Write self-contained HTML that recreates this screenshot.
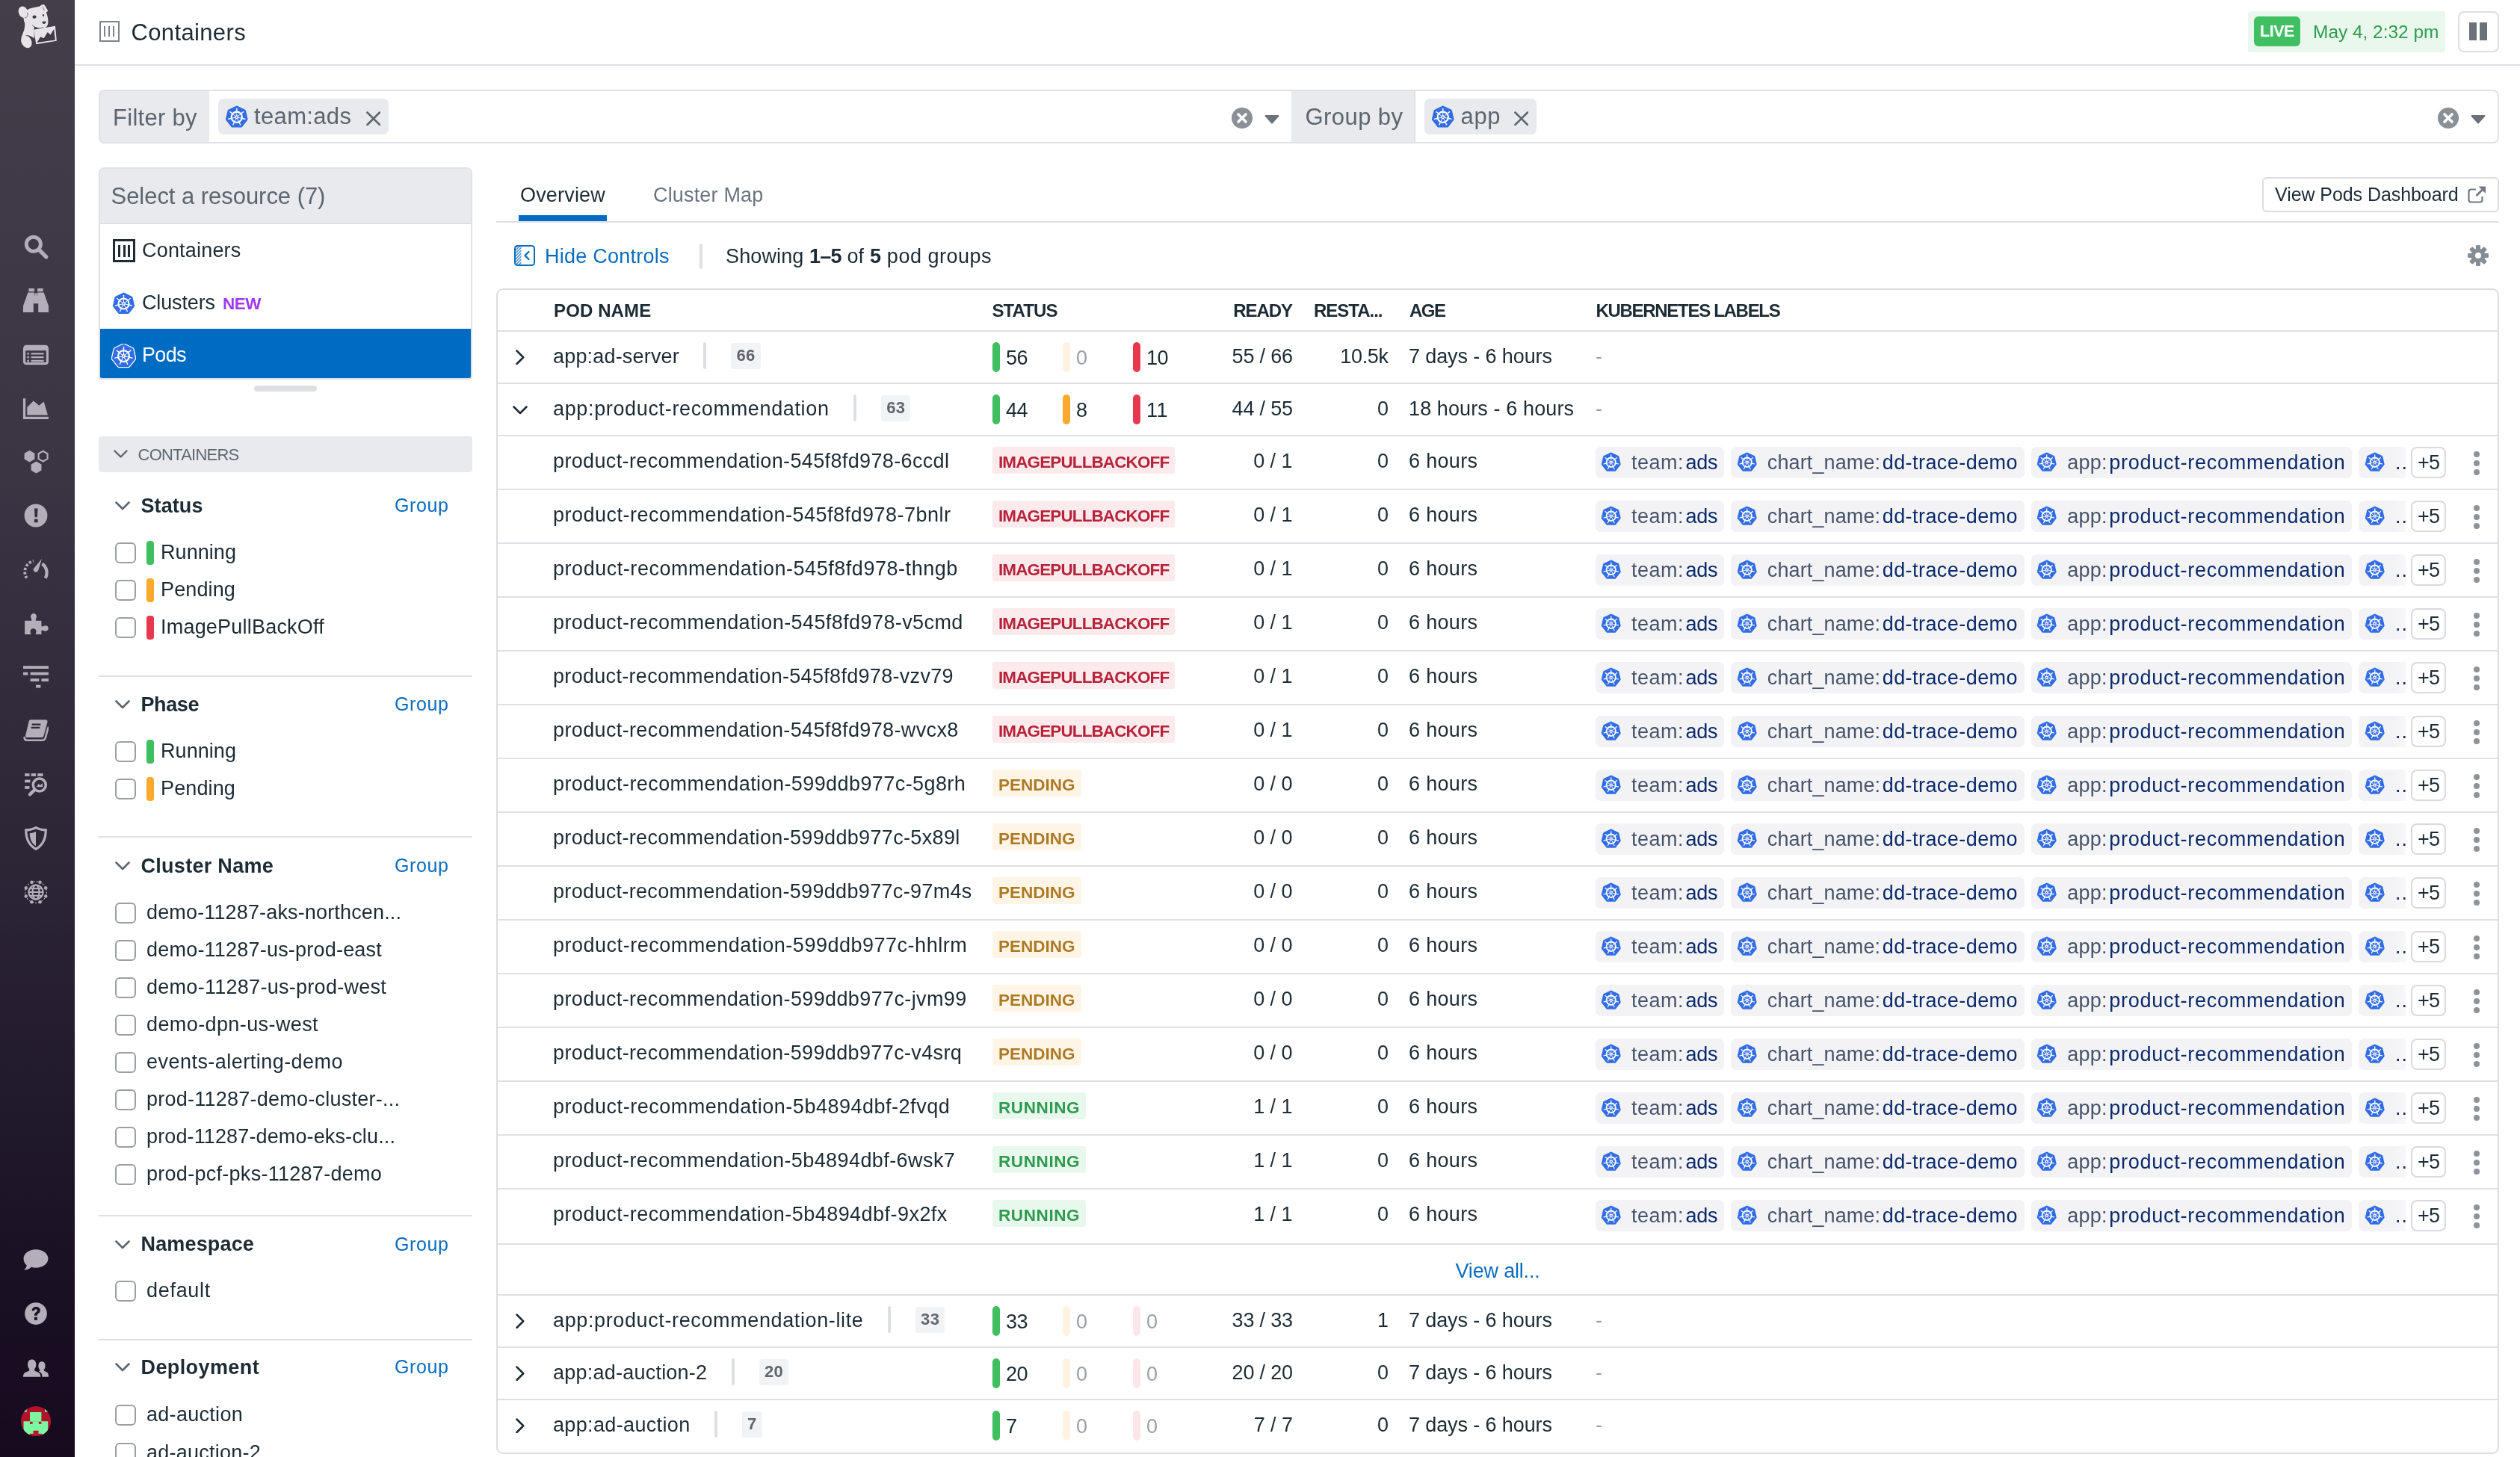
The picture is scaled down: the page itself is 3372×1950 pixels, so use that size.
<!DOCTYPE html>
<html lang="en"><head><meta charset="utf-8"><title>Containers</title><style>
html,body{margin:0;padding:0;}
html{width:3372px;height:1950px;overflow:hidden;background:#fff;}
body{width:3372px;height:1950px;overflow:hidden;background:#fff;position:relative;will-change:transform;font-family:"Liberation Sans",sans-serif;color:#1c2b34;}
div,span,svg{position:absolute;box-sizing:border-box;}
span{white-space:pre;}
b{font-weight:700;}
#root{left:0;top:0;width:3372px;height:1950px;overflow:hidden;}
</style></head><body><div id="root">
<div style="left:0px;top:0px;width:100px;height:1950px;background:linear-gradient(180deg,#433e4a 0%,#3b3544 30%,#2c2536 60%,#1b1226 85%,#160a1f 100%);"></div>
<svg style="left:0px;top:0px;" width="100" height="90" viewBox="0 0 1619 1457"><g fill="#e7e4e9">
<ellipse cx="500" cy="262" rx="98" ry="128" transform="rotate(-18 500 262)"/>
<path d="M560 235C640 165 800 160 872 135C895 95 950 85 972 118L1042 238L1002 268C1025 335 1052 420 1042 500C1036 560 1002 600 942 612C880 640 800 612 742 572L735 645L742 835C700 792 640 762 560 772L462 812C490 720 545 640 538 500C498 420 498 300 560 235Z"/>
<ellipse cx="572" cy="900" rx="108" ry="146" transform="rotate(-28 572 900)"/>
<path d="M730 643L1197 563L1228 886L782 960Z"/>
</g>
<g fill="#3f3a47">
<ellipse cx="745" cy="366" rx="42" ry="34" transform="rotate(-15 745 366)"/>
<ellipse cx="940" cy="332" rx="17" ry="27" transform="rotate(-25 940 332)"/>
<path d="M910 478C935 455 985 455 1000 470C990 505 965 525 945 518C925 510 912 495 910 478Z"/>
<path d="M800 922L878 798L950 828L1032 698L1092 752L1168 632L1196 868Z"/>
</g>
<g fill="none" stroke="#3f3a47" stroke-width="11" stroke-linecap="round">
<path d="M700 548C760 600 850 635 935 592"/>
<path d="M588 275C612 330 598 378 540 388"/>
<path d="M565 772C640 760 700 815 712 895"/>
<path d="M928 150L958 222"/>
</g></svg>
<svg style="left:31.0px;top:313.0px;" width="34" height="34" viewBox="0 0 32 32"><circle cx="13" cy="13" r="9" fill="none" stroke="#b4adba" stroke-width="4.6"/><path d="M20 20l9 9" stroke="#b4adba" stroke-width="5" stroke-linecap="round"/></svg>
<svg style="left:31.0px;top:385.0px;" width="34" height="34" viewBox="0 0 32 32"><g fill="#b4adba"><path d="M7 1h7v4H7zM18 1h7v4h-7zM6 6h8v4h4V6h8l6 17v8H19V20h-6v11H0v-8z"/><rect x="14.5" y="7" width="3" height="10" fill="#b4adba"/></g></svg>
<svg style="left:31.0px;top:458.0px;" width="34" height="34" viewBox="0 0 32 32"><g fill="none" stroke="#b4adba"><rect x="1.5" y="5" width="29" height="22" rx="2.5" stroke-width="3"/><path d="M1.5 8.5h29" stroke-width="4"/><path d="M10 14.5h16M10 19h16M10 23.5h16" stroke-width="2.2"/><path d="M5 14.5h2.5M5 19h2.5M5 23.5h2.5" stroke-width="2.2"/></g></svg>
<svg style="left:31.0px;top:529.0px;" width="34" height="34" viewBox="0 0 32 32"><g fill="#b4adba"><path d="M0 4h3v23h29v3H0z"/><path d="M5 25V15l8-8 7 6 6-5 5 17z"/></g></svg>
<svg style="left:31.0px;top:600.0px;" width="34" height="34" viewBox="0 0 32 32"><polygon points="8.00,2.50 14.50,6.25 14.50,13.75 8.00,17.50 1.50,13.75 1.50,6.25" fill="#b4adba"/><polygon points="16.50,16.50 23.00,20.25 23.00,27.75 16.50,31.50 10.00,27.75 10.00,20.25" fill="#b4adba"/><polygon points="25.00,3.50 30.63,6.75 30.63,13.25 25.00,16.50 19.37,13.25 19.37,6.75" fill="none" stroke="#b4adba" stroke-width="2"/></svg>
<svg style="left:31.0px;top:673.0px;" width="34" height="34" viewBox="0 0 32 32"><circle cx="16" cy="16" r="14.5" fill="#b4adba"/><path d="M14 7h4.5l-.8 11h-2.9z" fill="#362f40"/><rect x="14" y="20.5" width="4.5" height="4.2" fill="#362f40"/></svg>
<svg style="left:31.0px;top:745.0px;" width="34" height="34" viewBox="0 0 32 32"><g fill="none" stroke="#b4adba"><path d="M4.5 27A14 14 0 0 1 13 5.5" stroke-width="3.6" stroke-dasharray="3 2.2"/><path d="M24 9A14 14 0 0 1 28 27" stroke-width="4"/></g><path d="M23.5 2.5L19 17.5a3.2 3.2 0 0 1-6-2.2z" fill="#b4adba"/></svg>
<svg style="left:31.0px;top:817.0px;" width="34" height="34" viewBox="0 0 32 32"><path d="M2 13h7.5c1.2 0 1.5-1 1-2-.8-1.5-1-2.5-1-3.5 0-2.2 1.6-3.8 3.7-3.8s3.7 1.6 3.7 3.8c0 1-.3 2-1 3.5-.5 1 0 2 1 2H23v6c0 1.2 1 1.5 2 1 1-.6 2-.9 3-.9 2.2 0 3.8 1.5 3.8 3.5S30.2 26 28 26c-1 0-2-.3-3-.9-1-.5-2-.2-2 1V30h-7.5c.6-1.2 1-2.3 1-3.5 0-2.2-1.6-3.7-3.7-3.7S9 24.3 9 26.5c0 1.2.4 2.3 1 3.5H2z" fill="#b4adba"/></svg>
<svg style="left:31.0px;top:888.0px;" width="34" height="34" viewBox="0 0 32 32"><g fill="#b4adba"><rect x="0" y="3" width="32" height="3.6"/><rect x="0" y="11" width="6" height="3.6"/><rect x="9" y="11" width="23" height="3.6"/><rect x="9" y="19" width="11" height="3.6"/><rect x="23" y="19" width="9" height="3.6"/><rect x="16" y="27" width="6" height="3.6"/></g></svg>
<svg style="left:31.0px;top:960.0px;" width="34" height="34" viewBox="0 0 32 32"><g fill="#b4adba"><path d="M9 3h19c2 0 3 1.3 2.5 3l-4.5 17c-.4 1.5-1.5 2.5-3 2.5H5c-1.5 0-2.5-1.2-2-3L7 6c.3-1.7 .8-3 2-3z"/><path d="M1.5 25.5c0 2 1.2 3.5 3.3 3.5H24c2 0 3.3-1 4-3l3.5-13" fill="none" stroke="#b4adba" stroke-width="2.4" stroke-linecap="round"/></g><path d="M11 9h11M10 13h11" stroke="#2e2738" stroke-width="2"/></svg>
<svg style="left:31.0px;top:1033.0px;" width="34" height="34" viewBox="0 0 32 32"><g fill="#b4adba"><rect x="2" y="2" width="6" height="3.5"/><rect x="10" y="2" width="6" height="3.5"/><rect x="18" y="2" width="7" height="3.5"/><rect x="2" y="10" width="7" height="3.5"/><rect x="2" y="18" width="6" height="3.5"/></g><circle cx="20.5" cy="16.5" r="8" fill="none" stroke="#b4adba" stroke-width="3.4"/><path d="M14.5 22.5l-6 6" stroke="#b4adba" stroke-width="4.2" stroke-linecap="round"/><path d="M16.5 19l3-4 2 2 3-3v5z" fill="#b4adba"/></svg>
<svg style="left:31.0px;top:1105.0px;" width="34" height="34" viewBox="0 0 32 32"><path d="M16 2.5c4 2.2 8 3 12.5 3 0 11-3 19-12.5 24C6.5 24.5 3.5 16.5 3.5 5.5c4.5 0 8.5-.8 12.5-3z" fill="none" stroke="#b4adba" stroke-width="3"/><path d="M16 7.5c-2.5 1.3-5 2-7.8 2.2 .3 7.5 2.3 12.5 7.8 16z" fill="#b4adba"/></svg>
<svg style="left:31.0px;top:1177.0px;" width="34" height="34" viewBox="0 0 32 32"><g fill="none" stroke="#b4adba" stroke-width="2"><circle cx="16" cy="16" r="9"/><ellipse cx="16" cy="16" rx="4.2" ry="9"/><path d="M7 16h18M8.5 11.5h15M8.5 20.5h15"/><circle cx="16" cy="16" r="13.5" stroke-width="1" stroke-dasharray="2 2"/></g><g fill="#b4adba"><circle cx="28.47" cy="21.17" r="2.1"/><circle cx="21.17" cy="28.47" r="2.1"/><circle cx="10.83" cy="28.47" r="2.1"/><circle cx="3.53" cy="21.17" r="2.1"/><circle cx="3.53" cy="10.83" r="2.1"/><circle cx="10.83" cy="3.53" r="2.1"/><circle cx="21.17" cy="3.53" r="2.1"/><circle cx="28.47" cy="10.83" r="2.1"/></g></svg>
<svg style="left:31.0px;top:1669.0px;" width="34" height="34" viewBox="0 0 32 32"><path d="M16 3c8.5 0 15.5 5 15.5 11.5S24.5 26 16 26c-2 0-4-.3-5.7-.8C8 27.5 4.5 29 1 29c2-1.8 3.2-3.8 3.5-6C2 21 .5 18 .5 14.5.5 8 7.5 3 16 3z" fill="#b4adba"/></svg>
<svg style="left:31.0px;top:1741.0px;" width="34" height="34" viewBox="0 0 32 32"><circle cx="16" cy="16" r="14" fill="#b4adba"/><path d="M11 12.5c0-3 2.2-5 5.2-5s5.3 1.8 5.3 4.5c0 2.2-1.2 3.2-2.5 4-1 .7-1.3 1.2-1.3 2.5h-3.7c0-2.2.8-3.3 2.2-4.2 1-.7 1.5-1.2 1.5-2.2 0-.9-.7-1.5-1.7-1.5-1.1 0-1.8.7-1.8 1.9z" fill="#1a1224"/><rect x="14" y="20.5" width="3.8" height="3.8" fill="#1a1224"/></svg>
<svg style="left:31.0px;top:1813.0px;" width="34" height="34" viewBox="0 0 32 32"><g fill="#b4adba"><path d="M0 28c0-4 2-5.5 5-6.5 2-.7 3-1.5 3-3-1.5-1.5-2.3-3.5-2.3-6C5.7 8.5 7.7 6 11 6s5.3 2.5 5.3 6.5c0 2.5-.8 4.5-2.3 6 0 1.5 1 2.3 3 3 3 1 5 2.5 5 6.5z"/><path d="M24 28c0-3.5-1.5-5.8-4.5-7 1-.5 1.5-1 1.5-2-1.2-1.3-1.8-3-1.8-5 0-3.3 1.7-5.3 4.3-5.3s4.3 2 4.3 5.3c0 2-.6 3.7-1.8 5 0 1.2.8 1.8 2.5 2.4 2.5.9 3.5 2.6 3.5 6.6z"/></g></svg>
<svg style="left:28px;top:1882px;" width="40" height="40" viewBox="0 0 40 40"><defs><clipPath id="avc"><circle cx="20" cy="20" r="20"/></clipPath></defs><g clip-path="url(#avc)"><rect width="40" height="40" fill="#b3122b"/><g fill="#7ef7a1"><rect x="12" y="8" width="15.4" height="12.4"/><rect x="3.5" y="20.2" width="32.7" height="18.2"/><rect x="3.5" y="4" width="4.2" height="3.7"/><rect x="32" y="4" width="4.2" height="3.7"/></g><g fill="#b3122b"><rect x="12" y="20.8" width="3.6" height="3"/><rect x="23.8" y="20.8" width="3.6" height="3"/><rect x="16.5" y="32.7" width="7" height="4.2"/><rect x="12" y="36.8" width="16.2" height="3.2"/></g></g></svg>
<div style="left:100px;top:86px;width:3272px;height:2px;background:#e0e1e5;"></div>
<div style="left:133px;top:28px;width:26.5px;height:28px;border:2.5px solid #7b838b;"></div>
<div style="left:139px;top:35px;width:2px;height:14px;background:#7b838b;"></div>
<div style="left:145.2px;top:35px;width:2px;height:14px;background:#7b838b;"></div>
<div style="left:151.4px;top:35px;width:2px;height:14px;background:#7b838b;"></div>
<span style="top:24.3px;font-size:31px;line-height:40px;left:175.5px;letter-spacing:0.36px;">Containers</span>
<div style="left:3008px;top:14.8px;width:264px;height:54.8px;background:#eaf7ed;border-radius:4px;"></div>
<div style="left:3016px;top:22px;width:62px;height:40px;background:#40c063;border-radius:6px;"></div>
<span style="top:28.4px;font-size:21.5px;line-height:28px;left:3024px;letter-spacing:-0.45px;font-weight:700;color:#fff;">LIVE</span>
<span style="top:27.1px;font-size:24.5px;line-height:32px;left:3095px;letter-spacing:-0.03px;color:#2f9d4f;">May 4, 2:32 pm</span>
<div style="left:3288.5px;top:14.5px;width:55px;height:55px;border:2px solid #dcdee1;border-radius:8px;background:#fff;"></div>
<div style="left:3304px;top:30px;width:9.6px;height:24px;background:#6b717b;"></div>
<div style="left:3318.3px;top:30px;width:9.7px;height:24px;background:#6b717b;"></div>
<div style="left:132px;top:120px;width:3212px;height:72px;border:2px solid #e0e1e5;border-radius:8px;background:#fff;"></div>
<div style="left:132px;top:120px;width:148px;height:72px;background:#e9eaed;border:2px solid #e0e1e5;border-right:none;border-radius:8px 0 0 8px;"></div>
<div style="left:1728px;top:120px;width:166px;height:72px;background:#e9eaed;border:2px solid #e0e1e5;border-left:none;"></div>
<span style="top:137.8px;font-size:31px;line-height:40px;left:151px;letter-spacing:0.28px;color:#5c6570;">Filter by</span>
<div style="left:292px;top:132px;width:228px;height:48px;background:#e9eaed;border-radius:7px;"></div>
<svg style="left:300.5px;top:140.5px;" width="31.5" height="31.5" viewBox="-2 0 104 104"><polygon points="50.00,8.00 84.40,24.57 92.90,61.79 69.09,91.64 30.91,91.64 7.10,61.79 15.60,24.57" fill="#326de6" stroke="#326de6" stroke-width="12" stroke-linejoin="round"/><circle cx="50" cy="52" r="23.5" fill="none" stroke="#fff" stroke-width="7"/><line x1="50.0" y1="46.0" x2="50.0" y2="30.0" stroke="#fff" stroke-width="3.2"/><line x1="50.0" y1="26.0" x2="50.0" y2="14.5" stroke="#fff" stroke-width="4.6" stroke-linecap="round"/><line x1="54.7" y1="48.3" x2="67.2" y2="38.3" stroke="#fff" stroke-width="3.2"/><line x1="70.3" y1="35.8" x2="79.3" y2="28.6" stroke="#fff" stroke-width="4.6" stroke-linecap="round"/><line x1="55.8" y1="53.3" x2="71.4" y2="56.9" stroke="#fff" stroke-width="3.2"/><line x1="75.3" y1="57.8" x2="86.6" y2="60.3" stroke="#fff" stroke-width="4.6" stroke-linecap="round"/><line x1="52.6" y1="57.4" x2="59.5" y2="71.8" stroke="#fff" stroke-width="3.2"/><line x1="61.3" y1="75.4" x2="66.3" y2="85.8" stroke="#fff" stroke-width="4.6" stroke-linecap="round"/><line x1="47.4" y1="57.4" x2="40.5" y2="71.8" stroke="#fff" stroke-width="3.2"/><line x1="38.7" y1="75.4" x2="33.7" y2="85.8" stroke="#fff" stroke-width="4.6" stroke-linecap="round"/><line x1="44.2" y1="53.3" x2="28.6" y2="56.9" stroke="#fff" stroke-width="3.2"/><line x1="24.7" y1="57.8" x2="13.4" y2="60.3" stroke="#fff" stroke-width="4.6" stroke-linecap="round"/><line x1="45.3" y1="48.3" x2="32.8" y2="38.3" stroke="#fff" stroke-width="3.2"/><line x1="29.7" y1="35.8" x2="20.7" y2="28.6" stroke="#fff" stroke-width="4.6" stroke-linecap="round"/><circle cx="50" cy="52" r="8" fill="#fff"/><circle cx="50" cy="52" r="3.2" fill="#4a55c8"/></svg>
<span style="top:135.6px;font-size:31px;line-height:40px;left:340px;letter-spacing:0.35px;color:#5c6570;">team:ads</span>
<svg style="left:489.5px;top:148.5px;" width="19.5" height="19.5" viewBox="0 0 20 20"><path d="M1.5 1.5l17 17M18.5 1.5l-17 17" stroke="#5c6570" stroke-width="2.6666666666666665" stroke-linecap="round"/></svg>
<svg style="left:1648px;top:144px;" width="28" height="28" viewBox="0 0 28 28"><circle cx="14" cy="14" r="14" fill="#8a9096"/><path d="M9 9l10 10M19 9l-10 10" stroke="#fff" stroke-width="3.6" stroke-linecap="round"/></svg>
<svg style="left:1692px;top:153.5px;" width="20" height="12" viewBox="0 0 20 12"><path d="M1.5 0h17a1 1 0 0 1 .7 1.7l-8.5 9.5a1 1 0 0 1-1.4 0L.8 1.7A1 1 0 0 1 1.5 0z" fill="#6b727b"/></svg>
<span style="top:137.3px;font-size:31px;line-height:40px;left:1746.5px;letter-spacing:0.43px;color:#5c6570;">Group by</span>
<div style="left:1906px;top:132px;width:150px;height:48px;background:#e9eaed;border-radius:7px;"></div>
<svg style="left:1914.5px;top:140.5px;" width="31.5" height="31.5" viewBox="-2 0 104 104"><polygon points="50.00,8.00 84.40,24.57 92.90,61.79 69.09,91.64 30.91,91.64 7.10,61.79 15.60,24.57" fill="#326de6" stroke="#326de6" stroke-width="12" stroke-linejoin="round"/><circle cx="50" cy="52" r="23.5" fill="none" stroke="#fff" stroke-width="7"/><line x1="50.0" y1="46.0" x2="50.0" y2="30.0" stroke="#fff" stroke-width="3.2"/><line x1="50.0" y1="26.0" x2="50.0" y2="14.5" stroke="#fff" stroke-width="4.6" stroke-linecap="round"/><line x1="54.7" y1="48.3" x2="67.2" y2="38.3" stroke="#fff" stroke-width="3.2"/><line x1="70.3" y1="35.8" x2="79.3" y2="28.6" stroke="#fff" stroke-width="4.6" stroke-linecap="round"/><line x1="55.8" y1="53.3" x2="71.4" y2="56.9" stroke="#fff" stroke-width="3.2"/><line x1="75.3" y1="57.8" x2="86.6" y2="60.3" stroke="#fff" stroke-width="4.6" stroke-linecap="round"/><line x1="52.6" y1="57.4" x2="59.5" y2="71.8" stroke="#fff" stroke-width="3.2"/><line x1="61.3" y1="75.4" x2="66.3" y2="85.8" stroke="#fff" stroke-width="4.6" stroke-linecap="round"/><line x1="47.4" y1="57.4" x2="40.5" y2="71.8" stroke="#fff" stroke-width="3.2"/><line x1="38.7" y1="75.4" x2="33.7" y2="85.8" stroke="#fff" stroke-width="4.6" stroke-linecap="round"/><line x1="44.2" y1="53.3" x2="28.6" y2="56.9" stroke="#fff" stroke-width="3.2"/><line x1="24.7" y1="57.8" x2="13.4" y2="60.3" stroke="#fff" stroke-width="4.6" stroke-linecap="round"/><line x1="45.3" y1="48.3" x2="32.8" y2="38.3" stroke="#fff" stroke-width="3.2"/><line x1="29.7" y1="35.8" x2="20.7" y2="28.6" stroke="#fff" stroke-width="4.6" stroke-linecap="round"/><circle cx="50" cy="52" r="8" fill="#fff"/><circle cx="50" cy="52" r="3.2" fill="#4a55c8"/></svg>
<span style="top:135.6px;font-size:31px;line-height:40px;left:1954.5px;letter-spacing:0.67px;color:#5c6570;">app</span>
<svg style="left:2025.5px;top:148.5px;" width="19.5" height="19.5" viewBox="0 0 20 20"><path d="M1.5 1.5l17 17M18.5 1.5l-17 17" stroke="#5c6570" stroke-width="2.6666666666666665" stroke-linecap="round"/></svg>
<svg style="left:3262px;top:144px;" width="28" height="28" viewBox="0 0 28 28"><circle cx="14" cy="14" r="14" fill="#8a9096"/><path d="M9 9l10 10M19 9l-10 10" stroke="#fff" stroke-width="3.6" stroke-linecap="round"/></svg>
<svg style="left:3305.5px;top:153.5px;" width="20" height="12" viewBox="0 0 20 12"><path d="M1.5 0h17a1 1 0 0 1 .7 1.7l-8.5 9.5a1 1 0 0 1-1.4 0L.8 1.7A1 1 0 0 1 1.5 0z" fill="#6b727b"/></svg>
<div style="left:132px;top:224px;width:500px;height:284px;border:2px solid #e0e1e5;border-radius:8px 8px 4px 4px;background:#fff;overflow:hidden;box-shadow:0 1px 2px rgba(0,0,0,.06);"><div style="left:0;top:0;width:496px;height:72px;background:#e9eaed;"></div><div style="left:0;top:72px;width:496px;height:2px;background:#dcdfe5;"></div><div style="left:0;top:214px;width:496px;height:70px;background:#006bc2;"></div></div>
<span style="top:243.3px;font-size:31px;line-height:40px;left:148.5px;letter-spacing:-0.04px;color:#5c6570;">Select a resource (7)</span>
<div style="left:151px;top:320px;width:30px;height:31px;border:3.5px solid #1c2b34;"></div>
<div style="left:158px;top:328px;width:3px;height:16px;background:#1c2b34;"></div>
<div style="left:164.5px;top:328px;width:3px;height:16px;background:#1c2b34;"></div>
<div style="left:171px;top:328px;width:3px;height:16px;background:#1c2b34;"></div>
<span style="top:317.7px;font-size:27px;line-height:35px;left:190px;letter-spacing:0.19px;">Containers</span>
<svg style="left:150px;top:391px;" width="31" height="31" viewBox="-2 0 104 104"><polygon points="50.00,8.00 84.40,24.57 92.90,61.79 69.09,91.64 30.91,91.64 7.10,61.79 15.60,24.57" fill="#326de6" stroke="#326de6" stroke-width="12" stroke-linejoin="round"/><circle cx="50" cy="52" r="23.5" fill="none" stroke="#fff" stroke-width="7"/><line x1="50.0" y1="46.0" x2="50.0" y2="30.0" stroke="#fff" stroke-width="3.2"/><line x1="50.0" y1="26.0" x2="50.0" y2="14.5" stroke="#fff" stroke-width="4.6" stroke-linecap="round"/><line x1="54.7" y1="48.3" x2="67.2" y2="38.3" stroke="#fff" stroke-width="3.2"/><line x1="70.3" y1="35.8" x2="79.3" y2="28.6" stroke="#fff" stroke-width="4.6" stroke-linecap="round"/><line x1="55.8" y1="53.3" x2="71.4" y2="56.9" stroke="#fff" stroke-width="3.2"/><line x1="75.3" y1="57.8" x2="86.6" y2="60.3" stroke="#fff" stroke-width="4.6" stroke-linecap="round"/><line x1="52.6" y1="57.4" x2="59.5" y2="71.8" stroke="#fff" stroke-width="3.2"/><line x1="61.3" y1="75.4" x2="66.3" y2="85.8" stroke="#fff" stroke-width="4.6" stroke-linecap="round"/><line x1="47.4" y1="57.4" x2="40.5" y2="71.8" stroke="#fff" stroke-width="3.2"/><line x1="38.7" y1="75.4" x2="33.7" y2="85.8" stroke="#fff" stroke-width="4.6" stroke-linecap="round"/><line x1="44.2" y1="53.3" x2="28.6" y2="56.9" stroke="#fff" stroke-width="3.2"/><line x1="24.7" y1="57.8" x2="13.4" y2="60.3" stroke="#fff" stroke-width="4.6" stroke-linecap="round"/><line x1="45.3" y1="48.3" x2="32.8" y2="38.3" stroke="#fff" stroke-width="3.2"/><line x1="29.7" y1="35.8" x2="20.7" y2="28.6" stroke="#fff" stroke-width="4.6" stroke-linecap="round"/><circle cx="50" cy="52" r="8" fill="#fff"/><circle cx="50" cy="52" r="3.2" fill="#4a55c8"/></svg>
<span style="top:388.1px;font-size:27px;line-height:35px;left:190px;letter-spacing:-0.13px;">Clusters</span>
<span style="top:392.2px;font-size:22.5px;line-height:29px;left:298px;letter-spacing:-0.5px;font-weight:700;color:#9f3bf2;">NEW</span>
<svg style="left:149px;top:460px;" width="33" height="33" viewBox="-2 0 104 104"><polygon points="50.00,8.00 84.40,24.57 92.90,61.79 69.09,91.64 30.91,91.64 7.10,61.79 15.60,24.57" fill="#fff" stroke="#fff" stroke-width="20" stroke-linejoin="round"/><polygon points="50.00,8.00 84.40,24.57 92.90,61.79 69.09,91.64 30.91,91.64 7.10,61.79 15.60,24.57" fill="#326de6" stroke="#326de6" stroke-width="12" stroke-linejoin="round"/><circle cx="50" cy="52" r="23.5" fill="none" stroke="#fff" stroke-width="7"/><line x1="50.0" y1="46.0" x2="50.0" y2="30.0" stroke="#fff" stroke-width="3.2"/><line x1="50.0" y1="26.0" x2="50.0" y2="14.5" stroke="#fff" stroke-width="4.6" stroke-linecap="round"/><line x1="54.7" y1="48.3" x2="67.2" y2="38.3" stroke="#fff" stroke-width="3.2"/><line x1="70.3" y1="35.8" x2="79.3" y2="28.6" stroke="#fff" stroke-width="4.6" stroke-linecap="round"/><line x1="55.8" y1="53.3" x2="71.4" y2="56.9" stroke="#fff" stroke-width="3.2"/><line x1="75.3" y1="57.8" x2="86.6" y2="60.3" stroke="#fff" stroke-width="4.6" stroke-linecap="round"/><line x1="52.6" y1="57.4" x2="59.5" y2="71.8" stroke="#fff" stroke-width="3.2"/><line x1="61.3" y1="75.4" x2="66.3" y2="85.8" stroke="#fff" stroke-width="4.6" stroke-linecap="round"/><line x1="47.4" y1="57.4" x2="40.5" y2="71.8" stroke="#fff" stroke-width="3.2"/><line x1="38.7" y1="75.4" x2="33.7" y2="85.8" stroke="#fff" stroke-width="4.6" stroke-linecap="round"/><line x1="44.2" y1="53.3" x2="28.6" y2="56.9" stroke="#fff" stroke-width="3.2"/><line x1="24.7" y1="57.8" x2="13.4" y2="60.3" stroke="#fff" stroke-width="4.6" stroke-linecap="round"/><line x1="45.3" y1="48.3" x2="32.8" y2="38.3" stroke="#fff" stroke-width="3.2"/><line x1="29.7" y1="35.8" x2="20.7" y2="28.6" stroke="#fff" stroke-width="4.6" stroke-linecap="round"/><circle cx="50" cy="52" r="8" fill="#fff"/><circle cx="50" cy="52" r="3.2" fill="#4a55c8"/></svg>
<span style="top:457.9px;font-size:27px;line-height:35px;left:190px;letter-spacing:-0.64px;color:#fff;">Pods</span>
<div style="left:340px;top:516px;width:84px;height:8px;background:#dddfe2;border-radius:4px;"></div>
<div style="left:132px;top:584px;width:500px;height:48px;background:#e9eaed;border-radius:4px;"></div>
<svg style="left:152.0px;top:602.25px;" width="19" height="11.5" viewBox="0 0 19 11.5"><path d="M1.5 1.5L9.5 9.5L17.5 1.5" fill="none" stroke="#5c6570" stroke-width="2.4" stroke-linecap="round" stroke-linejoin="round"/></svg>
<span style="top:593.9px;font-size:22px;line-height:29px;left:184.5px;letter-spacing:-0.76px;color:#5e6772;">CONTAINERS</span>
<svg style="left:154.0px;top:671.0px;" width="20" height="12.0" viewBox="0 0 20 12.0"><path d="M1.5 1.5L10.0 10.0L18.5 1.5" fill="none" stroke="#5c6570" stroke-width="2.6" stroke-linecap="round" stroke-linejoin="round"/></svg>
<span style="top:659.6px;font-size:27px;line-height:35px;left:188.5px;letter-spacing:0.08px;font-weight:700;">Status</span>
<span style="top:660.1px;font-size:25px;line-height:32px;left:528px;letter-spacing:0.6px;color:#0b6cbf;">Group</span>
<div style="left:154px;top:726px;width:28px;height:28px;border:2px solid #9b9ea3;border-radius:6px;background:#fff;"></div>
<div style="left:196px;top:723.5px;width:10px;height:32px;background:#3fbf5f;border-radius:4px;"></div>
<span style="top:722.4px;font-size:27px;line-height:35px;left:215px;letter-spacing:0.06px;">Running</span>
<div style="left:154px;top:776px;width:28px;height:28px;border:2px solid #9b9ea3;border-radius:6px;background:#fff;"></div>
<div style="left:196px;top:773.5px;width:10px;height:32px;background:#fbaa2d;border-radius:4px;"></div>
<span style="top:772.4px;font-size:27px;line-height:35px;left:215px;letter-spacing:0.13px;">Pending</span>
<div style="left:154px;top:826px;width:28px;height:28px;border:2px solid #9b9ea3;border-radius:6px;background:#fff;"></div>
<div style="left:196px;top:823.5px;width:10px;height:32px;background:#e8384f;border-radius:4px;"></div>
<span style="top:822.4px;font-size:27px;line-height:35px;left:215px;letter-spacing:0.21px;">ImagePullBackOff</span>
<div style="left:132px;top:904px;width:500px;height:2px;background:#dfe0e3;"></div>
<svg style="left:154.0px;top:937.0px;" width="20" height="12.0" viewBox="0 0 20 12.0"><path d="M1.5 1.5L10.0 10.0L18.5 1.5" fill="none" stroke="#5c6570" stroke-width="2.6" stroke-linecap="round" stroke-linejoin="round"/></svg>
<span style="top:925.6px;font-size:27px;line-height:35px;left:188.5px;letter-spacing:-0.41px;font-weight:700;">Phase</span>
<span style="top:926.1px;font-size:25px;line-height:32px;left:528px;letter-spacing:0.6px;color:#0b6cbf;">Group</span>
<div style="left:154px;top:992px;width:28px;height:28px;border:2px solid #9b9ea3;border-radius:6px;background:#fff;"></div>
<div style="left:196px;top:989.5px;width:10px;height:32px;background:#3fbf5f;border-radius:4px;"></div>
<span style="top:988.4px;font-size:27px;line-height:35px;left:215px;letter-spacing:0.06px;">Running</span>
<div style="left:154px;top:1042px;width:28px;height:28px;border:2px solid #9b9ea3;border-radius:6px;background:#fff;"></div>
<div style="left:196px;top:1039.5px;width:10px;height:32px;background:#fbaa2d;border-radius:4px;"></div>
<span style="top:1038.4px;font-size:27px;line-height:35px;left:215px;letter-spacing:0.13px;">Pending</span>
<div style="left:132px;top:1119px;width:500px;height:2px;background:#dfe0e3;"></div>
<svg style="left:154.0px;top:1153.0px;" width="20" height="12.0" viewBox="0 0 20 12.0"><path d="M1.5 1.5L10.0 10.0L18.5 1.5" fill="none" stroke="#5c6570" stroke-width="2.6" stroke-linecap="round" stroke-linejoin="round"/></svg>
<span style="top:1141.6px;font-size:27px;line-height:35px;left:188.5px;letter-spacing:0.29px;font-weight:700;">Cluster Name</span>
<span style="top:1142.1px;font-size:25px;line-height:32px;left:528px;letter-spacing:0.6px;color:#0b6cbf;">Group</span>
<div style="left:154px;top:1208px;width:28px;height:28px;border:2px solid #9b9ea3;border-radius:6px;background:#fff;"></div>
<span style="top:1204.4px;font-size:27px;line-height:35px;left:196px;letter-spacing:0.15px;">demo-11287-aks-northcen...</span>
<div style="left:154px;top:1258px;width:28px;height:28px;border:2px solid #9b9ea3;border-radius:6px;background:#fff;"></div>
<span style="top:1254.4px;font-size:27px;line-height:35px;left:196px;letter-spacing:0.21px;">demo-11287-us-prod-east</span>
<div style="left:154px;top:1308px;width:28px;height:28px;border:2px solid #9b9ea3;border-radius:6px;background:#fff;"></div>
<span style="top:1304.4px;font-size:27px;line-height:35px;left:196px;letter-spacing:0.28px;">demo-11287-us-prod-west</span>
<div style="left:154px;top:1358px;width:28px;height:28px;border:2px solid #9b9ea3;border-radius:6px;background:#fff;"></div>
<span style="top:1354.4px;font-size:27px;line-height:35px;left:196px;letter-spacing:0.4px;">demo-dpn-us-west</span>
<div style="left:154px;top:1408px;width:28px;height:28px;border:2px solid #9b9ea3;border-radius:6px;background:#fff;"></div>
<span style="top:1404.4px;font-size:27px;line-height:35px;left:196px;letter-spacing:0.47px;">events-alerting-demo</span>
<div style="left:154px;top:1458px;width:28px;height:28px;border:2px solid #9b9ea3;border-radius:6px;background:#fff;"></div>
<span style="top:1454.4px;font-size:27px;line-height:35px;left:196px;letter-spacing:0.24px;">prod-11287-demo-cluster-...</span>
<div style="left:154px;top:1508px;width:28px;height:28px;border:2px solid #9b9ea3;border-radius:6px;background:#fff;"></div>
<span style="top:1504.4px;font-size:27px;line-height:35px;left:196px;letter-spacing:0.13px;">prod-11287-demo-eks-clu...</span>
<div style="left:154px;top:1558px;width:28px;height:28px;border:2px solid #9b9ea3;border-radius:6px;background:#fff;"></div>
<span style="top:1554.4px;font-size:27px;line-height:35px;left:196px;letter-spacing:0.28px;">prod-pcf-pks-11287-demo</span>
<div style="left:132px;top:1626px;width:500px;height:2px;background:#dfe0e3;"></div>
<svg style="left:154.0px;top:1659.5px;" width="20" height="12.0" viewBox="0 0 20 12.0"><path d="M1.5 1.5L10.0 10.0L18.5 1.5" fill="none" stroke="#5c6570" stroke-width="2.6" stroke-linecap="round" stroke-linejoin="round"/></svg>
<span style="top:1648.1px;font-size:27px;line-height:35px;left:188.5px;letter-spacing:0.16px;font-weight:700;">Namespace</span>
<span style="top:1648.6px;font-size:25px;line-height:32px;left:528px;letter-spacing:0.6px;color:#0b6cbf;">Group</span>
<div style="left:154px;top:1714px;width:28px;height:28px;border:2px solid #9b9ea3;border-radius:6px;background:#fff;"></div>
<span style="top:1710.4px;font-size:27px;line-height:35px;left:196px;letter-spacing:0.7px;">default</span>
<div style="left:132px;top:1792px;width:500px;height:2px;background:#dfe0e3;"></div>
<svg style="left:154.0px;top:1824.2px;" width="20" height="12.0" viewBox="0 0 20 12.0"><path d="M1.5 1.5L10.0 10.0L18.5 1.5" fill="none" stroke="#5c6570" stroke-width="2.6" stroke-linecap="round" stroke-linejoin="round"/></svg>
<span style="top:1812.8px;font-size:27px;line-height:35px;left:188.5px;letter-spacing:0.4px;font-weight:700;">Deployment</span>
<span style="top:1813.3px;font-size:25px;line-height:32px;left:528px;letter-spacing:0.6px;color:#0b6cbf;">Group</span>
<div style="left:154px;top:1880px;width:28px;height:28px;border:2px solid #9b9ea3;border-radius:6px;background:#fff;"></div>
<span style="top:1876.4px;font-size:27px;line-height:35px;left:196px;letter-spacing:0.29px;">ad-auction</span>
<div style="left:154px;top:1930.5px;width:28px;height:28px;border:2px solid #9b9ea3;border-radius:6px;background:#fff;"></div>
<span style="top:1926.9px;font-size:27px;line-height:35px;left:196px;letter-spacing:0.24px;">ad-auction-2</span>
<div style="left:664px;top:296px;width:2680px;height:2px;background:#e0e1e5;"></div>
<span style="top:244.1px;font-size:27px;line-height:35px;left:696px;letter-spacing:0.18px;">Overview</span>
<div style="left:694px;top:288px;width:118px;height:8px;background:#006bc2;"></div>
<span style="top:244.1px;font-size:27px;line-height:35px;left:874px;letter-spacing:0.17px;color:#6a7380;">Cluster Map</span>
<div style="left:3027px;top:237px;width:317px;height:46.5px;border:2px solid #dadcdf;border-radius:6px;background:#fff;"></div>
<span style="top:243.6px;font-size:25px;line-height:32px;left:3044px;letter-spacing:-0.07px;">View Pods Dashboard</span>
<svg style="left:3301px;top:248px;" width="27" height="24" viewBox="0 0 27 24"><path d="M12 5.5H5.5a3 3 0 0 0-3 3v11a3 3 0 0 0 3 3h12a3 3 0 0 0 3-3V15" fill="none" stroke="#727980" stroke-width="2.2"/><path d="M12.5 14L22.5 4" fill="none" stroke="#727980" stroke-width="2.8"/><path d="M15.5 1.5H25V11z" fill="#727980"/></svg>
<svg style="left:688px;top:328px;" width="28" height="28" viewBox="0 0 28 28"><defs><pattern id="hp" width="2.8" height="2.8" patternUnits="userSpaceOnUse" patternTransform="rotate(45)"><rect width="1.2" height="2.8" fill="#0b6cbf"/></pattern></defs><rect x="1" y="1" width="26" height="26" rx="3.5" fill="#fff" stroke="#0b6cbf" stroke-width="2"/><rect x="2" y="2" width="7.5" height="24" fill="url(#hp)"/><path d="M19.5 9l-5 5 5 5" fill="none" stroke="#0b6cbf" stroke-width="2.4" stroke-linecap="round" stroke-linejoin="round"/></svg>
<span style="top:326.1px;font-size:27px;line-height:35px;left:729px;letter-spacing:0.24px;color:#0b6cbf;">Hide Controls</span>
<div style="left:936px;top:326px;width:4px;height:34px;background:#dfe0e4;border-radius:2px;"></div>
<span style="top:326.1px;font-size:27px;line-height:35px;left:971px;letter-spacing:0.12px;">Showing </span>
<span style="top:326.1px;font-size:27px;line-height:35px;left:1083.034px;letter-spacing:-0.77px;font-weight:700;">1–5</span>
<span style="top:326.1px;font-size:27px;line-height:35px;left:1125.778px;letter-spacing:0.17px;"> of </span>
<span style="top:326.1px;font-size:27px;line-height:35px;left:1163.972px;letter-spacing:-0.14px;font-weight:700;">5</span>
<span style="top:326.1px;font-size:27px;line-height:35px;left:1178.844px;letter-spacing:0.51px;"> pod groups</span>
<svg style="left:3302px;top:328px;" width="28" height="28" viewBox="0 0 28 28"><g fill="#878e93"><circle cx="14" cy="14" r="9.5"/><rect x="11" y="0" width="6" height="7" rx="1.2" transform="rotate(0 14 14)"/><rect x="11" y="0" width="6" height="7" rx="1.2" transform="rotate(45 14 14)"/><rect x="11" y="0" width="6" height="7" rx="1.2" transform="rotate(90 14 14)"/><rect x="11" y="0" width="6" height="7" rx="1.2" transform="rotate(135 14 14)"/><rect x="11" y="0" width="6" height="7" rx="1.2" transform="rotate(180 14 14)"/><rect x="11" y="0" width="6" height="7" rx="1.2" transform="rotate(225 14 14)"/><rect x="11" y="0" width="6" height="7" rx="1.2" transform="rotate(270 14 14)"/><rect x="11" y="0" width="6" height="7" rx="1.2" transform="rotate(315 14 14)"/></g><circle cx="14" cy="14" r="4" fill="#fff"/></svg>
<div style="left:664px;top:386px;width:2680px;height:1560px;border:2px solid #dcdde0;border-radius:9px;background:#fff;"></div>
<span style="top:399.8px;font-size:24px;line-height:31px;left:741px;letter-spacing:0.12px;font-weight:700;">POD NAME</span>
<span style="top:399.8px;font-size:24px;line-height:31px;left:1327.5px;letter-spacing:-0.91px;font-weight:700;">STATUS</span>
<span style="top:399.8px;font-size:24px;line-height:31px;right:1643.1px;letter-spacing:-1.09px;font-weight:700;">READY</span>
<span style="top:399.8px;font-size:24px;line-height:31px;left:1758px;letter-spacing:-1.01px;font-weight:700;">RESTA...</span>
<span style="top:399.8px;font-size:24px;line-height:31px;left:1886px;letter-spacing:-1.54px;font-weight:700;">AGE</span>
<span style="top:399.8px;font-size:24px;line-height:31px;left:2135.5px;letter-spacing:-1.3px;font-weight:700;">KUBERNETES LABELS</span>
<div style="left:666px;top:442px;width:2676px;height:2px;background:#dfe0e3;"></div>
<svg style="left:690.375px;top:467.75px;" width="12.25" height="20.5" viewBox="0 0 12.25 20.5"><path d="M1.5 1.5L10.25 10.25L1.5 19.0" fill="none" stroke="#1c2b34" stroke-width="2.5" stroke-linecap="round" stroke-linejoin="round"/></svg>
<span style="top:460.3px;font-size:27px;line-height:35px;left:740px;letter-spacing:0.18px;">app:ad-server</span>
<div style="left:941.448px;top:458.0px;width:4px;height:36px;background:#dedfe3;border-radius:2px;"></div>
<div style="left:978.448px;top:459.0px;width:39.168px;height:34.5px;background:#f2f3f4;border-radius:4px;"></div>
<span style="top:461.2px;font-size:22px;line-height:29px;left:985.448px;letter-spacing:0.35px;font-weight:700;color:#5f666f;">66</span>
<div style="left:1328px;top:458.0px;width:10px;height:40px;background:#3fbf5f;border-radius:5px;"></div>
<span style="top:461.5px;font-size:27px;line-height:35px;left:1346px;letter-spacing:-0.51px;">56</span>
<div style="left:1422px;top:458.0px;width:10px;height:40px;background:#fef2e0;border-radius:5px;"></div>
<span style="top:461.5px;font-size:27px;line-height:35px;left:1440px;letter-spacing:-0.51px;color:#9ba0a8;">0</span>
<div style="left:1516px;top:458.0px;width:10px;height:40px;background:#e8384f;border-radius:5px;"></div>
<span style="top:461.5px;font-size:27px;line-height:35px;left:1534px;letter-spacing:-0.51px;">10</span>
<span style="top:459.8px;font-size:27px;line-height:35px;right:1642.2px;letter-spacing:-0.19px;">55 / 66</span>
<span style="top:459.8px;font-size:27px;line-height:35px;right:1514.3px;letter-spacing:-0.33px;">10.5k</span>
<span style="top:460.3px;font-size:27px;line-height:35px;left:1885px;letter-spacing:-0.11px;">7 days - 6 hours</span>
<span style="top:460.3px;font-size:27px;line-height:35px;left:2135px;letter-spacing:-0.62px;color:#9aa0a8;">-</span>
<div style="left:666px;top:512px;width:2676px;height:2px;background:#dfe0e3;"></div>
<svg style="left:686.0px;top:543.0px;" width="20" height="12.0" viewBox="0 0 20 12.0"><path d="M1.5 1.5L10.0 10.0L18.5 1.5" fill="none" stroke="#1c2b34" stroke-width="2.5" stroke-linecap="round" stroke-linejoin="round"/></svg>
<span style="top:530.3px;font-size:27px;line-height:35px;left:740px;letter-spacing:0.65px;">app:product-recommendation</span>
<div style="left:1142.22px;top:528.0px;width:4px;height:36px;background:#dedfe3;border-radius:2px;"></div>
<div style="left:1179.22px;top:529.0px;width:39.168px;height:34.5px;background:#f2f3f4;border-radius:4px;"></div>
<span style="top:531.2px;font-size:22px;line-height:29px;left:1186.22px;letter-spacing:0.35px;font-weight:700;color:#5f666f;">63</span>
<div style="left:1328px;top:528.0px;width:10px;height:40px;background:#3fbf5f;border-radius:5px;"></div>
<span style="top:531.5px;font-size:27px;line-height:35px;left:1346px;letter-spacing:-0.51px;">44</span>
<div style="left:1422px;top:528.0px;width:10px;height:40px;background:#fbaa2d;border-radius:5px;"></div>
<span style="top:531.5px;font-size:27px;line-height:35px;left:1440px;letter-spacing:-0.51px;">8</span>
<div style="left:1516px;top:528.0px;width:10px;height:40px;background:#e8384f;border-radius:5px;"></div>
<span style="top:531.5px;font-size:27px;line-height:35px;left:1534px;letter-spacing:0.49px;">11</span>
<span style="top:529.8px;font-size:27px;line-height:35px;right:1642.2px;letter-spacing:-0.19px;">44 / 55</span>
<span style="top:529.8px;font-size:27px;line-height:35px;right:1514.5px;letter-spacing:-0.51px;">0</span>
<span style="top:530.3px;font-size:27px;line-height:35px;left:1885px;letter-spacing:0.11px;">18 hours - 6 hours</span>
<span style="top:530.3px;font-size:27px;line-height:35px;left:2135px;letter-spacing:-0.62px;color:#9aa0a8;">-</span>
<div style="left:666px;top:582px;width:2676px;height:2px;background:#dfe0e3;"></div>
<span style="top:600.3px;font-size:27px;line-height:35px;left:740px;letter-spacing:0.36px;">product-recommendation-545f8fd978-6ccdl</span>
<div style="left:1328px;top:598px;width:244.316px;height:36px;background:#fdeaec;border-radius:3px;"></div>
<span style="top:604.0px;font-size:22.5px;line-height:29px;left:1336px;letter-spacing:-0.89px;font-weight:700;color:#b6233a;">IMAGEPULLBACKOFF</span>
<span style="top:600.3px;font-size:27px;line-height:35px;right:1642.6px;letter-spacing:-0.07px;">0 / 1</span>
<span style="top:600.3px;font-size:27px;line-height:35px;right:1514.5px;letter-spacing:-0.51px;">0</span>
<span style="top:600.3px;font-size:27px;line-height:35px;left:1885px;letter-spacing:0.32px;">6 hours</span>
<div style="left:2134.5px;top:598px;width:172.544px;height:42px;background:#f3f3f5;border-radius:7px;"></div>
<svg style="left:2142.0px;top:605px;" width="27.5" height="27.5" viewBox="-2 0 104 104"><polygon points="50.00,8.00 84.40,24.57 92.90,61.79 69.09,91.64 30.91,91.64 7.10,61.79 15.60,24.57" fill="#326de6" stroke="#326de6" stroke-width="12" stroke-linejoin="round"/><circle cx="50" cy="52" r="23.5" fill="none" stroke="#fff" stroke-width="7"/><line x1="50.0" y1="46.0" x2="50.0" y2="30.0" stroke="#fff" stroke-width="3.2"/><line x1="50.0" y1="26.0" x2="50.0" y2="14.5" stroke="#fff" stroke-width="4.6" stroke-linecap="round"/><line x1="54.7" y1="48.3" x2="67.2" y2="38.3" stroke="#fff" stroke-width="3.2"/><line x1="70.3" y1="35.8" x2="79.3" y2="28.6" stroke="#fff" stroke-width="4.6" stroke-linecap="round"/><line x1="55.8" y1="53.3" x2="71.4" y2="56.9" stroke="#fff" stroke-width="3.2"/><line x1="75.3" y1="57.8" x2="86.6" y2="60.3" stroke="#fff" stroke-width="4.6" stroke-linecap="round"/><line x1="52.6" y1="57.4" x2="59.5" y2="71.8" stroke="#fff" stroke-width="3.2"/><line x1="61.3" y1="75.4" x2="66.3" y2="85.8" stroke="#fff" stroke-width="4.6" stroke-linecap="round"/><line x1="47.4" y1="57.4" x2="40.5" y2="71.8" stroke="#fff" stroke-width="3.2"/><line x1="38.7" y1="75.4" x2="33.7" y2="85.8" stroke="#fff" stroke-width="4.6" stroke-linecap="round"/><line x1="44.2" y1="53.3" x2="28.6" y2="56.9" stroke="#fff" stroke-width="3.2"/><line x1="24.7" y1="57.8" x2="13.4" y2="60.3" stroke="#fff" stroke-width="4.6" stroke-linecap="round"/><line x1="45.3" y1="48.3" x2="32.8" y2="38.3" stroke="#fff" stroke-width="3.2"/><line x1="29.7" y1="35.8" x2="20.7" y2="28.6" stroke="#fff" stroke-width="4.6" stroke-linecap="round"/><circle cx="50" cy="52" r="8" fill="#fff"/><circle cx="50" cy="52" r="3.2" fill="#4a55c8"/></svg>
<span style="top:601.5px;font-size:27px;line-height:35px;left:2183.0px;letter-spacing:0.48px;color:#46536a;">team:</span>
<span style="top:601.5px;font-size:27px;line-height:35px;left:2255.414px;letter-spacing:-0.17px;color:#0a2a6b;">ads</span>
<div style="left:2316.294px;top:598px;width:392.27px;height:42px;background:#f3f3f5;border-radius:7px;"></div>
<svg style="left:2323.794px;top:605px;" width="27.5" height="27.5" viewBox="-2 0 104 104"><polygon points="50.00,8.00 84.40,24.57 92.90,61.79 69.09,91.64 30.91,91.64 7.10,61.79 15.60,24.57" fill="#326de6" stroke="#326de6" stroke-width="12" stroke-linejoin="round"/><circle cx="50" cy="52" r="23.5" fill="none" stroke="#fff" stroke-width="7"/><line x1="50.0" y1="46.0" x2="50.0" y2="30.0" stroke="#fff" stroke-width="3.2"/><line x1="50.0" y1="26.0" x2="50.0" y2="14.5" stroke="#fff" stroke-width="4.6" stroke-linecap="round"/><line x1="54.7" y1="48.3" x2="67.2" y2="38.3" stroke="#fff" stroke-width="3.2"/><line x1="70.3" y1="35.8" x2="79.3" y2="28.6" stroke="#fff" stroke-width="4.6" stroke-linecap="round"/><line x1="55.8" y1="53.3" x2="71.4" y2="56.9" stroke="#fff" stroke-width="3.2"/><line x1="75.3" y1="57.8" x2="86.6" y2="60.3" stroke="#fff" stroke-width="4.6" stroke-linecap="round"/><line x1="52.6" y1="57.4" x2="59.5" y2="71.8" stroke="#fff" stroke-width="3.2"/><line x1="61.3" y1="75.4" x2="66.3" y2="85.8" stroke="#fff" stroke-width="4.6" stroke-linecap="round"/><line x1="47.4" y1="57.4" x2="40.5" y2="71.8" stroke="#fff" stroke-width="3.2"/><line x1="38.7" y1="75.4" x2="33.7" y2="85.8" stroke="#fff" stroke-width="4.6" stroke-linecap="round"/><line x1="44.2" y1="53.3" x2="28.6" y2="56.9" stroke="#fff" stroke-width="3.2"/><line x1="24.7" y1="57.8" x2="13.4" y2="60.3" stroke="#fff" stroke-width="4.6" stroke-linecap="round"/><line x1="45.3" y1="48.3" x2="32.8" y2="38.3" stroke="#fff" stroke-width="3.2"/><line x1="29.7" y1="35.8" x2="20.7" y2="28.6" stroke="#fff" stroke-width="4.6" stroke-linecap="round"/><circle cx="50" cy="52" r="8" fill="#fff"/><circle cx="50" cy="52" r="3.2" fill="#4a55c8"/></svg>
<span style="top:601.5px;font-size:27px;line-height:35px;left:2364.794px;letter-spacing:0.12px;color:#46536a;">chart_name:</span>
<span style="top:601.5px;font-size:27px;line-height:35px;left:2518.692px;letter-spacing:0.44px;color:#0a2a6b;">dd-trace-demo</span>
<div style="left:2717.814px;top:598px;width:429.32px;height:42px;background:#f3f3f5;border-radius:7px;"></div>
<svg style="left:2725.314px;top:605px;" width="27.5" height="27.5" viewBox="-2 0 104 104"><polygon points="50.00,8.00 84.40,24.57 92.90,61.79 69.09,91.64 30.91,91.64 7.10,61.79 15.60,24.57" fill="#326de6" stroke="#326de6" stroke-width="12" stroke-linejoin="round"/><circle cx="50" cy="52" r="23.5" fill="none" stroke="#fff" stroke-width="7"/><line x1="50.0" y1="46.0" x2="50.0" y2="30.0" stroke="#fff" stroke-width="3.2"/><line x1="50.0" y1="26.0" x2="50.0" y2="14.5" stroke="#fff" stroke-width="4.6" stroke-linecap="round"/><line x1="54.7" y1="48.3" x2="67.2" y2="38.3" stroke="#fff" stroke-width="3.2"/><line x1="70.3" y1="35.8" x2="79.3" y2="28.6" stroke="#fff" stroke-width="4.6" stroke-linecap="round"/><line x1="55.8" y1="53.3" x2="71.4" y2="56.9" stroke="#fff" stroke-width="3.2"/><line x1="75.3" y1="57.8" x2="86.6" y2="60.3" stroke="#fff" stroke-width="4.6" stroke-linecap="round"/><line x1="52.6" y1="57.4" x2="59.5" y2="71.8" stroke="#fff" stroke-width="3.2"/><line x1="61.3" y1="75.4" x2="66.3" y2="85.8" stroke="#fff" stroke-width="4.6" stroke-linecap="round"/><line x1="47.4" y1="57.4" x2="40.5" y2="71.8" stroke="#fff" stroke-width="3.2"/><line x1="38.7" y1="75.4" x2="33.7" y2="85.8" stroke="#fff" stroke-width="4.6" stroke-linecap="round"/><line x1="44.2" y1="53.3" x2="28.6" y2="56.9" stroke="#fff" stroke-width="3.2"/><line x1="24.7" y1="57.8" x2="13.4" y2="60.3" stroke="#fff" stroke-width="4.6" stroke-linecap="round"/><line x1="45.3" y1="48.3" x2="32.8" y2="38.3" stroke="#fff" stroke-width="3.2"/><line x1="29.7" y1="35.8" x2="20.7" y2="28.6" stroke="#fff" stroke-width="4.6" stroke-linecap="round"/><circle cx="50" cy="52" r="8" fill="#fff"/><circle cx="50" cy="52" r="3.2" fill="#4a55c8"/></svg>
<span style="top:601.5px;font-size:27px;line-height:35px;left:2766.314px;letter-spacing:0.25px;color:#46536a;">app:</span>
<span style="top:601.5px;font-size:27px;line-height:35px;left:2822.348px;letter-spacing:0.73px;color:#0a2a6b;">product-recommendation</span>
<div style="left:3156.384px;top:598px;width:63px;height:42px;background:linear-gradient(90deg,#f3f3f5 75%,#f8f8fa 100%);border-radius:7px 0 0 7px;overflow:hidden;"><span style="left:48.5px;top:3.5px;font-size:27px;line-height:35px;color:#0a2a6b;letter-spacing:1px;">...</span></div>
<svg style="left:3164.384px;top:605px;" width="27.5" height="27.5" viewBox="-2 0 104 104"><polygon points="50.00,8.00 84.40,24.57 92.90,61.79 69.09,91.64 30.91,91.64 7.10,61.79 15.60,24.57" fill="#326de6" stroke="#326de6" stroke-width="12" stroke-linejoin="round"/><circle cx="50" cy="52" r="23.5" fill="none" stroke="#fff" stroke-width="7"/><line x1="50.0" y1="46.0" x2="50.0" y2="30.0" stroke="#fff" stroke-width="3.2"/><line x1="50.0" y1="26.0" x2="50.0" y2="14.5" stroke="#fff" stroke-width="4.6" stroke-linecap="round"/><line x1="54.7" y1="48.3" x2="67.2" y2="38.3" stroke="#fff" stroke-width="3.2"/><line x1="70.3" y1="35.8" x2="79.3" y2="28.6" stroke="#fff" stroke-width="4.6" stroke-linecap="round"/><line x1="55.8" y1="53.3" x2="71.4" y2="56.9" stroke="#fff" stroke-width="3.2"/><line x1="75.3" y1="57.8" x2="86.6" y2="60.3" stroke="#fff" stroke-width="4.6" stroke-linecap="round"/><line x1="52.6" y1="57.4" x2="59.5" y2="71.8" stroke="#fff" stroke-width="3.2"/><line x1="61.3" y1="75.4" x2="66.3" y2="85.8" stroke="#fff" stroke-width="4.6" stroke-linecap="round"/><line x1="47.4" y1="57.4" x2="40.5" y2="71.8" stroke="#fff" stroke-width="3.2"/><line x1="38.7" y1="75.4" x2="33.7" y2="85.8" stroke="#fff" stroke-width="4.6" stroke-linecap="round"/><line x1="44.2" y1="53.3" x2="28.6" y2="56.9" stroke="#fff" stroke-width="3.2"/><line x1="24.7" y1="57.8" x2="13.4" y2="60.3" stroke="#fff" stroke-width="4.6" stroke-linecap="round"/><line x1="45.3" y1="48.3" x2="32.8" y2="38.3" stroke="#fff" stroke-width="3.2"/><line x1="29.7" y1="35.8" x2="20.7" y2="28.6" stroke="#fff" stroke-width="4.6" stroke-linecap="round"/><circle cx="50" cy="52" r="8" fill="#fff"/><circle cx="50" cy="52" r="3.2" fill="#4a55c8"/></svg>
<div style="left:3226px;top:598px;width:47px;height:42px;border:2px solid #d8dade;border-radius:8px;background:#fff;"></div>
<span style="top:601.5px;font-size:27px;line-height:35px;left:3235px;letter-spacing:-0.7px;">+5</span>
<div style="left:3310px;top:604px;width:8px;height:8px;background:#8d9399;border-radius:4px;"></div>
<div style="left:3310px;top:616px;width:8px;height:8px;background:#8d9399;border-radius:4px;"></div>
<div style="left:3310px;top:628px;width:8px;height:8px;background:#8d9399;border-radius:4px;"></div>
<div style="left:666px;top:654px;width:2676px;height:2px;background:#dfe0e3;"></div>
<span style="top:672.3px;font-size:27px;line-height:35px;left:740px;letter-spacing:0.49px;">product-recommendation-545f8fd978-7bnlr</span>
<div style="left:1328px;top:670px;width:244.316px;height:36px;background:#fdeaec;border-radius:3px;"></div>
<span style="top:676.0px;font-size:22.5px;line-height:29px;left:1336px;letter-spacing:-0.89px;font-weight:700;color:#b6233a;">IMAGEPULLBACKOFF</span>
<span style="top:672.3px;font-size:27px;line-height:35px;right:1642.6px;letter-spacing:-0.07px;">0 / 1</span>
<span style="top:672.3px;font-size:27px;line-height:35px;right:1514.5px;letter-spacing:-0.51px;">0</span>
<span style="top:672.3px;font-size:27px;line-height:35px;left:1885px;letter-spacing:0.32px;">6 hours</span>
<div style="left:2134.5px;top:670px;width:172.544px;height:42px;background:#f3f3f5;border-radius:7px;"></div>
<svg style="left:2142.0px;top:677px;" width="27.5" height="27.5" viewBox="-2 0 104 104"><polygon points="50.00,8.00 84.40,24.57 92.90,61.79 69.09,91.64 30.91,91.64 7.10,61.79 15.60,24.57" fill="#326de6" stroke="#326de6" stroke-width="12" stroke-linejoin="round"/><circle cx="50" cy="52" r="23.5" fill="none" stroke="#fff" stroke-width="7"/><line x1="50.0" y1="46.0" x2="50.0" y2="30.0" stroke="#fff" stroke-width="3.2"/><line x1="50.0" y1="26.0" x2="50.0" y2="14.5" stroke="#fff" stroke-width="4.6" stroke-linecap="round"/><line x1="54.7" y1="48.3" x2="67.2" y2="38.3" stroke="#fff" stroke-width="3.2"/><line x1="70.3" y1="35.8" x2="79.3" y2="28.6" stroke="#fff" stroke-width="4.6" stroke-linecap="round"/><line x1="55.8" y1="53.3" x2="71.4" y2="56.9" stroke="#fff" stroke-width="3.2"/><line x1="75.3" y1="57.8" x2="86.6" y2="60.3" stroke="#fff" stroke-width="4.6" stroke-linecap="round"/><line x1="52.6" y1="57.4" x2="59.5" y2="71.8" stroke="#fff" stroke-width="3.2"/><line x1="61.3" y1="75.4" x2="66.3" y2="85.8" stroke="#fff" stroke-width="4.6" stroke-linecap="round"/><line x1="47.4" y1="57.4" x2="40.5" y2="71.8" stroke="#fff" stroke-width="3.2"/><line x1="38.7" y1="75.4" x2="33.7" y2="85.8" stroke="#fff" stroke-width="4.6" stroke-linecap="round"/><line x1="44.2" y1="53.3" x2="28.6" y2="56.9" stroke="#fff" stroke-width="3.2"/><line x1="24.7" y1="57.8" x2="13.4" y2="60.3" stroke="#fff" stroke-width="4.6" stroke-linecap="round"/><line x1="45.3" y1="48.3" x2="32.8" y2="38.3" stroke="#fff" stroke-width="3.2"/><line x1="29.7" y1="35.8" x2="20.7" y2="28.6" stroke="#fff" stroke-width="4.6" stroke-linecap="round"/><circle cx="50" cy="52" r="8" fill="#fff"/><circle cx="50" cy="52" r="3.2" fill="#4a55c8"/></svg>
<span style="top:673.5px;font-size:27px;line-height:35px;left:2183.0px;letter-spacing:0.48px;color:#46536a;">team:</span>
<span style="top:673.5px;font-size:27px;line-height:35px;left:2255.414px;letter-spacing:-0.17px;color:#0a2a6b;">ads</span>
<div style="left:2316.294px;top:670px;width:392.27px;height:42px;background:#f3f3f5;border-radius:7px;"></div>
<svg style="left:2323.794px;top:677px;" width="27.5" height="27.5" viewBox="-2 0 104 104"><polygon points="50.00,8.00 84.40,24.57 92.90,61.79 69.09,91.64 30.91,91.64 7.10,61.79 15.60,24.57" fill="#326de6" stroke="#326de6" stroke-width="12" stroke-linejoin="round"/><circle cx="50" cy="52" r="23.5" fill="none" stroke="#fff" stroke-width="7"/><line x1="50.0" y1="46.0" x2="50.0" y2="30.0" stroke="#fff" stroke-width="3.2"/><line x1="50.0" y1="26.0" x2="50.0" y2="14.5" stroke="#fff" stroke-width="4.6" stroke-linecap="round"/><line x1="54.7" y1="48.3" x2="67.2" y2="38.3" stroke="#fff" stroke-width="3.2"/><line x1="70.3" y1="35.8" x2="79.3" y2="28.6" stroke="#fff" stroke-width="4.6" stroke-linecap="round"/><line x1="55.8" y1="53.3" x2="71.4" y2="56.9" stroke="#fff" stroke-width="3.2"/><line x1="75.3" y1="57.8" x2="86.6" y2="60.3" stroke="#fff" stroke-width="4.6" stroke-linecap="round"/><line x1="52.6" y1="57.4" x2="59.5" y2="71.8" stroke="#fff" stroke-width="3.2"/><line x1="61.3" y1="75.4" x2="66.3" y2="85.8" stroke="#fff" stroke-width="4.6" stroke-linecap="round"/><line x1="47.4" y1="57.4" x2="40.5" y2="71.8" stroke="#fff" stroke-width="3.2"/><line x1="38.7" y1="75.4" x2="33.7" y2="85.8" stroke="#fff" stroke-width="4.6" stroke-linecap="round"/><line x1="44.2" y1="53.3" x2="28.6" y2="56.9" stroke="#fff" stroke-width="3.2"/><line x1="24.7" y1="57.8" x2="13.4" y2="60.3" stroke="#fff" stroke-width="4.6" stroke-linecap="round"/><line x1="45.3" y1="48.3" x2="32.8" y2="38.3" stroke="#fff" stroke-width="3.2"/><line x1="29.7" y1="35.8" x2="20.7" y2="28.6" stroke="#fff" stroke-width="4.6" stroke-linecap="round"/><circle cx="50" cy="52" r="8" fill="#fff"/><circle cx="50" cy="52" r="3.2" fill="#4a55c8"/></svg>
<span style="top:673.5px;font-size:27px;line-height:35px;left:2364.794px;letter-spacing:0.12px;color:#46536a;">chart_name:</span>
<span style="top:673.5px;font-size:27px;line-height:35px;left:2518.692px;letter-spacing:0.44px;color:#0a2a6b;">dd-trace-demo</span>
<div style="left:2717.814px;top:670px;width:429.32px;height:42px;background:#f3f3f5;border-radius:7px;"></div>
<svg style="left:2725.314px;top:677px;" width="27.5" height="27.5" viewBox="-2 0 104 104"><polygon points="50.00,8.00 84.40,24.57 92.90,61.79 69.09,91.64 30.91,91.64 7.10,61.79 15.60,24.57" fill="#326de6" stroke="#326de6" stroke-width="12" stroke-linejoin="round"/><circle cx="50" cy="52" r="23.5" fill="none" stroke="#fff" stroke-width="7"/><line x1="50.0" y1="46.0" x2="50.0" y2="30.0" stroke="#fff" stroke-width="3.2"/><line x1="50.0" y1="26.0" x2="50.0" y2="14.5" stroke="#fff" stroke-width="4.6" stroke-linecap="round"/><line x1="54.7" y1="48.3" x2="67.2" y2="38.3" stroke="#fff" stroke-width="3.2"/><line x1="70.3" y1="35.8" x2="79.3" y2="28.6" stroke="#fff" stroke-width="4.6" stroke-linecap="round"/><line x1="55.8" y1="53.3" x2="71.4" y2="56.9" stroke="#fff" stroke-width="3.2"/><line x1="75.3" y1="57.8" x2="86.6" y2="60.3" stroke="#fff" stroke-width="4.6" stroke-linecap="round"/><line x1="52.6" y1="57.4" x2="59.5" y2="71.8" stroke="#fff" stroke-width="3.2"/><line x1="61.3" y1="75.4" x2="66.3" y2="85.8" stroke="#fff" stroke-width="4.6" stroke-linecap="round"/><line x1="47.4" y1="57.4" x2="40.5" y2="71.8" stroke="#fff" stroke-width="3.2"/><line x1="38.7" y1="75.4" x2="33.7" y2="85.8" stroke="#fff" stroke-width="4.6" stroke-linecap="round"/><line x1="44.2" y1="53.3" x2="28.6" y2="56.9" stroke="#fff" stroke-width="3.2"/><line x1="24.7" y1="57.8" x2="13.4" y2="60.3" stroke="#fff" stroke-width="4.6" stroke-linecap="round"/><line x1="45.3" y1="48.3" x2="32.8" y2="38.3" stroke="#fff" stroke-width="3.2"/><line x1="29.7" y1="35.8" x2="20.7" y2="28.6" stroke="#fff" stroke-width="4.6" stroke-linecap="round"/><circle cx="50" cy="52" r="8" fill="#fff"/><circle cx="50" cy="52" r="3.2" fill="#4a55c8"/></svg>
<span style="top:673.5px;font-size:27px;line-height:35px;left:2766.314px;letter-spacing:0.25px;color:#46536a;">app:</span>
<span style="top:673.5px;font-size:27px;line-height:35px;left:2822.348px;letter-spacing:0.73px;color:#0a2a6b;">product-recommendation</span>
<div style="left:3156.384px;top:670px;width:63px;height:42px;background:linear-gradient(90deg,#f3f3f5 75%,#f8f8fa 100%);border-radius:7px 0 0 7px;overflow:hidden;"><span style="left:48.5px;top:3.5px;font-size:27px;line-height:35px;color:#0a2a6b;letter-spacing:1px;">...</span></div>
<svg style="left:3164.384px;top:677px;" width="27.5" height="27.5" viewBox="-2 0 104 104"><polygon points="50.00,8.00 84.40,24.57 92.90,61.79 69.09,91.64 30.91,91.64 7.10,61.79 15.60,24.57" fill="#326de6" stroke="#326de6" stroke-width="12" stroke-linejoin="round"/><circle cx="50" cy="52" r="23.5" fill="none" stroke="#fff" stroke-width="7"/><line x1="50.0" y1="46.0" x2="50.0" y2="30.0" stroke="#fff" stroke-width="3.2"/><line x1="50.0" y1="26.0" x2="50.0" y2="14.5" stroke="#fff" stroke-width="4.6" stroke-linecap="round"/><line x1="54.7" y1="48.3" x2="67.2" y2="38.3" stroke="#fff" stroke-width="3.2"/><line x1="70.3" y1="35.8" x2="79.3" y2="28.6" stroke="#fff" stroke-width="4.6" stroke-linecap="round"/><line x1="55.8" y1="53.3" x2="71.4" y2="56.9" stroke="#fff" stroke-width="3.2"/><line x1="75.3" y1="57.8" x2="86.6" y2="60.3" stroke="#fff" stroke-width="4.6" stroke-linecap="round"/><line x1="52.6" y1="57.4" x2="59.5" y2="71.8" stroke="#fff" stroke-width="3.2"/><line x1="61.3" y1="75.4" x2="66.3" y2="85.8" stroke="#fff" stroke-width="4.6" stroke-linecap="round"/><line x1="47.4" y1="57.4" x2="40.5" y2="71.8" stroke="#fff" stroke-width="3.2"/><line x1="38.7" y1="75.4" x2="33.7" y2="85.8" stroke="#fff" stroke-width="4.6" stroke-linecap="round"/><line x1="44.2" y1="53.3" x2="28.6" y2="56.9" stroke="#fff" stroke-width="3.2"/><line x1="24.7" y1="57.8" x2="13.4" y2="60.3" stroke="#fff" stroke-width="4.6" stroke-linecap="round"/><line x1="45.3" y1="48.3" x2="32.8" y2="38.3" stroke="#fff" stroke-width="3.2"/><line x1="29.7" y1="35.8" x2="20.7" y2="28.6" stroke="#fff" stroke-width="4.6" stroke-linecap="round"/><circle cx="50" cy="52" r="8" fill="#fff"/><circle cx="50" cy="52" r="3.2" fill="#4a55c8"/></svg>
<div style="left:3226px;top:670px;width:47px;height:42px;border:2px solid #d8dade;border-radius:8px;background:#fff;"></div>
<span style="top:673.5px;font-size:27px;line-height:35px;left:3235px;letter-spacing:-0.7px;">+5</span>
<div style="left:3310px;top:676px;width:8px;height:8px;background:#8d9399;border-radius:4px;"></div>
<div style="left:3310px;top:688px;width:8px;height:8px;background:#8d9399;border-radius:4px;"></div>
<div style="left:3310px;top:700px;width:8px;height:8px;background:#8d9399;border-radius:4px;"></div>
<div style="left:666px;top:726px;width:2676px;height:2px;background:#dfe0e3;"></div>
<span style="top:744.3px;font-size:27px;line-height:35px;left:740px;letter-spacing:0.54px;">product-recommendation-545f8fd978-thngb</span>
<div style="left:1328px;top:742px;width:244.316px;height:36px;background:#fdeaec;border-radius:3px;"></div>
<span style="top:748.0px;font-size:22.5px;line-height:29px;left:1336px;letter-spacing:-0.89px;font-weight:700;color:#b6233a;">IMAGEPULLBACKOFF</span>
<span style="top:744.3px;font-size:27px;line-height:35px;right:1642.6px;letter-spacing:-0.07px;">0 / 1</span>
<span style="top:744.3px;font-size:27px;line-height:35px;right:1514.5px;letter-spacing:-0.51px;">0</span>
<span style="top:744.3px;font-size:27px;line-height:35px;left:1885px;letter-spacing:0.32px;">6 hours</span>
<div style="left:2134.5px;top:742px;width:172.544px;height:42px;background:#f3f3f5;border-radius:7px;"></div>
<svg style="left:2142.0px;top:749px;" width="27.5" height="27.5" viewBox="-2 0 104 104"><polygon points="50.00,8.00 84.40,24.57 92.90,61.79 69.09,91.64 30.91,91.64 7.10,61.79 15.60,24.57" fill="#326de6" stroke="#326de6" stroke-width="12" stroke-linejoin="round"/><circle cx="50" cy="52" r="23.5" fill="none" stroke="#fff" stroke-width="7"/><line x1="50.0" y1="46.0" x2="50.0" y2="30.0" stroke="#fff" stroke-width="3.2"/><line x1="50.0" y1="26.0" x2="50.0" y2="14.5" stroke="#fff" stroke-width="4.6" stroke-linecap="round"/><line x1="54.7" y1="48.3" x2="67.2" y2="38.3" stroke="#fff" stroke-width="3.2"/><line x1="70.3" y1="35.8" x2="79.3" y2="28.6" stroke="#fff" stroke-width="4.6" stroke-linecap="round"/><line x1="55.8" y1="53.3" x2="71.4" y2="56.9" stroke="#fff" stroke-width="3.2"/><line x1="75.3" y1="57.8" x2="86.6" y2="60.3" stroke="#fff" stroke-width="4.6" stroke-linecap="round"/><line x1="52.6" y1="57.4" x2="59.5" y2="71.8" stroke="#fff" stroke-width="3.2"/><line x1="61.3" y1="75.4" x2="66.3" y2="85.8" stroke="#fff" stroke-width="4.6" stroke-linecap="round"/><line x1="47.4" y1="57.4" x2="40.5" y2="71.8" stroke="#fff" stroke-width="3.2"/><line x1="38.7" y1="75.4" x2="33.7" y2="85.8" stroke="#fff" stroke-width="4.6" stroke-linecap="round"/><line x1="44.2" y1="53.3" x2="28.6" y2="56.9" stroke="#fff" stroke-width="3.2"/><line x1="24.7" y1="57.8" x2="13.4" y2="60.3" stroke="#fff" stroke-width="4.6" stroke-linecap="round"/><line x1="45.3" y1="48.3" x2="32.8" y2="38.3" stroke="#fff" stroke-width="3.2"/><line x1="29.7" y1="35.8" x2="20.7" y2="28.6" stroke="#fff" stroke-width="4.6" stroke-linecap="round"/><circle cx="50" cy="52" r="8" fill="#fff"/><circle cx="50" cy="52" r="3.2" fill="#4a55c8"/></svg>
<span style="top:745.5px;font-size:27px;line-height:35px;left:2183.0px;letter-spacing:0.48px;color:#46536a;">team:</span>
<span style="top:745.5px;font-size:27px;line-height:35px;left:2255.414px;letter-spacing:-0.17px;color:#0a2a6b;">ads</span>
<div style="left:2316.294px;top:742px;width:392.27px;height:42px;background:#f3f3f5;border-radius:7px;"></div>
<svg style="left:2323.794px;top:749px;" width="27.5" height="27.5" viewBox="-2 0 104 104"><polygon points="50.00,8.00 84.40,24.57 92.90,61.79 69.09,91.64 30.91,91.64 7.10,61.79 15.60,24.57" fill="#326de6" stroke="#326de6" stroke-width="12" stroke-linejoin="round"/><circle cx="50" cy="52" r="23.5" fill="none" stroke="#fff" stroke-width="7"/><line x1="50.0" y1="46.0" x2="50.0" y2="30.0" stroke="#fff" stroke-width="3.2"/><line x1="50.0" y1="26.0" x2="50.0" y2="14.5" stroke="#fff" stroke-width="4.6" stroke-linecap="round"/><line x1="54.7" y1="48.3" x2="67.2" y2="38.3" stroke="#fff" stroke-width="3.2"/><line x1="70.3" y1="35.8" x2="79.3" y2="28.6" stroke="#fff" stroke-width="4.6" stroke-linecap="round"/><line x1="55.8" y1="53.3" x2="71.4" y2="56.9" stroke="#fff" stroke-width="3.2"/><line x1="75.3" y1="57.8" x2="86.6" y2="60.3" stroke="#fff" stroke-width="4.6" stroke-linecap="round"/><line x1="52.6" y1="57.4" x2="59.5" y2="71.8" stroke="#fff" stroke-width="3.2"/><line x1="61.3" y1="75.4" x2="66.3" y2="85.8" stroke="#fff" stroke-width="4.6" stroke-linecap="round"/><line x1="47.4" y1="57.4" x2="40.5" y2="71.8" stroke="#fff" stroke-width="3.2"/><line x1="38.7" y1="75.4" x2="33.7" y2="85.8" stroke="#fff" stroke-width="4.6" stroke-linecap="round"/><line x1="44.2" y1="53.3" x2="28.6" y2="56.9" stroke="#fff" stroke-width="3.2"/><line x1="24.7" y1="57.8" x2="13.4" y2="60.3" stroke="#fff" stroke-width="4.6" stroke-linecap="round"/><line x1="45.3" y1="48.3" x2="32.8" y2="38.3" stroke="#fff" stroke-width="3.2"/><line x1="29.7" y1="35.8" x2="20.7" y2="28.6" stroke="#fff" stroke-width="4.6" stroke-linecap="round"/><circle cx="50" cy="52" r="8" fill="#fff"/><circle cx="50" cy="52" r="3.2" fill="#4a55c8"/></svg>
<span style="top:745.5px;font-size:27px;line-height:35px;left:2364.794px;letter-spacing:0.12px;color:#46536a;">chart_name:</span>
<span style="top:745.5px;font-size:27px;line-height:35px;left:2518.692px;letter-spacing:0.44px;color:#0a2a6b;">dd-trace-demo</span>
<div style="left:2717.814px;top:742px;width:429.32px;height:42px;background:#f3f3f5;border-radius:7px;"></div>
<svg style="left:2725.314px;top:749px;" width="27.5" height="27.5" viewBox="-2 0 104 104"><polygon points="50.00,8.00 84.40,24.57 92.90,61.79 69.09,91.64 30.91,91.64 7.10,61.79 15.60,24.57" fill="#326de6" stroke="#326de6" stroke-width="12" stroke-linejoin="round"/><circle cx="50" cy="52" r="23.5" fill="none" stroke="#fff" stroke-width="7"/><line x1="50.0" y1="46.0" x2="50.0" y2="30.0" stroke="#fff" stroke-width="3.2"/><line x1="50.0" y1="26.0" x2="50.0" y2="14.5" stroke="#fff" stroke-width="4.6" stroke-linecap="round"/><line x1="54.7" y1="48.3" x2="67.2" y2="38.3" stroke="#fff" stroke-width="3.2"/><line x1="70.3" y1="35.8" x2="79.3" y2="28.6" stroke="#fff" stroke-width="4.6" stroke-linecap="round"/><line x1="55.8" y1="53.3" x2="71.4" y2="56.9" stroke="#fff" stroke-width="3.2"/><line x1="75.3" y1="57.8" x2="86.6" y2="60.3" stroke="#fff" stroke-width="4.6" stroke-linecap="round"/><line x1="52.6" y1="57.4" x2="59.5" y2="71.8" stroke="#fff" stroke-width="3.2"/><line x1="61.3" y1="75.4" x2="66.3" y2="85.8" stroke="#fff" stroke-width="4.6" stroke-linecap="round"/><line x1="47.4" y1="57.4" x2="40.5" y2="71.8" stroke="#fff" stroke-width="3.2"/><line x1="38.7" y1="75.4" x2="33.7" y2="85.8" stroke="#fff" stroke-width="4.6" stroke-linecap="round"/><line x1="44.2" y1="53.3" x2="28.6" y2="56.9" stroke="#fff" stroke-width="3.2"/><line x1="24.7" y1="57.8" x2="13.4" y2="60.3" stroke="#fff" stroke-width="4.6" stroke-linecap="round"/><line x1="45.3" y1="48.3" x2="32.8" y2="38.3" stroke="#fff" stroke-width="3.2"/><line x1="29.7" y1="35.8" x2="20.7" y2="28.6" stroke="#fff" stroke-width="4.6" stroke-linecap="round"/><circle cx="50" cy="52" r="8" fill="#fff"/><circle cx="50" cy="52" r="3.2" fill="#4a55c8"/></svg>
<span style="top:745.5px;font-size:27px;line-height:35px;left:2766.314px;letter-spacing:0.25px;color:#46536a;">app:</span>
<span style="top:745.5px;font-size:27px;line-height:35px;left:2822.348px;letter-spacing:0.73px;color:#0a2a6b;">product-recommendation</span>
<div style="left:3156.384px;top:742px;width:63px;height:42px;background:linear-gradient(90deg,#f3f3f5 75%,#f8f8fa 100%);border-radius:7px 0 0 7px;overflow:hidden;"><span style="left:48.5px;top:3.5px;font-size:27px;line-height:35px;color:#0a2a6b;letter-spacing:1px;">...</span></div>
<svg style="left:3164.384px;top:749px;" width="27.5" height="27.5" viewBox="-2 0 104 104"><polygon points="50.00,8.00 84.40,24.57 92.90,61.79 69.09,91.64 30.91,91.64 7.10,61.79 15.60,24.57" fill="#326de6" stroke="#326de6" stroke-width="12" stroke-linejoin="round"/><circle cx="50" cy="52" r="23.5" fill="none" stroke="#fff" stroke-width="7"/><line x1="50.0" y1="46.0" x2="50.0" y2="30.0" stroke="#fff" stroke-width="3.2"/><line x1="50.0" y1="26.0" x2="50.0" y2="14.5" stroke="#fff" stroke-width="4.6" stroke-linecap="round"/><line x1="54.7" y1="48.3" x2="67.2" y2="38.3" stroke="#fff" stroke-width="3.2"/><line x1="70.3" y1="35.8" x2="79.3" y2="28.6" stroke="#fff" stroke-width="4.6" stroke-linecap="round"/><line x1="55.8" y1="53.3" x2="71.4" y2="56.9" stroke="#fff" stroke-width="3.2"/><line x1="75.3" y1="57.8" x2="86.6" y2="60.3" stroke="#fff" stroke-width="4.6" stroke-linecap="round"/><line x1="52.6" y1="57.4" x2="59.5" y2="71.8" stroke="#fff" stroke-width="3.2"/><line x1="61.3" y1="75.4" x2="66.3" y2="85.8" stroke="#fff" stroke-width="4.6" stroke-linecap="round"/><line x1="47.4" y1="57.4" x2="40.5" y2="71.8" stroke="#fff" stroke-width="3.2"/><line x1="38.7" y1="75.4" x2="33.7" y2="85.8" stroke="#fff" stroke-width="4.6" stroke-linecap="round"/><line x1="44.2" y1="53.3" x2="28.6" y2="56.9" stroke="#fff" stroke-width="3.2"/><line x1="24.7" y1="57.8" x2="13.4" y2="60.3" stroke="#fff" stroke-width="4.6" stroke-linecap="round"/><line x1="45.3" y1="48.3" x2="32.8" y2="38.3" stroke="#fff" stroke-width="3.2"/><line x1="29.7" y1="35.8" x2="20.7" y2="28.6" stroke="#fff" stroke-width="4.6" stroke-linecap="round"/><circle cx="50" cy="52" r="8" fill="#fff"/><circle cx="50" cy="52" r="3.2" fill="#4a55c8"/></svg>
<div style="left:3226px;top:742px;width:47px;height:42px;border:2px solid #d8dade;border-radius:8px;background:#fff;"></div>
<span style="top:745.5px;font-size:27px;line-height:35px;left:3235px;letter-spacing:-0.7px;">+5</span>
<div style="left:3310px;top:748px;width:8px;height:8px;background:#8d9399;border-radius:4px;"></div>
<div style="left:3310px;top:760px;width:8px;height:8px;background:#8d9399;border-radius:4px;"></div>
<div style="left:3310px;top:772px;width:8px;height:8px;background:#8d9399;border-radius:4px;"></div>
<div style="left:666px;top:798px;width:2676px;height:2px;background:#dfe0e3;"></div>
<span style="top:816.3px;font-size:27px;line-height:35px;left:740px;letter-spacing:0.41px;">product-recommendation-545f8fd978-v5cmd</span>
<div style="left:1328px;top:814px;width:244.316px;height:36px;background:#fdeaec;border-radius:3px;"></div>
<span style="top:820.0px;font-size:22.5px;line-height:29px;left:1336px;letter-spacing:-0.89px;font-weight:700;color:#b6233a;">IMAGEPULLBACKOFF</span>
<span style="top:816.3px;font-size:27px;line-height:35px;right:1642.6px;letter-spacing:-0.07px;">0 / 1</span>
<span style="top:816.3px;font-size:27px;line-height:35px;right:1514.5px;letter-spacing:-0.51px;">0</span>
<span style="top:816.3px;font-size:27px;line-height:35px;left:1885px;letter-spacing:0.32px;">6 hours</span>
<div style="left:2134.5px;top:814px;width:172.544px;height:42px;background:#f3f3f5;border-radius:7px;"></div>
<svg style="left:2142.0px;top:821px;" width="27.5" height="27.5" viewBox="-2 0 104 104"><polygon points="50.00,8.00 84.40,24.57 92.90,61.79 69.09,91.64 30.91,91.64 7.10,61.79 15.60,24.57" fill="#326de6" stroke="#326de6" stroke-width="12" stroke-linejoin="round"/><circle cx="50" cy="52" r="23.5" fill="none" stroke="#fff" stroke-width="7"/><line x1="50.0" y1="46.0" x2="50.0" y2="30.0" stroke="#fff" stroke-width="3.2"/><line x1="50.0" y1="26.0" x2="50.0" y2="14.5" stroke="#fff" stroke-width="4.6" stroke-linecap="round"/><line x1="54.7" y1="48.3" x2="67.2" y2="38.3" stroke="#fff" stroke-width="3.2"/><line x1="70.3" y1="35.8" x2="79.3" y2="28.6" stroke="#fff" stroke-width="4.6" stroke-linecap="round"/><line x1="55.8" y1="53.3" x2="71.4" y2="56.9" stroke="#fff" stroke-width="3.2"/><line x1="75.3" y1="57.8" x2="86.6" y2="60.3" stroke="#fff" stroke-width="4.6" stroke-linecap="round"/><line x1="52.6" y1="57.4" x2="59.5" y2="71.8" stroke="#fff" stroke-width="3.2"/><line x1="61.3" y1="75.4" x2="66.3" y2="85.8" stroke="#fff" stroke-width="4.6" stroke-linecap="round"/><line x1="47.4" y1="57.4" x2="40.5" y2="71.8" stroke="#fff" stroke-width="3.2"/><line x1="38.7" y1="75.4" x2="33.7" y2="85.8" stroke="#fff" stroke-width="4.6" stroke-linecap="round"/><line x1="44.2" y1="53.3" x2="28.6" y2="56.9" stroke="#fff" stroke-width="3.2"/><line x1="24.7" y1="57.8" x2="13.4" y2="60.3" stroke="#fff" stroke-width="4.6" stroke-linecap="round"/><line x1="45.3" y1="48.3" x2="32.8" y2="38.3" stroke="#fff" stroke-width="3.2"/><line x1="29.7" y1="35.8" x2="20.7" y2="28.6" stroke="#fff" stroke-width="4.6" stroke-linecap="round"/><circle cx="50" cy="52" r="8" fill="#fff"/><circle cx="50" cy="52" r="3.2" fill="#4a55c8"/></svg>
<span style="top:817.5px;font-size:27px;line-height:35px;left:2183.0px;letter-spacing:0.48px;color:#46536a;">team:</span>
<span style="top:817.5px;font-size:27px;line-height:35px;left:2255.414px;letter-spacing:-0.17px;color:#0a2a6b;">ads</span>
<div style="left:2316.294px;top:814px;width:392.27px;height:42px;background:#f3f3f5;border-radius:7px;"></div>
<svg style="left:2323.794px;top:821px;" width="27.5" height="27.5" viewBox="-2 0 104 104"><polygon points="50.00,8.00 84.40,24.57 92.90,61.79 69.09,91.64 30.91,91.64 7.10,61.79 15.60,24.57" fill="#326de6" stroke="#326de6" stroke-width="12" stroke-linejoin="round"/><circle cx="50" cy="52" r="23.5" fill="none" stroke="#fff" stroke-width="7"/><line x1="50.0" y1="46.0" x2="50.0" y2="30.0" stroke="#fff" stroke-width="3.2"/><line x1="50.0" y1="26.0" x2="50.0" y2="14.5" stroke="#fff" stroke-width="4.6" stroke-linecap="round"/><line x1="54.7" y1="48.3" x2="67.2" y2="38.3" stroke="#fff" stroke-width="3.2"/><line x1="70.3" y1="35.8" x2="79.3" y2="28.6" stroke="#fff" stroke-width="4.6" stroke-linecap="round"/><line x1="55.8" y1="53.3" x2="71.4" y2="56.9" stroke="#fff" stroke-width="3.2"/><line x1="75.3" y1="57.8" x2="86.6" y2="60.3" stroke="#fff" stroke-width="4.6" stroke-linecap="round"/><line x1="52.6" y1="57.4" x2="59.5" y2="71.8" stroke="#fff" stroke-width="3.2"/><line x1="61.3" y1="75.4" x2="66.3" y2="85.8" stroke="#fff" stroke-width="4.6" stroke-linecap="round"/><line x1="47.4" y1="57.4" x2="40.5" y2="71.8" stroke="#fff" stroke-width="3.2"/><line x1="38.7" y1="75.4" x2="33.7" y2="85.8" stroke="#fff" stroke-width="4.6" stroke-linecap="round"/><line x1="44.2" y1="53.3" x2="28.6" y2="56.9" stroke="#fff" stroke-width="3.2"/><line x1="24.7" y1="57.8" x2="13.4" y2="60.3" stroke="#fff" stroke-width="4.6" stroke-linecap="round"/><line x1="45.3" y1="48.3" x2="32.8" y2="38.3" stroke="#fff" stroke-width="3.2"/><line x1="29.7" y1="35.8" x2="20.7" y2="28.6" stroke="#fff" stroke-width="4.6" stroke-linecap="round"/><circle cx="50" cy="52" r="8" fill="#fff"/><circle cx="50" cy="52" r="3.2" fill="#4a55c8"/></svg>
<span style="top:817.5px;font-size:27px;line-height:35px;left:2364.794px;letter-spacing:0.12px;color:#46536a;">chart_name:</span>
<span style="top:817.5px;font-size:27px;line-height:35px;left:2518.692px;letter-spacing:0.44px;color:#0a2a6b;">dd-trace-demo</span>
<div style="left:2717.814px;top:814px;width:429.32px;height:42px;background:#f3f3f5;border-radius:7px;"></div>
<svg style="left:2725.314px;top:821px;" width="27.5" height="27.5" viewBox="-2 0 104 104"><polygon points="50.00,8.00 84.40,24.57 92.90,61.79 69.09,91.64 30.91,91.64 7.10,61.79 15.60,24.57" fill="#326de6" stroke="#326de6" stroke-width="12" stroke-linejoin="round"/><circle cx="50" cy="52" r="23.5" fill="none" stroke="#fff" stroke-width="7"/><line x1="50.0" y1="46.0" x2="50.0" y2="30.0" stroke="#fff" stroke-width="3.2"/><line x1="50.0" y1="26.0" x2="50.0" y2="14.5" stroke="#fff" stroke-width="4.6" stroke-linecap="round"/><line x1="54.7" y1="48.3" x2="67.2" y2="38.3" stroke="#fff" stroke-width="3.2"/><line x1="70.3" y1="35.8" x2="79.3" y2="28.6" stroke="#fff" stroke-width="4.6" stroke-linecap="round"/><line x1="55.8" y1="53.3" x2="71.4" y2="56.9" stroke="#fff" stroke-width="3.2"/><line x1="75.3" y1="57.8" x2="86.6" y2="60.3" stroke="#fff" stroke-width="4.6" stroke-linecap="round"/><line x1="52.6" y1="57.4" x2="59.5" y2="71.8" stroke="#fff" stroke-width="3.2"/><line x1="61.3" y1="75.4" x2="66.3" y2="85.8" stroke="#fff" stroke-width="4.6" stroke-linecap="round"/><line x1="47.4" y1="57.4" x2="40.5" y2="71.8" stroke="#fff" stroke-width="3.2"/><line x1="38.7" y1="75.4" x2="33.7" y2="85.8" stroke="#fff" stroke-width="4.6" stroke-linecap="round"/><line x1="44.2" y1="53.3" x2="28.6" y2="56.9" stroke="#fff" stroke-width="3.2"/><line x1="24.7" y1="57.8" x2="13.4" y2="60.3" stroke="#fff" stroke-width="4.6" stroke-linecap="round"/><line x1="45.3" y1="48.3" x2="32.8" y2="38.3" stroke="#fff" stroke-width="3.2"/><line x1="29.7" y1="35.8" x2="20.7" y2="28.6" stroke="#fff" stroke-width="4.6" stroke-linecap="round"/><circle cx="50" cy="52" r="8" fill="#fff"/><circle cx="50" cy="52" r="3.2" fill="#4a55c8"/></svg>
<span style="top:817.5px;font-size:27px;line-height:35px;left:2766.314px;letter-spacing:0.25px;color:#46536a;">app:</span>
<span style="top:817.5px;font-size:27px;line-height:35px;left:2822.348px;letter-spacing:0.73px;color:#0a2a6b;">product-recommendation</span>
<div style="left:3156.384px;top:814px;width:63px;height:42px;background:linear-gradient(90deg,#f3f3f5 75%,#f8f8fa 100%);border-radius:7px 0 0 7px;overflow:hidden;"><span style="left:48.5px;top:3.5px;font-size:27px;line-height:35px;color:#0a2a6b;letter-spacing:1px;">...</span></div>
<svg style="left:3164.384px;top:821px;" width="27.5" height="27.5" viewBox="-2 0 104 104"><polygon points="50.00,8.00 84.40,24.57 92.90,61.79 69.09,91.64 30.91,91.64 7.10,61.79 15.60,24.57" fill="#326de6" stroke="#326de6" stroke-width="12" stroke-linejoin="round"/><circle cx="50" cy="52" r="23.5" fill="none" stroke="#fff" stroke-width="7"/><line x1="50.0" y1="46.0" x2="50.0" y2="30.0" stroke="#fff" stroke-width="3.2"/><line x1="50.0" y1="26.0" x2="50.0" y2="14.5" stroke="#fff" stroke-width="4.6" stroke-linecap="round"/><line x1="54.7" y1="48.3" x2="67.2" y2="38.3" stroke="#fff" stroke-width="3.2"/><line x1="70.3" y1="35.8" x2="79.3" y2="28.6" stroke="#fff" stroke-width="4.6" stroke-linecap="round"/><line x1="55.8" y1="53.3" x2="71.4" y2="56.9" stroke="#fff" stroke-width="3.2"/><line x1="75.3" y1="57.8" x2="86.6" y2="60.3" stroke="#fff" stroke-width="4.6" stroke-linecap="round"/><line x1="52.6" y1="57.4" x2="59.5" y2="71.8" stroke="#fff" stroke-width="3.2"/><line x1="61.3" y1="75.4" x2="66.3" y2="85.8" stroke="#fff" stroke-width="4.6" stroke-linecap="round"/><line x1="47.4" y1="57.4" x2="40.5" y2="71.8" stroke="#fff" stroke-width="3.2"/><line x1="38.7" y1="75.4" x2="33.7" y2="85.8" stroke="#fff" stroke-width="4.6" stroke-linecap="round"/><line x1="44.2" y1="53.3" x2="28.6" y2="56.9" stroke="#fff" stroke-width="3.2"/><line x1="24.7" y1="57.8" x2="13.4" y2="60.3" stroke="#fff" stroke-width="4.6" stroke-linecap="round"/><line x1="45.3" y1="48.3" x2="32.8" y2="38.3" stroke="#fff" stroke-width="3.2"/><line x1="29.7" y1="35.8" x2="20.7" y2="28.6" stroke="#fff" stroke-width="4.6" stroke-linecap="round"/><circle cx="50" cy="52" r="8" fill="#fff"/><circle cx="50" cy="52" r="3.2" fill="#4a55c8"/></svg>
<div style="left:3226px;top:814px;width:47px;height:42px;border:2px solid #d8dade;border-radius:8px;background:#fff;"></div>
<span style="top:817.5px;font-size:27px;line-height:35px;left:3235px;letter-spacing:-0.7px;">+5</span>
<div style="left:3310px;top:820px;width:8px;height:8px;background:#8d9399;border-radius:4px;"></div>
<div style="left:3310px;top:832px;width:8px;height:8px;background:#8d9399;border-radius:4px;"></div>
<div style="left:3310px;top:844px;width:8px;height:8px;background:#8d9399;border-radius:4px;"></div>
<div style="left:666px;top:870px;width:2676px;height:2px;background:#dfe0e3;"></div>
<span style="top:888.3px;font-size:27px;line-height:35px;left:740px;letter-spacing:0.31px;">product-recommendation-545f8fd978-vzv79</span>
<div style="left:1328px;top:886px;width:244.316px;height:36px;background:#fdeaec;border-radius:3px;"></div>
<span style="top:892.0px;font-size:22.5px;line-height:29px;left:1336px;letter-spacing:-0.89px;font-weight:700;color:#b6233a;">IMAGEPULLBACKOFF</span>
<span style="top:888.3px;font-size:27px;line-height:35px;right:1642.6px;letter-spacing:-0.07px;">0 / 1</span>
<span style="top:888.3px;font-size:27px;line-height:35px;right:1514.5px;letter-spacing:-0.51px;">0</span>
<span style="top:888.3px;font-size:27px;line-height:35px;left:1885px;letter-spacing:0.32px;">6 hours</span>
<div style="left:2134.5px;top:886px;width:172.544px;height:42px;background:#f3f3f5;border-radius:7px;"></div>
<svg style="left:2142.0px;top:893px;" width="27.5" height="27.5" viewBox="-2 0 104 104"><polygon points="50.00,8.00 84.40,24.57 92.90,61.79 69.09,91.64 30.91,91.64 7.10,61.79 15.60,24.57" fill="#326de6" stroke="#326de6" stroke-width="12" stroke-linejoin="round"/><circle cx="50" cy="52" r="23.5" fill="none" stroke="#fff" stroke-width="7"/><line x1="50.0" y1="46.0" x2="50.0" y2="30.0" stroke="#fff" stroke-width="3.2"/><line x1="50.0" y1="26.0" x2="50.0" y2="14.5" stroke="#fff" stroke-width="4.6" stroke-linecap="round"/><line x1="54.7" y1="48.3" x2="67.2" y2="38.3" stroke="#fff" stroke-width="3.2"/><line x1="70.3" y1="35.8" x2="79.3" y2="28.6" stroke="#fff" stroke-width="4.6" stroke-linecap="round"/><line x1="55.8" y1="53.3" x2="71.4" y2="56.9" stroke="#fff" stroke-width="3.2"/><line x1="75.3" y1="57.8" x2="86.6" y2="60.3" stroke="#fff" stroke-width="4.6" stroke-linecap="round"/><line x1="52.6" y1="57.4" x2="59.5" y2="71.8" stroke="#fff" stroke-width="3.2"/><line x1="61.3" y1="75.4" x2="66.3" y2="85.8" stroke="#fff" stroke-width="4.6" stroke-linecap="round"/><line x1="47.4" y1="57.4" x2="40.5" y2="71.8" stroke="#fff" stroke-width="3.2"/><line x1="38.7" y1="75.4" x2="33.7" y2="85.8" stroke="#fff" stroke-width="4.6" stroke-linecap="round"/><line x1="44.2" y1="53.3" x2="28.6" y2="56.9" stroke="#fff" stroke-width="3.2"/><line x1="24.7" y1="57.8" x2="13.4" y2="60.3" stroke="#fff" stroke-width="4.6" stroke-linecap="round"/><line x1="45.3" y1="48.3" x2="32.8" y2="38.3" stroke="#fff" stroke-width="3.2"/><line x1="29.7" y1="35.8" x2="20.7" y2="28.6" stroke="#fff" stroke-width="4.6" stroke-linecap="round"/><circle cx="50" cy="52" r="8" fill="#fff"/><circle cx="50" cy="52" r="3.2" fill="#4a55c8"/></svg>
<span style="top:889.5px;font-size:27px;line-height:35px;left:2183.0px;letter-spacing:0.48px;color:#46536a;">team:</span>
<span style="top:889.5px;font-size:27px;line-height:35px;left:2255.414px;letter-spacing:-0.17px;color:#0a2a6b;">ads</span>
<div style="left:2316.294px;top:886px;width:392.27px;height:42px;background:#f3f3f5;border-radius:7px;"></div>
<svg style="left:2323.794px;top:893px;" width="27.5" height="27.5" viewBox="-2 0 104 104"><polygon points="50.00,8.00 84.40,24.57 92.90,61.79 69.09,91.64 30.91,91.64 7.10,61.79 15.60,24.57" fill="#326de6" stroke="#326de6" stroke-width="12" stroke-linejoin="round"/><circle cx="50" cy="52" r="23.5" fill="none" stroke="#fff" stroke-width="7"/><line x1="50.0" y1="46.0" x2="50.0" y2="30.0" stroke="#fff" stroke-width="3.2"/><line x1="50.0" y1="26.0" x2="50.0" y2="14.5" stroke="#fff" stroke-width="4.6" stroke-linecap="round"/><line x1="54.7" y1="48.3" x2="67.2" y2="38.3" stroke="#fff" stroke-width="3.2"/><line x1="70.3" y1="35.8" x2="79.3" y2="28.6" stroke="#fff" stroke-width="4.6" stroke-linecap="round"/><line x1="55.8" y1="53.3" x2="71.4" y2="56.9" stroke="#fff" stroke-width="3.2"/><line x1="75.3" y1="57.8" x2="86.6" y2="60.3" stroke="#fff" stroke-width="4.6" stroke-linecap="round"/><line x1="52.6" y1="57.4" x2="59.5" y2="71.8" stroke="#fff" stroke-width="3.2"/><line x1="61.3" y1="75.4" x2="66.3" y2="85.8" stroke="#fff" stroke-width="4.6" stroke-linecap="round"/><line x1="47.4" y1="57.4" x2="40.5" y2="71.8" stroke="#fff" stroke-width="3.2"/><line x1="38.7" y1="75.4" x2="33.7" y2="85.8" stroke="#fff" stroke-width="4.6" stroke-linecap="round"/><line x1="44.2" y1="53.3" x2="28.6" y2="56.9" stroke="#fff" stroke-width="3.2"/><line x1="24.7" y1="57.8" x2="13.4" y2="60.3" stroke="#fff" stroke-width="4.6" stroke-linecap="round"/><line x1="45.3" y1="48.3" x2="32.8" y2="38.3" stroke="#fff" stroke-width="3.2"/><line x1="29.7" y1="35.8" x2="20.7" y2="28.6" stroke="#fff" stroke-width="4.6" stroke-linecap="round"/><circle cx="50" cy="52" r="8" fill="#fff"/><circle cx="50" cy="52" r="3.2" fill="#4a55c8"/></svg>
<span style="top:889.5px;font-size:27px;line-height:35px;left:2364.794px;letter-spacing:0.12px;color:#46536a;">chart_name:</span>
<span style="top:889.5px;font-size:27px;line-height:35px;left:2518.692px;letter-spacing:0.44px;color:#0a2a6b;">dd-trace-demo</span>
<div style="left:2717.814px;top:886px;width:429.32px;height:42px;background:#f3f3f5;border-radius:7px;"></div>
<svg style="left:2725.314px;top:893px;" width="27.5" height="27.5" viewBox="-2 0 104 104"><polygon points="50.00,8.00 84.40,24.57 92.90,61.79 69.09,91.64 30.91,91.64 7.10,61.79 15.60,24.57" fill="#326de6" stroke="#326de6" stroke-width="12" stroke-linejoin="round"/><circle cx="50" cy="52" r="23.5" fill="none" stroke="#fff" stroke-width="7"/><line x1="50.0" y1="46.0" x2="50.0" y2="30.0" stroke="#fff" stroke-width="3.2"/><line x1="50.0" y1="26.0" x2="50.0" y2="14.5" stroke="#fff" stroke-width="4.6" stroke-linecap="round"/><line x1="54.7" y1="48.3" x2="67.2" y2="38.3" stroke="#fff" stroke-width="3.2"/><line x1="70.3" y1="35.8" x2="79.3" y2="28.6" stroke="#fff" stroke-width="4.6" stroke-linecap="round"/><line x1="55.8" y1="53.3" x2="71.4" y2="56.9" stroke="#fff" stroke-width="3.2"/><line x1="75.3" y1="57.8" x2="86.6" y2="60.3" stroke="#fff" stroke-width="4.6" stroke-linecap="round"/><line x1="52.6" y1="57.4" x2="59.5" y2="71.8" stroke="#fff" stroke-width="3.2"/><line x1="61.3" y1="75.4" x2="66.3" y2="85.8" stroke="#fff" stroke-width="4.6" stroke-linecap="round"/><line x1="47.4" y1="57.4" x2="40.5" y2="71.8" stroke="#fff" stroke-width="3.2"/><line x1="38.7" y1="75.4" x2="33.7" y2="85.8" stroke="#fff" stroke-width="4.6" stroke-linecap="round"/><line x1="44.2" y1="53.3" x2="28.6" y2="56.9" stroke="#fff" stroke-width="3.2"/><line x1="24.7" y1="57.8" x2="13.4" y2="60.3" stroke="#fff" stroke-width="4.6" stroke-linecap="round"/><line x1="45.3" y1="48.3" x2="32.8" y2="38.3" stroke="#fff" stroke-width="3.2"/><line x1="29.7" y1="35.8" x2="20.7" y2="28.6" stroke="#fff" stroke-width="4.6" stroke-linecap="round"/><circle cx="50" cy="52" r="8" fill="#fff"/><circle cx="50" cy="52" r="3.2" fill="#4a55c8"/></svg>
<span style="top:889.5px;font-size:27px;line-height:35px;left:2766.314px;letter-spacing:0.25px;color:#46536a;">app:</span>
<span style="top:889.5px;font-size:27px;line-height:35px;left:2822.348px;letter-spacing:0.73px;color:#0a2a6b;">product-recommendation</span>
<div style="left:3156.384px;top:886px;width:63px;height:42px;background:linear-gradient(90deg,#f3f3f5 75%,#f8f8fa 100%);border-radius:7px 0 0 7px;overflow:hidden;"><span style="left:48.5px;top:3.5px;font-size:27px;line-height:35px;color:#0a2a6b;letter-spacing:1px;">...</span></div>
<svg style="left:3164.384px;top:893px;" width="27.5" height="27.5" viewBox="-2 0 104 104"><polygon points="50.00,8.00 84.40,24.57 92.90,61.79 69.09,91.64 30.91,91.64 7.10,61.79 15.60,24.57" fill="#326de6" stroke="#326de6" stroke-width="12" stroke-linejoin="round"/><circle cx="50" cy="52" r="23.5" fill="none" stroke="#fff" stroke-width="7"/><line x1="50.0" y1="46.0" x2="50.0" y2="30.0" stroke="#fff" stroke-width="3.2"/><line x1="50.0" y1="26.0" x2="50.0" y2="14.5" stroke="#fff" stroke-width="4.6" stroke-linecap="round"/><line x1="54.7" y1="48.3" x2="67.2" y2="38.3" stroke="#fff" stroke-width="3.2"/><line x1="70.3" y1="35.8" x2="79.3" y2="28.6" stroke="#fff" stroke-width="4.6" stroke-linecap="round"/><line x1="55.8" y1="53.3" x2="71.4" y2="56.9" stroke="#fff" stroke-width="3.2"/><line x1="75.3" y1="57.8" x2="86.6" y2="60.3" stroke="#fff" stroke-width="4.6" stroke-linecap="round"/><line x1="52.6" y1="57.4" x2="59.5" y2="71.8" stroke="#fff" stroke-width="3.2"/><line x1="61.3" y1="75.4" x2="66.3" y2="85.8" stroke="#fff" stroke-width="4.6" stroke-linecap="round"/><line x1="47.4" y1="57.4" x2="40.5" y2="71.8" stroke="#fff" stroke-width="3.2"/><line x1="38.7" y1="75.4" x2="33.7" y2="85.8" stroke="#fff" stroke-width="4.6" stroke-linecap="round"/><line x1="44.2" y1="53.3" x2="28.6" y2="56.9" stroke="#fff" stroke-width="3.2"/><line x1="24.7" y1="57.8" x2="13.4" y2="60.3" stroke="#fff" stroke-width="4.6" stroke-linecap="round"/><line x1="45.3" y1="48.3" x2="32.8" y2="38.3" stroke="#fff" stroke-width="3.2"/><line x1="29.7" y1="35.8" x2="20.7" y2="28.6" stroke="#fff" stroke-width="4.6" stroke-linecap="round"/><circle cx="50" cy="52" r="8" fill="#fff"/><circle cx="50" cy="52" r="3.2" fill="#4a55c8"/></svg>
<div style="left:3226px;top:886px;width:47px;height:42px;border:2px solid #d8dade;border-radius:8px;background:#fff;"></div>
<span style="top:889.5px;font-size:27px;line-height:35px;left:3235px;letter-spacing:-0.7px;">+5</span>
<div style="left:3310px;top:892px;width:8px;height:8px;background:#8d9399;border-radius:4px;"></div>
<div style="left:3310px;top:904px;width:8px;height:8px;background:#8d9399;border-radius:4px;"></div>
<div style="left:3310px;top:916px;width:8px;height:8px;background:#8d9399;border-radius:4px;"></div>
<div style="left:666px;top:942px;width:2676px;height:2px;background:#dfe0e3;"></div>
<span style="top:960.3px;font-size:27px;line-height:35px;left:740px;letter-spacing:0.37px;">product-recommendation-545f8fd978-wvcx8</span>
<div style="left:1328px;top:958px;width:244.316px;height:36px;background:#fdeaec;border-radius:3px;"></div>
<span style="top:964.0px;font-size:22.5px;line-height:29px;left:1336px;letter-spacing:-0.89px;font-weight:700;color:#b6233a;">IMAGEPULLBACKOFF</span>
<span style="top:960.3px;font-size:27px;line-height:35px;right:1642.6px;letter-spacing:-0.07px;">0 / 1</span>
<span style="top:960.3px;font-size:27px;line-height:35px;right:1514.5px;letter-spacing:-0.51px;">0</span>
<span style="top:960.3px;font-size:27px;line-height:35px;left:1885px;letter-spacing:0.32px;">6 hours</span>
<div style="left:2134.5px;top:958px;width:172.544px;height:42px;background:#f3f3f5;border-radius:7px;"></div>
<svg style="left:2142.0px;top:965px;" width="27.5" height="27.5" viewBox="-2 0 104 104"><polygon points="50.00,8.00 84.40,24.57 92.90,61.79 69.09,91.64 30.91,91.64 7.10,61.79 15.60,24.57" fill="#326de6" stroke="#326de6" stroke-width="12" stroke-linejoin="round"/><circle cx="50" cy="52" r="23.5" fill="none" stroke="#fff" stroke-width="7"/><line x1="50.0" y1="46.0" x2="50.0" y2="30.0" stroke="#fff" stroke-width="3.2"/><line x1="50.0" y1="26.0" x2="50.0" y2="14.5" stroke="#fff" stroke-width="4.6" stroke-linecap="round"/><line x1="54.7" y1="48.3" x2="67.2" y2="38.3" stroke="#fff" stroke-width="3.2"/><line x1="70.3" y1="35.8" x2="79.3" y2="28.6" stroke="#fff" stroke-width="4.6" stroke-linecap="round"/><line x1="55.8" y1="53.3" x2="71.4" y2="56.9" stroke="#fff" stroke-width="3.2"/><line x1="75.3" y1="57.8" x2="86.6" y2="60.3" stroke="#fff" stroke-width="4.6" stroke-linecap="round"/><line x1="52.6" y1="57.4" x2="59.5" y2="71.8" stroke="#fff" stroke-width="3.2"/><line x1="61.3" y1="75.4" x2="66.3" y2="85.8" stroke="#fff" stroke-width="4.6" stroke-linecap="round"/><line x1="47.4" y1="57.4" x2="40.5" y2="71.8" stroke="#fff" stroke-width="3.2"/><line x1="38.7" y1="75.4" x2="33.7" y2="85.8" stroke="#fff" stroke-width="4.6" stroke-linecap="round"/><line x1="44.2" y1="53.3" x2="28.6" y2="56.9" stroke="#fff" stroke-width="3.2"/><line x1="24.7" y1="57.8" x2="13.4" y2="60.3" stroke="#fff" stroke-width="4.6" stroke-linecap="round"/><line x1="45.3" y1="48.3" x2="32.8" y2="38.3" stroke="#fff" stroke-width="3.2"/><line x1="29.7" y1="35.8" x2="20.7" y2="28.6" stroke="#fff" stroke-width="4.6" stroke-linecap="round"/><circle cx="50" cy="52" r="8" fill="#fff"/><circle cx="50" cy="52" r="3.2" fill="#4a55c8"/></svg>
<span style="top:961.5px;font-size:27px;line-height:35px;left:2183.0px;letter-spacing:0.48px;color:#46536a;">team:</span>
<span style="top:961.5px;font-size:27px;line-height:35px;left:2255.414px;letter-spacing:-0.17px;color:#0a2a6b;">ads</span>
<div style="left:2316.294px;top:958px;width:392.27px;height:42px;background:#f3f3f5;border-radius:7px;"></div>
<svg style="left:2323.794px;top:965px;" width="27.5" height="27.5" viewBox="-2 0 104 104"><polygon points="50.00,8.00 84.40,24.57 92.90,61.79 69.09,91.64 30.91,91.64 7.10,61.79 15.60,24.57" fill="#326de6" stroke="#326de6" stroke-width="12" stroke-linejoin="round"/><circle cx="50" cy="52" r="23.5" fill="none" stroke="#fff" stroke-width="7"/><line x1="50.0" y1="46.0" x2="50.0" y2="30.0" stroke="#fff" stroke-width="3.2"/><line x1="50.0" y1="26.0" x2="50.0" y2="14.5" stroke="#fff" stroke-width="4.6" stroke-linecap="round"/><line x1="54.7" y1="48.3" x2="67.2" y2="38.3" stroke="#fff" stroke-width="3.2"/><line x1="70.3" y1="35.8" x2="79.3" y2="28.6" stroke="#fff" stroke-width="4.6" stroke-linecap="round"/><line x1="55.8" y1="53.3" x2="71.4" y2="56.9" stroke="#fff" stroke-width="3.2"/><line x1="75.3" y1="57.8" x2="86.6" y2="60.3" stroke="#fff" stroke-width="4.6" stroke-linecap="round"/><line x1="52.6" y1="57.4" x2="59.5" y2="71.8" stroke="#fff" stroke-width="3.2"/><line x1="61.3" y1="75.4" x2="66.3" y2="85.8" stroke="#fff" stroke-width="4.6" stroke-linecap="round"/><line x1="47.4" y1="57.4" x2="40.5" y2="71.8" stroke="#fff" stroke-width="3.2"/><line x1="38.7" y1="75.4" x2="33.7" y2="85.8" stroke="#fff" stroke-width="4.6" stroke-linecap="round"/><line x1="44.2" y1="53.3" x2="28.6" y2="56.9" stroke="#fff" stroke-width="3.2"/><line x1="24.7" y1="57.8" x2="13.4" y2="60.3" stroke="#fff" stroke-width="4.6" stroke-linecap="round"/><line x1="45.3" y1="48.3" x2="32.8" y2="38.3" stroke="#fff" stroke-width="3.2"/><line x1="29.7" y1="35.8" x2="20.7" y2="28.6" stroke="#fff" stroke-width="4.6" stroke-linecap="round"/><circle cx="50" cy="52" r="8" fill="#fff"/><circle cx="50" cy="52" r="3.2" fill="#4a55c8"/></svg>
<span style="top:961.5px;font-size:27px;line-height:35px;left:2364.794px;letter-spacing:0.12px;color:#46536a;">chart_name:</span>
<span style="top:961.5px;font-size:27px;line-height:35px;left:2518.692px;letter-spacing:0.44px;color:#0a2a6b;">dd-trace-demo</span>
<div style="left:2717.814px;top:958px;width:429.32px;height:42px;background:#f3f3f5;border-radius:7px;"></div>
<svg style="left:2725.314px;top:965px;" width="27.5" height="27.5" viewBox="-2 0 104 104"><polygon points="50.00,8.00 84.40,24.57 92.90,61.79 69.09,91.64 30.91,91.64 7.10,61.79 15.60,24.57" fill="#326de6" stroke="#326de6" stroke-width="12" stroke-linejoin="round"/><circle cx="50" cy="52" r="23.5" fill="none" stroke="#fff" stroke-width="7"/><line x1="50.0" y1="46.0" x2="50.0" y2="30.0" stroke="#fff" stroke-width="3.2"/><line x1="50.0" y1="26.0" x2="50.0" y2="14.5" stroke="#fff" stroke-width="4.6" stroke-linecap="round"/><line x1="54.7" y1="48.3" x2="67.2" y2="38.3" stroke="#fff" stroke-width="3.2"/><line x1="70.3" y1="35.8" x2="79.3" y2="28.6" stroke="#fff" stroke-width="4.6" stroke-linecap="round"/><line x1="55.8" y1="53.3" x2="71.4" y2="56.9" stroke="#fff" stroke-width="3.2"/><line x1="75.3" y1="57.8" x2="86.6" y2="60.3" stroke="#fff" stroke-width="4.6" stroke-linecap="round"/><line x1="52.6" y1="57.4" x2="59.5" y2="71.8" stroke="#fff" stroke-width="3.2"/><line x1="61.3" y1="75.4" x2="66.3" y2="85.8" stroke="#fff" stroke-width="4.6" stroke-linecap="round"/><line x1="47.4" y1="57.4" x2="40.5" y2="71.8" stroke="#fff" stroke-width="3.2"/><line x1="38.7" y1="75.4" x2="33.7" y2="85.8" stroke="#fff" stroke-width="4.6" stroke-linecap="round"/><line x1="44.2" y1="53.3" x2="28.6" y2="56.9" stroke="#fff" stroke-width="3.2"/><line x1="24.7" y1="57.8" x2="13.4" y2="60.3" stroke="#fff" stroke-width="4.6" stroke-linecap="round"/><line x1="45.3" y1="48.3" x2="32.8" y2="38.3" stroke="#fff" stroke-width="3.2"/><line x1="29.7" y1="35.8" x2="20.7" y2="28.6" stroke="#fff" stroke-width="4.6" stroke-linecap="round"/><circle cx="50" cy="52" r="8" fill="#fff"/><circle cx="50" cy="52" r="3.2" fill="#4a55c8"/></svg>
<span style="top:961.5px;font-size:27px;line-height:35px;left:2766.314px;letter-spacing:0.25px;color:#46536a;">app:</span>
<span style="top:961.5px;font-size:27px;line-height:35px;left:2822.348px;letter-spacing:0.73px;color:#0a2a6b;">product-recommendation</span>
<div style="left:3156.384px;top:958px;width:63px;height:42px;background:linear-gradient(90deg,#f3f3f5 75%,#f8f8fa 100%);border-radius:7px 0 0 7px;overflow:hidden;"><span style="left:48.5px;top:3.5px;font-size:27px;line-height:35px;color:#0a2a6b;letter-spacing:1px;">...</span></div>
<svg style="left:3164.384px;top:965px;" width="27.5" height="27.5" viewBox="-2 0 104 104"><polygon points="50.00,8.00 84.40,24.57 92.90,61.79 69.09,91.64 30.91,91.64 7.10,61.79 15.60,24.57" fill="#326de6" stroke="#326de6" stroke-width="12" stroke-linejoin="round"/><circle cx="50" cy="52" r="23.5" fill="none" stroke="#fff" stroke-width="7"/><line x1="50.0" y1="46.0" x2="50.0" y2="30.0" stroke="#fff" stroke-width="3.2"/><line x1="50.0" y1="26.0" x2="50.0" y2="14.5" stroke="#fff" stroke-width="4.6" stroke-linecap="round"/><line x1="54.7" y1="48.3" x2="67.2" y2="38.3" stroke="#fff" stroke-width="3.2"/><line x1="70.3" y1="35.8" x2="79.3" y2="28.6" stroke="#fff" stroke-width="4.6" stroke-linecap="round"/><line x1="55.8" y1="53.3" x2="71.4" y2="56.9" stroke="#fff" stroke-width="3.2"/><line x1="75.3" y1="57.8" x2="86.6" y2="60.3" stroke="#fff" stroke-width="4.6" stroke-linecap="round"/><line x1="52.6" y1="57.4" x2="59.5" y2="71.8" stroke="#fff" stroke-width="3.2"/><line x1="61.3" y1="75.4" x2="66.3" y2="85.8" stroke="#fff" stroke-width="4.6" stroke-linecap="round"/><line x1="47.4" y1="57.4" x2="40.5" y2="71.8" stroke="#fff" stroke-width="3.2"/><line x1="38.7" y1="75.4" x2="33.7" y2="85.8" stroke="#fff" stroke-width="4.6" stroke-linecap="round"/><line x1="44.2" y1="53.3" x2="28.6" y2="56.9" stroke="#fff" stroke-width="3.2"/><line x1="24.7" y1="57.8" x2="13.4" y2="60.3" stroke="#fff" stroke-width="4.6" stroke-linecap="round"/><line x1="45.3" y1="48.3" x2="32.8" y2="38.3" stroke="#fff" stroke-width="3.2"/><line x1="29.7" y1="35.8" x2="20.7" y2="28.6" stroke="#fff" stroke-width="4.6" stroke-linecap="round"/><circle cx="50" cy="52" r="8" fill="#fff"/><circle cx="50" cy="52" r="3.2" fill="#4a55c8"/></svg>
<div style="left:3226px;top:958px;width:47px;height:42px;border:2px solid #d8dade;border-radius:8px;background:#fff;"></div>
<span style="top:961.5px;font-size:27px;line-height:35px;left:3235px;letter-spacing:-0.7px;">+5</span>
<div style="left:3310px;top:964px;width:8px;height:8px;background:#8d9399;border-radius:4px;"></div>
<div style="left:3310px;top:976px;width:8px;height:8px;background:#8d9399;border-radius:4px;"></div>
<div style="left:3310px;top:988px;width:8px;height:8px;background:#8d9399;border-radius:4px;"></div>
<div style="left:666px;top:1014px;width:2676px;height:2px;background:#dfe0e3;"></div>
<span style="top:1032.3px;font-size:27px;line-height:35px;left:740px;letter-spacing:0.42px;">product-recommendation-599ddb977c-5g8rh</span>
<div style="left:1328px;top:1030px;width:118.586px;height:36px;background:#fef5e7;border-radius:3px;"></div>
<span style="top:1036.0px;font-size:22.5px;line-height:29px;left:1336px;letter-spacing:0.01px;font-weight:700;color:#ad7a24;">PENDING</span>
<span style="top:1032.3px;font-size:27px;line-height:35px;right:1642.6px;letter-spacing:-0.07px;">0 / 0</span>
<span style="top:1032.3px;font-size:27px;line-height:35px;right:1514.5px;letter-spacing:-0.51px;">0</span>
<span style="top:1032.3px;font-size:27px;line-height:35px;left:1885px;letter-spacing:0.32px;">6 hours</span>
<div style="left:2134.5px;top:1030px;width:172.544px;height:42px;background:#f3f3f5;border-radius:7px;"></div>
<svg style="left:2142.0px;top:1037px;" width="27.5" height="27.5" viewBox="-2 0 104 104"><polygon points="50.00,8.00 84.40,24.57 92.90,61.79 69.09,91.64 30.91,91.64 7.10,61.79 15.60,24.57" fill="#326de6" stroke="#326de6" stroke-width="12" stroke-linejoin="round"/><circle cx="50" cy="52" r="23.5" fill="none" stroke="#fff" stroke-width="7"/><line x1="50.0" y1="46.0" x2="50.0" y2="30.0" stroke="#fff" stroke-width="3.2"/><line x1="50.0" y1="26.0" x2="50.0" y2="14.5" stroke="#fff" stroke-width="4.6" stroke-linecap="round"/><line x1="54.7" y1="48.3" x2="67.2" y2="38.3" stroke="#fff" stroke-width="3.2"/><line x1="70.3" y1="35.8" x2="79.3" y2="28.6" stroke="#fff" stroke-width="4.6" stroke-linecap="round"/><line x1="55.8" y1="53.3" x2="71.4" y2="56.9" stroke="#fff" stroke-width="3.2"/><line x1="75.3" y1="57.8" x2="86.6" y2="60.3" stroke="#fff" stroke-width="4.6" stroke-linecap="round"/><line x1="52.6" y1="57.4" x2="59.5" y2="71.8" stroke="#fff" stroke-width="3.2"/><line x1="61.3" y1="75.4" x2="66.3" y2="85.8" stroke="#fff" stroke-width="4.6" stroke-linecap="round"/><line x1="47.4" y1="57.4" x2="40.5" y2="71.8" stroke="#fff" stroke-width="3.2"/><line x1="38.7" y1="75.4" x2="33.7" y2="85.8" stroke="#fff" stroke-width="4.6" stroke-linecap="round"/><line x1="44.2" y1="53.3" x2="28.6" y2="56.9" stroke="#fff" stroke-width="3.2"/><line x1="24.7" y1="57.8" x2="13.4" y2="60.3" stroke="#fff" stroke-width="4.6" stroke-linecap="round"/><line x1="45.3" y1="48.3" x2="32.8" y2="38.3" stroke="#fff" stroke-width="3.2"/><line x1="29.7" y1="35.8" x2="20.7" y2="28.6" stroke="#fff" stroke-width="4.6" stroke-linecap="round"/><circle cx="50" cy="52" r="8" fill="#fff"/><circle cx="50" cy="52" r="3.2" fill="#4a55c8"/></svg>
<span style="top:1033.5px;font-size:27px;line-height:35px;left:2183.0px;letter-spacing:0.48px;color:#46536a;">team:</span>
<span style="top:1033.5px;font-size:27px;line-height:35px;left:2255.414px;letter-spacing:-0.17px;color:#0a2a6b;">ads</span>
<div style="left:2316.294px;top:1030px;width:392.27px;height:42px;background:#f3f3f5;border-radius:7px;"></div>
<svg style="left:2323.794px;top:1037px;" width="27.5" height="27.5" viewBox="-2 0 104 104"><polygon points="50.00,8.00 84.40,24.57 92.90,61.79 69.09,91.64 30.91,91.64 7.10,61.79 15.60,24.57" fill="#326de6" stroke="#326de6" stroke-width="12" stroke-linejoin="round"/><circle cx="50" cy="52" r="23.5" fill="none" stroke="#fff" stroke-width="7"/><line x1="50.0" y1="46.0" x2="50.0" y2="30.0" stroke="#fff" stroke-width="3.2"/><line x1="50.0" y1="26.0" x2="50.0" y2="14.5" stroke="#fff" stroke-width="4.6" stroke-linecap="round"/><line x1="54.7" y1="48.3" x2="67.2" y2="38.3" stroke="#fff" stroke-width="3.2"/><line x1="70.3" y1="35.8" x2="79.3" y2="28.6" stroke="#fff" stroke-width="4.6" stroke-linecap="round"/><line x1="55.8" y1="53.3" x2="71.4" y2="56.9" stroke="#fff" stroke-width="3.2"/><line x1="75.3" y1="57.8" x2="86.6" y2="60.3" stroke="#fff" stroke-width="4.6" stroke-linecap="round"/><line x1="52.6" y1="57.4" x2="59.5" y2="71.8" stroke="#fff" stroke-width="3.2"/><line x1="61.3" y1="75.4" x2="66.3" y2="85.8" stroke="#fff" stroke-width="4.6" stroke-linecap="round"/><line x1="47.4" y1="57.4" x2="40.5" y2="71.8" stroke="#fff" stroke-width="3.2"/><line x1="38.7" y1="75.4" x2="33.7" y2="85.8" stroke="#fff" stroke-width="4.6" stroke-linecap="round"/><line x1="44.2" y1="53.3" x2="28.6" y2="56.9" stroke="#fff" stroke-width="3.2"/><line x1="24.7" y1="57.8" x2="13.4" y2="60.3" stroke="#fff" stroke-width="4.6" stroke-linecap="round"/><line x1="45.3" y1="48.3" x2="32.8" y2="38.3" stroke="#fff" stroke-width="3.2"/><line x1="29.7" y1="35.8" x2="20.7" y2="28.6" stroke="#fff" stroke-width="4.6" stroke-linecap="round"/><circle cx="50" cy="52" r="8" fill="#fff"/><circle cx="50" cy="52" r="3.2" fill="#4a55c8"/></svg>
<span style="top:1033.5px;font-size:27px;line-height:35px;left:2364.794px;letter-spacing:0.12px;color:#46536a;">chart_name:</span>
<span style="top:1033.5px;font-size:27px;line-height:35px;left:2518.692px;letter-spacing:0.44px;color:#0a2a6b;">dd-trace-demo</span>
<div style="left:2717.814px;top:1030px;width:429.32px;height:42px;background:#f3f3f5;border-radius:7px;"></div>
<svg style="left:2725.314px;top:1037px;" width="27.5" height="27.5" viewBox="-2 0 104 104"><polygon points="50.00,8.00 84.40,24.57 92.90,61.79 69.09,91.64 30.91,91.64 7.10,61.79 15.60,24.57" fill="#326de6" stroke="#326de6" stroke-width="12" stroke-linejoin="round"/><circle cx="50" cy="52" r="23.5" fill="none" stroke="#fff" stroke-width="7"/><line x1="50.0" y1="46.0" x2="50.0" y2="30.0" stroke="#fff" stroke-width="3.2"/><line x1="50.0" y1="26.0" x2="50.0" y2="14.5" stroke="#fff" stroke-width="4.6" stroke-linecap="round"/><line x1="54.7" y1="48.3" x2="67.2" y2="38.3" stroke="#fff" stroke-width="3.2"/><line x1="70.3" y1="35.8" x2="79.3" y2="28.6" stroke="#fff" stroke-width="4.6" stroke-linecap="round"/><line x1="55.8" y1="53.3" x2="71.4" y2="56.9" stroke="#fff" stroke-width="3.2"/><line x1="75.3" y1="57.8" x2="86.6" y2="60.3" stroke="#fff" stroke-width="4.6" stroke-linecap="round"/><line x1="52.6" y1="57.4" x2="59.5" y2="71.8" stroke="#fff" stroke-width="3.2"/><line x1="61.3" y1="75.4" x2="66.3" y2="85.8" stroke="#fff" stroke-width="4.6" stroke-linecap="round"/><line x1="47.4" y1="57.4" x2="40.5" y2="71.8" stroke="#fff" stroke-width="3.2"/><line x1="38.7" y1="75.4" x2="33.7" y2="85.8" stroke="#fff" stroke-width="4.6" stroke-linecap="round"/><line x1="44.2" y1="53.3" x2="28.6" y2="56.9" stroke="#fff" stroke-width="3.2"/><line x1="24.7" y1="57.8" x2="13.4" y2="60.3" stroke="#fff" stroke-width="4.6" stroke-linecap="round"/><line x1="45.3" y1="48.3" x2="32.8" y2="38.3" stroke="#fff" stroke-width="3.2"/><line x1="29.7" y1="35.8" x2="20.7" y2="28.6" stroke="#fff" stroke-width="4.6" stroke-linecap="round"/><circle cx="50" cy="52" r="8" fill="#fff"/><circle cx="50" cy="52" r="3.2" fill="#4a55c8"/></svg>
<span style="top:1033.5px;font-size:27px;line-height:35px;left:2766.314px;letter-spacing:0.25px;color:#46536a;">app:</span>
<span style="top:1033.5px;font-size:27px;line-height:35px;left:2822.348px;letter-spacing:0.73px;color:#0a2a6b;">product-recommendation</span>
<div style="left:3156.384px;top:1030px;width:63px;height:42px;background:linear-gradient(90deg,#f3f3f5 75%,#f8f8fa 100%);border-radius:7px 0 0 7px;overflow:hidden;"><span style="left:48.5px;top:3.5px;font-size:27px;line-height:35px;color:#0a2a6b;letter-spacing:1px;">...</span></div>
<svg style="left:3164.384px;top:1037px;" width="27.5" height="27.5" viewBox="-2 0 104 104"><polygon points="50.00,8.00 84.40,24.57 92.90,61.79 69.09,91.64 30.91,91.64 7.10,61.79 15.60,24.57" fill="#326de6" stroke="#326de6" stroke-width="12" stroke-linejoin="round"/><circle cx="50" cy="52" r="23.5" fill="none" stroke="#fff" stroke-width="7"/><line x1="50.0" y1="46.0" x2="50.0" y2="30.0" stroke="#fff" stroke-width="3.2"/><line x1="50.0" y1="26.0" x2="50.0" y2="14.5" stroke="#fff" stroke-width="4.6" stroke-linecap="round"/><line x1="54.7" y1="48.3" x2="67.2" y2="38.3" stroke="#fff" stroke-width="3.2"/><line x1="70.3" y1="35.8" x2="79.3" y2="28.6" stroke="#fff" stroke-width="4.6" stroke-linecap="round"/><line x1="55.8" y1="53.3" x2="71.4" y2="56.9" stroke="#fff" stroke-width="3.2"/><line x1="75.3" y1="57.8" x2="86.6" y2="60.3" stroke="#fff" stroke-width="4.6" stroke-linecap="round"/><line x1="52.6" y1="57.4" x2="59.5" y2="71.8" stroke="#fff" stroke-width="3.2"/><line x1="61.3" y1="75.4" x2="66.3" y2="85.8" stroke="#fff" stroke-width="4.6" stroke-linecap="round"/><line x1="47.4" y1="57.4" x2="40.5" y2="71.8" stroke="#fff" stroke-width="3.2"/><line x1="38.7" y1="75.4" x2="33.7" y2="85.8" stroke="#fff" stroke-width="4.6" stroke-linecap="round"/><line x1="44.2" y1="53.3" x2="28.6" y2="56.9" stroke="#fff" stroke-width="3.2"/><line x1="24.7" y1="57.8" x2="13.4" y2="60.3" stroke="#fff" stroke-width="4.6" stroke-linecap="round"/><line x1="45.3" y1="48.3" x2="32.8" y2="38.3" stroke="#fff" stroke-width="3.2"/><line x1="29.7" y1="35.8" x2="20.7" y2="28.6" stroke="#fff" stroke-width="4.6" stroke-linecap="round"/><circle cx="50" cy="52" r="8" fill="#fff"/><circle cx="50" cy="52" r="3.2" fill="#4a55c8"/></svg>
<div style="left:3226px;top:1030px;width:47px;height:42px;border:2px solid #d8dade;border-radius:8px;background:#fff;"></div>
<span style="top:1033.5px;font-size:27px;line-height:35px;left:3235px;letter-spacing:-0.7px;">+5</span>
<div style="left:3310px;top:1036px;width:8px;height:8px;background:#8d9399;border-radius:4px;"></div>
<div style="left:3310px;top:1048px;width:8px;height:8px;background:#8d9399;border-radius:4px;"></div>
<div style="left:3310px;top:1060px;width:8px;height:8px;background:#8d9399;border-radius:4px;"></div>
<div style="left:666px;top:1086px;width:2676px;height:2px;background:#dfe0e3;"></div>
<span style="top:1104.3px;font-size:27px;line-height:35px;left:740px;letter-spacing:0.34px;">product-recommendation-599ddb977c-5x89l</span>
<div style="left:1328px;top:1102px;width:118.586px;height:36px;background:#fef5e7;border-radius:3px;"></div>
<span style="top:1108.0px;font-size:22.5px;line-height:29px;left:1336px;letter-spacing:0.01px;font-weight:700;color:#ad7a24;">PENDING</span>
<span style="top:1104.3px;font-size:27px;line-height:35px;right:1642.6px;letter-spacing:-0.07px;">0 / 0</span>
<span style="top:1104.3px;font-size:27px;line-height:35px;right:1514.5px;letter-spacing:-0.51px;">0</span>
<span style="top:1104.3px;font-size:27px;line-height:35px;left:1885px;letter-spacing:0.32px;">6 hours</span>
<div style="left:2134.5px;top:1102px;width:172.544px;height:42px;background:#f3f3f5;border-radius:7px;"></div>
<svg style="left:2142.0px;top:1109px;" width="27.5" height="27.5" viewBox="-2 0 104 104"><polygon points="50.00,8.00 84.40,24.57 92.90,61.79 69.09,91.64 30.91,91.64 7.10,61.79 15.60,24.57" fill="#326de6" stroke="#326de6" stroke-width="12" stroke-linejoin="round"/><circle cx="50" cy="52" r="23.5" fill="none" stroke="#fff" stroke-width="7"/><line x1="50.0" y1="46.0" x2="50.0" y2="30.0" stroke="#fff" stroke-width="3.2"/><line x1="50.0" y1="26.0" x2="50.0" y2="14.5" stroke="#fff" stroke-width="4.6" stroke-linecap="round"/><line x1="54.7" y1="48.3" x2="67.2" y2="38.3" stroke="#fff" stroke-width="3.2"/><line x1="70.3" y1="35.8" x2="79.3" y2="28.6" stroke="#fff" stroke-width="4.6" stroke-linecap="round"/><line x1="55.8" y1="53.3" x2="71.4" y2="56.9" stroke="#fff" stroke-width="3.2"/><line x1="75.3" y1="57.8" x2="86.6" y2="60.3" stroke="#fff" stroke-width="4.6" stroke-linecap="round"/><line x1="52.6" y1="57.4" x2="59.5" y2="71.8" stroke="#fff" stroke-width="3.2"/><line x1="61.3" y1="75.4" x2="66.3" y2="85.8" stroke="#fff" stroke-width="4.6" stroke-linecap="round"/><line x1="47.4" y1="57.4" x2="40.5" y2="71.8" stroke="#fff" stroke-width="3.2"/><line x1="38.7" y1="75.4" x2="33.7" y2="85.8" stroke="#fff" stroke-width="4.6" stroke-linecap="round"/><line x1="44.2" y1="53.3" x2="28.6" y2="56.9" stroke="#fff" stroke-width="3.2"/><line x1="24.7" y1="57.8" x2="13.4" y2="60.3" stroke="#fff" stroke-width="4.6" stroke-linecap="round"/><line x1="45.3" y1="48.3" x2="32.8" y2="38.3" stroke="#fff" stroke-width="3.2"/><line x1="29.7" y1="35.8" x2="20.7" y2="28.6" stroke="#fff" stroke-width="4.6" stroke-linecap="round"/><circle cx="50" cy="52" r="8" fill="#fff"/><circle cx="50" cy="52" r="3.2" fill="#4a55c8"/></svg>
<span style="top:1105.5px;font-size:27px;line-height:35px;left:2183.0px;letter-spacing:0.48px;color:#46536a;">team:</span>
<span style="top:1105.5px;font-size:27px;line-height:35px;left:2255.414px;letter-spacing:-0.17px;color:#0a2a6b;">ads</span>
<div style="left:2316.294px;top:1102px;width:392.27px;height:42px;background:#f3f3f5;border-radius:7px;"></div>
<svg style="left:2323.794px;top:1109px;" width="27.5" height="27.5" viewBox="-2 0 104 104"><polygon points="50.00,8.00 84.40,24.57 92.90,61.79 69.09,91.64 30.91,91.64 7.10,61.79 15.60,24.57" fill="#326de6" stroke="#326de6" stroke-width="12" stroke-linejoin="round"/><circle cx="50" cy="52" r="23.5" fill="none" stroke="#fff" stroke-width="7"/><line x1="50.0" y1="46.0" x2="50.0" y2="30.0" stroke="#fff" stroke-width="3.2"/><line x1="50.0" y1="26.0" x2="50.0" y2="14.5" stroke="#fff" stroke-width="4.6" stroke-linecap="round"/><line x1="54.7" y1="48.3" x2="67.2" y2="38.3" stroke="#fff" stroke-width="3.2"/><line x1="70.3" y1="35.8" x2="79.3" y2="28.6" stroke="#fff" stroke-width="4.6" stroke-linecap="round"/><line x1="55.8" y1="53.3" x2="71.4" y2="56.9" stroke="#fff" stroke-width="3.2"/><line x1="75.3" y1="57.8" x2="86.6" y2="60.3" stroke="#fff" stroke-width="4.6" stroke-linecap="round"/><line x1="52.6" y1="57.4" x2="59.5" y2="71.8" stroke="#fff" stroke-width="3.2"/><line x1="61.3" y1="75.4" x2="66.3" y2="85.8" stroke="#fff" stroke-width="4.6" stroke-linecap="round"/><line x1="47.4" y1="57.4" x2="40.5" y2="71.8" stroke="#fff" stroke-width="3.2"/><line x1="38.7" y1="75.4" x2="33.7" y2="85.8" stroke="#fff" stroke-width="4.6" stroke-linecap="round"/><line x1="44.2" y1="53.3" x2="28.6" y2="56.9" stroke="#fff" stroke-width="3.2"/><line x1="24.7" y1="57.8" x2="13.4" y2="60.3" stroke="#fff" stroke-width="4.6" stroke-linecap="round"/><line x1="45.3" y1="48.3" x2="32.8" y2="38.3" stroke="#fff" stroke-width="3.2"/><line x1="29.7" y1="35.8" x2="20.7" y2="28.6" stroke="#fff" stroke-width="4.6" stroke-linecap="round"/><circle cx="50" cy="52" r="8" fill="#fff"/><circle cx="50" cy="52" r="3.2" fill="#4a55c8"/></svg>
<span style="top:1105.5px;font-size:27px;line-height:35px;left:2364.794px;letter-spacing:0.12px;color:#46536a;">chart_name:</span>
<span style="top:1105.5px;font-size:27px;line-height:35px;left:2518.692px;letter-spacing:0.44px;color:#0a2a6b;">dd-trace-demo</span>
<div style="left:2717.814px;top:1102px;width:429.32px;height:42px;background:#f3f3f5;border-radius:7px;"></div>
<svg style="left:2725.314px;top:1109px;" width="27.5" height="27.5" viewBox="-2 0 104 104"><polygon points="50.00,8.00 84.40,24.57 92.90,61.79 69.09,91.64 30.91,91.64 7.10,61.79 15.60,24.57" fill="#326de6" stroke="#326de6" stroke-width="12" stroke-linejoin="round"/><circle cx="50" cy="52" r="23.5" fill="none" stroke="#fff" stroke-width="7"/><line x1="50.0" y1="46.0" x2="50.0" y2="30.0" stroke="#fff" stroke-width="3.2"/><line x1="50.0" y1="26.0" x2="50.0" y2="14.5" stroke="#fff" stroke-width="4.6" stroke-linecap="round"/><line x1="54.7" y1="48.3" x2="67.2" y2="38.3" stroke="#fff" stroke-width="3.2"/><line x1="70.3" y1="35.8" x2="79.3" y2="28.6" stroke="#fff" stroke-width="4.6" stroke-linecap="round"/><line x1="55.8" y1="53.3" x2="71.4" y2="56.9" stroke="#fff" stroke-width="3.2"/><line x1="75.3" y1="57.8" x2="86.6" y2="60.3" stroke="#fff" stroke-width="4.6" stroke-linecap="round"/><line x1="52.6" y1="57.4" x2="59.5" y2="71.8" stroke="#fff" stroke-width="3.2"/><line x1="61.3" y1="75.4" x2="66.3" y2="85.8" stroke="#fff" stroke-width="4.6" stroke-linecap="round"/><line x1="47.4" y1="57.4" x2="40.5" y2="71.8" stroke="#fff" stroke-width="3.2"/><line x1="38.7" y1="75.4" x2="33.7" y2="85.8" stroke="#fff" stroke-width="4.6" stroke-linecap="round"/><line x1="44.2" y1="53.3" x2="28.6" y2="56.9" stroke="#fff" stroke-width="3.2"/><line x1="24.7" y1="57.8" x2="13.4" y2="60.3" stroke="#fff" stroke-width="4.6" stroke-linecap="round"/><line x1="45.3" y1="48.3" x2="32.8" y2="38.3" stroke="#fff" stroke-width="3.2"/><line x1="29.7" y1="35.8" x2="20.7" y2="28.6" stroke="#fff" stroke-width="4.6" stroke-linecap="round"/><circle cx="50" cy="52" r="8" fill="#fff"/><circle cx="50" cy="52" r="3.2" fill="#4a55c8"/></svg>
<span style="top:1105.5px;font-size:27px;line-height:35px;left:2766.314px;letter-spacing:0.25px;color:#46536a;">app:</span>
<span style="top:1105.5px;font-size:27px;line-height:35px;left:2822.348px;letter-spacing:0.73px;color:#0a2a6b;">product-recommendation</span>
<div style="left:3156.384px;top:1102px;width:63px;height:42px;background:linear-gradient(90deg,#f3f3f5 75%,#f8f8fa 100%);border-radius:7px 0 0 7px;overflow:hidden;"><span style="left:48.5px;top:3.5px;font-size:27px;line-height:35px;color:#0a2a6b;letter-spacing:1px;">...</span></div>
<svg style="left:3164.384px;top:1109px;" width="27.5" height="27.5" viewBox="-2 0 104 104"><polygon points="50.00,8.00 84.40,24.57 92.90,61.79 69.09,91.64 30.91,91.64 7.10,61.79 15.60,24.57" fill="#326de6" stroke="#326de6" stroke-width="12" stroke-linejoin="round"/><circle cx="50" cy="52" r="23.5" fill="none" stroke="#fff" stroke-width="7"/><line x1="50.0" y1="46.0" x2="50.0" y2="30.0" stroke="#fff" stroke-width="3.2"/><line x1="50.0" y1="26.0" x2="50.0" y2="14.5" stroke="#fff" stroke-width="4.6" stroke-linecap="round"/><line x1="54.7" y1="48.3" x2="67.2" y2="38.3" stroke="#fff" stroke-width="3.2"/><line x1="70.3" y1="35.8" x2="79.3" y2="28.6" stroke="#fff" stroke-width="4.6" stroke-linecap="round"/><line x1="55.8" y1="53.3" x2="71.4" y2="56.9" stroke="#fff" stroke-width="3.2"/><line x1="75.3" y1="57.8" x2="86.6" y2="60.3" stroke="#fff" stroke-width="4.6" stroke-linecap="round"/><line x1="52.6" y1="57.4" x2="59.5" y2="71.8" stroke="#fff" stroke-width="3.2"/><line x1="61.3" y1="75.4" x2="66.3" y2="85.8" stroke="#fff" stroke-width="4.6" stroke-linecap="round"/><line x1="47.4" y1="57.4" x2="40.5" y2="71.8" stroke="#fff" stroke-width="3.2"/><line x1="38.7" y1="75.4" x2="33.7" y2="85.8" stroke="#fff" stroke-width="4.6" stroke-linecap="round"/><line x1="44.2" y1="53.3" x2="28.6" y2="56.9" stroke="#fff" stroke-width="3.2"/><line x1="24.7" y1="57.8" x2="13.4" y2="60.3" stroke="#fff" stroke-width="4.6" stroke-linecap="round"/><line x1="45.3" y1="48.3" x2="32.8" y2="38.3" stroke="#fff" stroke-width="3.2"/><line x1="29.7" y1="35.8" x2="20.7" y2="28.6" stroke="#fff" stroke-width="4.6" stroke-linecap="round"/><circle cx="50" cy="52" r="8" fill="#fff"/><circle cx="50" cy="52" r="3.2" fill="#4a55c8"/></svg>
<div style="left:3226px;top:1102px;width:47px;height:42px;border:2px solid #d8dade;border-radius:8px;background:#fff;"></div>
<span style="top:1105.5px;font-size:27px;line-height:35px;left:3235px;letter-spacing:-0.7px;">+5</span>
<div style="left:3310px;top:1108px;width:8px;height:8px;background:#8d9399;border-radius:4px;"></div>
<div style="left:3310px;top:1120px;width:8px;height:8px;background:#8d9399;border-radius:4px;"></div>
<div style="left:3310px;top:1132px;width:8px;height:8px;background:#8d9399;border-radius:4px;"></div>
<div style="left:666px;top:1158px;width:2676px;height:2px;background:#dfe0e3;"></div>
<span style="top:1176.3px;font-size:27px;line-height:35px;left:740px;letter-spacing:0.33px;">product-recommendation-599ddb977c-97m4s</span>
<div style="left:1328px;top:1174px;width:118.586px;height:36px;background:#fef5e7;border-radius:3px;"></div>
<span style="top:1180.0px;font-size:22.5px;line-height:29px;left:1336px;letter-spacing:0.01px;font-weight:700;color:#ad7a24;">PENDING</span>
<span style="top:1176.3px;font-size:27px;line-height:35px;right:1642.6px;letter-spacing:-0.07px;">0 / 0</span>
<span style="top:1176.3px;font-size:27px;line-height:35px;right:1514.5px;letter-spacing:-0.51px;">0</span>
<span style="top:1176.3px;font-size:27px;line-height:35px;left:1885px;letter-spacing:0.32px;">6 hours</span>
<div style="left:2134.5px;top:1174px;width:172.544px;height:42px;background:#f3f3f5;border-radius:7px;"></div>
<svg style="left:2142.0px;top:1181px;" width="27.5" height="27.5" viewBox="-2 0 104 104"><polygon points="50.00,8.00 84.40,24.57 92.90,61.79 69.09,91.64 30.91,91.64 7.10,61.79 15.60,24.57" fill="#326de6" stroke="#326de6" stroke-width="12" stroke-linejoin="round"/><circle cx="50" cy="52" r="23.5" fill="none" stroke="#fff" stroke-width="7"/><line x1="50.0" y1="46.0" x2="50.0" y2="30.0" stroke="#fff" stroke-width="3.2"/><line x1="50.0" y1="26.0" x2="50.0" y2="14.5" stroke="#fff" stroke-width="4.6" stroke-linecap="round"/><line x1="54.7" y1="48.3" x2="67.2" y2="38.3" stroke="#fff" stroke-width="3.2"/><line x1="70.3" y1="35.8" x2="79.3" y2="28.6" stroke="#fff" stroke-width="4.6" stroke-linecap="round"/><line x1="55.8" y1="53.3" x2="71.4" y2="56.9" stroke="#fff" stroke-width="3.2"/><line x1="75.3" y1="57.8" x2="86.6" y2="60.3" stroke="#fff" stroke-width="4.6" stroke-linecap="round"/><line x1="52.6" y1="57.4" x2="59.5" y2="71.8" stroke="#fff" stroke-width="3.2"/><line x1="61.3" y1="75.4" x2="66.3" y2="85.8" stroke="#fff" stroke-width="4.6" stroke-linecap="round"/><line x1="47.4" y1="57.4" x2="40.5" y2="71.8" stroke="#fff" stroke-width="3.2"/><line x1="38.7" y1="75.4" x2="33.7" y2="85.8" stroke="#fff" stroke-width="4.6" stroke-linecap="round"/><line x1="44.2" y1="53.3" x2="28.6" y2="56.9" stroke="#fff" stroke-width="3.2"/><line x1="24.7" y1="57.8" x2="13.4" y2="60.3" stroke="#fff" stroke-width="4.6" stroke-linecap="round"/><line x1="45.3" y1="48.3" x2="32.8" y2="38.3" stroke="#fff" stroke-width="3.2"/><line x1="29.7" y1="35.8" x2="20.7" y2="28.6" stroke="#fff" stroke-width="4.6" stroke-linecap="round"/><circle cx="50" cy="52" r="8" fill="#fff"/><circle cx="50" cy="52" r="3.2" fill="#4a55c8"/></svg>
<span style="top:1177.5px;font-size:27px;line-height:35px;left:2183.0px;letter-spacing:0.48px;color:#46536a;">team:</span>
<span style="top:1177.5px;font-size:27px;line-height:35px;left:2255.414px;letter-spacing:-0.17px;color:#0a2a6b;">ads</span>
<div style="left:2316.294px;top:1174px;width:392.27px;height:42px;background:#f3f3f5;border-radius:7px;"></div>
<svg style="left:2323.794px;top:1181px;" width="27.5" height="27.5" viewBox="-2 0 104 104"><polygon points="50.00,8.00 84.40,24.57 92.90,61.79 69.09,91.64 30.91,91.64 7.10,61.79 15.60,24.57" fill="#326de6" stroke="#326de6" stroke-width="12" stroke-linejoin="round"/><circle cx="50" cy="52" r="23.5" fill="none" stroke="#fff" stroke-width="7"/><line x1="50.0" y1="46.0" x2="50.0" y2="30.0" stroke="#fff" stroke-width="3.2"/><line x1="50.0" y1="26.0" x2="50.0" y2="14.5" stroke="#fff" stroke-width="4.6" stroke-linecap="round"/><line x1="54.7" y1="48.3" x2="67.2" y2="38.3" stroke="#fff" stroke-width="3.2"/><line x1="70.3" y1="35.8" x2="79.3" y2="28.6" stroke="#fff" stroke-width="4.6" stroke-linecap="round"/><line x1="55.8" y1="53.3" x2="71.4" y2="56.9" stroke="#fff" stroke-width="3.2"/><line x1="75.3" y1="57.8" x2="86.6" y2="60.3" stroke="#fff" stroke-width="4.6" stroke-linecap="round"/><line x1="52.6" y1="57.4" x2="59.5" y2="71.8" stroke="#fff" stroke-width="3.2"/><line x1="61.3" y1="75.4" x2="66.3" y2="85.8" stroke="#fff" stroke-width="4.6" stroke-linecap="round"/><line x1="47.4" y1="57.4" x2="40.5" y2="71.8" stroke="#fff" stroke-width="3.2"/><line x1="38.7" y1="75.4" x2="33.7" y2="85.8" stroke="#fff" stroke-width="4.6" stroke-linecap="round"/><line x1="44.2" y1="53.3" x2="28.6" y2="56.9" stroke="#fff" stroke-width="3.2"/><line x1="24.7" y1="57.8" x2="13.4" y2="60.3" stroke="#fff" stroke-width="4.6" stroke-linecap="round"/><line x1="45.3" y1="48.3" x2="32.8" y2="38.3" stroke="#fff" stroke-width="3.2"/><line x1="29.7" y1="35.8" x2="20.7" y2="28.6" stroke="#fff" stroke-width="4.6" stroke-linecap="round"/><circle cx="50" cy="52" r="8" fill="#fff"/><circle cx="50" cy="52" r="3.2" fill="#4a55c8"/></svg>
<span style="top:1177.5px;font-size:27px;line-height:35px;left:2364.794px;letter-spacing:0.12px;color:#46536a;">chart_name:</span>
<span style="top:1177.5px;font-size:27px;line-height:35px;left:2518.692px;letter-spacing:0.44px;color:#0a2a6b;">dd-trace-demo</span>
<div style="left:2717.814px;top:1174px;width:429.32px;height:42px;background:#f3f3f5;border-radius:7px;"></div>
<svg style="left:2725.314px;top:1181px;" width="27.5" height="27.5" viewBox="-2 0 104 104"><polygon points="50.00,8.00 84.40,24.57 92.90,61.79 69.09,91.64 30.91,91.64 7.10,61.79 15.60,24.57" fill="#326de6" stroke="#326de6" stroke-width="12" stroke-linejoin="round"/><circle cx="50" cy="52" r="23.5" fill="none" stroke="#fff" stroke-width="7"/><line x1="50.0" y1="46.0" x2="50.0" y2="30.0" stroke="#fff" stroke-width="3.2"/><line x1="50.0" y1="26.0" x2="50.0" y2="14.5" stroke="#fff" stroke-width="4.6" stroke-linecap="round"/><line x1="54.7" y1="48.3" x2="67.2" y2="38.3" stroke="#fff" stroke-width="3.2"/><line x1="70.3" y1="35.8" x2="79.3" y2="28.6" stroke="#fff" stroke-width="4.6" stroke-linecap="round"/><line x1="55.8" y1="53.3" x2="71.4" y2="56.9" stroke="#fff" stroke-width="3.2"/><line x1="75.3" y1="57.8" x2="86.6" y2="60.3" stroke="#fff" stroke-width="4.6" stroke-linecap="round"/><line x1="52.6" y1="57.4" x2="59.5" y2="71.8" stroke="#fff" stroke-width="3.2"/><line x1="61.3" y1="75.4" x2="66.3" y2="85.8" stroke="#fff" stroke-width="4.6" stroke-linecap="round"/><line x1="47.4" y1="57.4" x2="40.5" y2="71.8" stroke="#fff" stroke-width="3.2"/><line x1="38.7" y1="75.4" x2="33.7" y2="85.8" stroke="#fff" stroke-width="4.6" stroke-linecap="round"/><line x1="44.2" y1="53.3" x2="28.6" y2="56.9" stroke="#fff" stroke-width="3.2"/><line x1="24.7" y1="57.8" x2="13.4" y2="60.3" stroke="#fff" stroke-width="4.6" stroke-linecap="round"/><line x1="45.3" y1="48.3" x2="32.8" y2="38.3" stroke="#fff" stroke-width="3.2"/><line x1="29.7" y1="35.8" x2="20.7" y2="28.6" stroke="#fff" stroke-width="4.6" stroke-linecap="round"/><circle cx="50" cy="52" r="8" fill="#fff"/><circle cx="50" cy="52" r="3.2" fill="#4a55c8"/></svg>
<span style="top:1177.5px;font-size:27px;line-height:35px;left:2766.314px;letter-spacing:0.25px;color:#46536a;">app:</span>
<span style="top:1177.5px;font-size:27px;line-height:35px;left:2822.348px;letter-spacing:0.73px;color:#0a2a6b;">product-recommendation</span>
<div style="left:3156.384px;top:1174px;width:63px;height:42px;background:linear-gradient(90deg,#f3f3f5 75%,#f8f8fa 100%);border-radius:7px 0 0 7px;overflow:hidden;"><span style="left:48.5px;top:3.5px;font-size:27px;line-height:35px;color:#0a2a6b;letter-spacing:1px;">...</span></div>
<svg style="left:3164.384px;top:1181px;" width="27.5" height="27.5" viewBox="-2 0 104 104"><polygon points="50.00,8.00 84.40,24.57 92.90,61.79 69.09,91.64 30.91,91.64 7.10,61.79 15.60,24.57" fill="#326de6" stroke="#326de6" stroke-width="12" stroke-linejoin="round"/><circle cx="50" cy="52" r="23.5" fill="none" stroke="#fff" stroke-width="7"/><line x1="50.0" y1="46.0" x2="50.0" y2="30.0" stroke="#fff" stroke-width="3.2"/><line x1="50.0" y1="26.0" x2="50.0" y2="14.5" stroke="#fff" stroke-width="4.6" stroke-linecap="round"/><line x1="54.7" y1="48.3" x2="67.2" y2="38.3" stroke="#fff" stroke-width="3.2"/><line x1="70.3" y1="35.8" x2="79.3" y2="28.6" stroke="#fff" stroke-width="4.6" stroke-linecap="round"/><line x1="55.8" y1="53.3" x2="71.4" y2="56.9" stroke="#fff" stroke-width="3.2"/><line x1="75.3" y1="57.8" x2="86.6" y2="60.3" stroke="#fff" stroke-width="4.6" stroke-linecap="round"/><line x1="52.6" y1="57.4" x2="59.5" y2="71.8" stroke="#fff" stroke-width="3.2"/><line x1="61.3" y1="75.4" x2="66.3" y2="85.8" stroke="#fff" stroke-width="4.6" stroke-linecap="round"/><line x1="47.4" y1="57.4" x2="40.5" y2="71.8" stroke="#fff" stroke-width="3.2"/><line x1="38.7" y1="75.4" x2="33.7" y2="85.8" stroke="#fff" stroke-width="4.6" stroke-linecap="round"/><line x1="44.2" y1="53.3" x2="28.6" y2="56.9" stroke="#fff" stroke-width="3.2"/><line x1="24.7" y1="57.8" x2="13.4" y2="60.3" stroke="#fff" stroke-width="4.6" stroke-linecap="round"/><line x1="45.3" y1="48.3" x2="32.8" y2="38.3" stroke="#fff" stroke-width="3.2"/><line x1="29.7" y1="35.8" x2="20.7" y2="28.6" stroke="#fff" stroke-width="4.6" stroke-linecap="round"/><circle cx="50" cy="52" r="8" fill="#fff"/><circle cx="50" cy="52" r="3.2" fill="#4a55c8"/></svg>
<div style="left:3226px;top:1174px;width:47px;height:42px;border:2px solid #d8dade;border-radius:8px;background:#fff;"></div>
<span style="top:1177.5px;font-size:27px;line-height:35px;left:3235px;letter-spacing:-0.7px;">+5</span>
<div style="left:3310px;top:1180px;width:8px;height:8px;background:#8d9399;border-radius:4px;"></div>
<div style="left:3310px;top:1192px;width:8px;height:8px;background:#8d9399;border-radius:4px;"></div>
<div style="left:3310px;top:1204px;width:8px;height:8px;background:#8d9399;border-radius:4px;"></div>
<div style="left:666px;top:1230px;width:2676px;height:2px;background:#dfe0e3;"></div>
<span style="top:1248.3px;font-size:27px;line-height:35px;left:740px;letter-spacing:0.51px;">product-recommendation-599ddb977c-hhlrm</span>
<div style="left:1328px;top:1246px;width:118.586px;height:36px;background:#fef5e7;border-radius:3px;"></div>
<span style="top:1252.0px;font-size:22.5px;line-height:29px;left:1336px;letter-spacing:0.01px;font-weight:700;color:#ad7a24;">PENDING</span>
<span style="top:1248.3px;font-size:27px;line-height:35px;right:1642.6px;letter-spacing:-0.07px;">0 / 0</span>
<span style="top:1248.3px;font-size:27px;line-height:35px;right:1514.5px;letter-spacing:-0.51px;">0</span>
<span style="top:1248.3px;font-size:27px;line-height:35px;left:1885px;letter-spacing:0.32px;">6 hours</span>
<div style="left:2134.5px;top:1246px;width:172.544px;height:42px;background:#f3f3f5;border-radius:7px;"></div>
<svg style="left:2142.0px;top:1253px;" width="27.5" height="27.5" viewBox="-2 0 104 104"><polygon points="50.00,8.00 84.40,24.57 92.90,61.79 69.09,91.64 30.91,91.64 7.10,61.79 15.60,24.57" fill="#326de6" stroke="#326de6" stroke-width="12" stroke-linejoin="round"/><circle cx="50" cy="52" r="23.5" fill="none" stroke="#fff" stroke-width="7"/><line x1="50.0" y1="46.0" x2="50.0" y2="30.0" stroke="#fff" stroke-width="3.2"/><line x1="50.0" y1="26.0" x2="50.0" y2="14.5" stroke="#fff" stroke-width="4.6" stroke-linecap="round"/><line x1="54.7" y1="48.3" x2="67.2" y2="38.3" stroke="#fff" stroke-width="3.2"/><line x1="70.3" y1="35.8" x2="79.3" y2="28.6" stroke="#fff" stroke-width="4.6" stroke-linecap="round"/><line x1="55.8" y1="53.3" x2="71.4" y2="56.9" stroke="#fff" stroke-width="3.2"/><line x1="75.3" y1="57.8" x2="86.6" y2="60.3" stroke="#fff" stroke-width="4.6" stroke-linecap="round"/><line x1="52.6" y1="57.4" x2="59.5" y2="71.8" stroke="#fff" stroke-width="3.2"/><line x1="61.3" y1="75.4" x2="66.3" y2="85.8" stroke="#fff" stroke-width="4.6" stroke-linecap="round"/><line x1="47.4" y1="57.4" x2="40.5" y2="71.8" stroke="#fff" stroke-width="3.2"/><line x1="38.7" y1="75.4" x2="33.7" y2="85.8" stroke="#fff" stroke-width="4.6" stroke-linecap="round"/><line x1="44.2" y1="53.3" x2="28.6" y2="56.9" stroke="#fff" stroke-width="3.2"/><line x1="24.7" y1="57.8" x2="13.4" y2="60.3" stroke="#fff" stroke-width="4.6" stroke-linecap="round"/><line x1="45.3" y1="48.3" x2="32.8" y2="38.3" stroke="#fff" stroke-width="3.2"/><line x1="29.7" y1="35.8" x2="20.7" y2="28.6" stroke="#fff" stroke-width="4.6" stroke-linecap="round"/><circle cx="50" cy="52" r="8" fill="#fff"/><circle cx="50" cy="52" r="3.2" fill="#4a55c8"/></svg>
<span style="top:1249.5px;font-size:27px;line-height:35px;left:2183.0px;letter-spacing:0.48px;color:#46536a;">team:</span>
<span style="top:1249.5px;font-size:27px;line-height:35px;left:2255.414px;letter-spacing:-0.17px;color:#0a2a6b;">ads</span>
<div style="left:2316.294px;top:1246px;width:392.27px;height:42px;background:#f3f3f5;border-radius:7px;"></div>
<svg style="left:2323.794px;top:1253px;" width="27.5" height="27.5" viewBox="-2 0 104 104"><polygon points="50.00,8.00 84.40,24.57 92.90,61.79 69.09,91.64 30.91,91.64 7.10,61.79 15.60,24.57" fill="#326de6" stroke="#326de6" stroke-width="12" stroke-linejoin="round"/><circle cx="50" cy="52" r="23.5" fill="none" stroke="#fff" stroke-width="7"/><line x1="50.0" y1="46.0" x2="50.0" y2="30.0" stroke="#fff" stroke-width="3.2"/><line x1="50.0" y1="26.0" x2="50.0" y2="14.5" stroke="#fff" stroke-width="4.6" stroke-linecap="round"/><line x1="54.7" y1="48.3" x2="67.2" y2="38.3" stroke="#fff" stroke-width="3.2"/><line x1="70.3" y1="35.8" x2="79.3" y2="28.6" stroke="#fff" stroke-width="4.6" stroke-linecap="round"/><line x1="55.8" y1="53.3" x2="71.4" y2="56.9" stroke="#fff" stroke-width="3.2"/><line x1="75.3" y1="57.8" x2="86.6" y2="60.3" stroke="#fff" stroke-width="4.6" stroke-linecap="round"/><line x1="52.6" y1="57.4" x2="59.5" y2="71.8" stroke="#fff" stroke-width="3.2"/><line x1="61.3" y1="75.4" x2="66.3" y2="85.8" stroke="#fff" stroke-width="4.6" stroke-linecap="round"/><line x1="47.4" y1="57.4" x2="40.5" y2="71.8" stroke="#fff" stroke-width="3.2"/><line x1="38.7" y1="75.4" x2="33.7" y2="85.8" stroke="#fff" stroke-width="4.6" stroke-linecap="round"/><line x1="44.2" y1="53.3" x2="28.6" y2="56.9" stroke="#fff" stroke-width="3.2"/><line x1="24.7" y1="57.8" x2="13.4" y2="60.3" stroke="#fff" stroke-width="4.6" stroke-linecap="round"/><line x1="45.3" y1="48.3" x2="32.8" y2="38.3" stroke="#fff" stroke-width="3.2"/><line x1="29.7" y1="35.8" x2="20.7" y2="28.6" stroke="#fff" stroke-width="4.6" stroke-linecap="round"/><circle cx="50" cy="52" r="8" fill="#fff"/><circle cx="50" cy="52" r="3.2" fill="#4a55c8"/></svg>
<span style="top:1249.5px;font-size:27px;line-height:35px;left:2364.794px;letter-spacing:0.12px;color:#46536a;">chart_name:</span>
<span style="top:1249.5px;font-size:27px;line-height:35px;left:2518.692px;letter-spacing:0.44px;color:#0a2a6b;">dd-trace-demo</span>
<div style="left:2717.814px;top:1246px;width:429.32px;height:42px;background:#f3f3f5;border-radius:7px;"></div>
<svg style="left:2725.314px;top:1253px;" width="27.5" height="27.5" viewBox="-2 0 104 104"><polygon points="50.00,8.00 84.40,24.57 92.90,61.79 69.09,91.64 30.91,91.64 7.10,61.79 15.60,24.57" fill="#326de6" stroke="#326de6" stroke-width="12" stroke-linejoin="round"/><circle cx="50" cy="52" r="23.5" fill="none" stroke="#fff" stroke-width="7"/><line x1="50.0" y1="46.0" x2="50.0" y2="30.0" stroke="#fff" stroke-width="3.2"/><line x1="50.0" y1="26.0" x2="50.0" y2="14.5" stroke="#fff" stroke-width="4.6" stroke-linecap="round"/><line x1="54.7" y1="48.3" x2="67.2" y2="38.3" stroke="#fff" stroke-width="3.2"/><line x1="70.3" y1="35.8" x2="79.3" y2="28.6" stroke="#fff" stroke-width="4.6" stroke-linecap="round"/><line x1="55.8" y1="53.3" x2="71.4" y2="56.9" stroke="#fff" stroke-width="3.2"/><line x1="75.3" y1="57.8" x2="86.6" y2="60.3" stroke="#fff" stroke-width="4.6" stroke-linecap="round"/><line x1="52.6" y1="57.4" x2="59.5" y2="71.8" stroke="#fff" stroke-width="3.2"/><line x1="61.3" y1="75.4" x2="66.3" y2="85.8" stroke="#fff" stroke-width="4.6" stroke-linecap="round"/><line x1="47.4" y1="57.4" x2="40.5" y2="71.8" stroke="#fff" stroke-width="3.2"/><line x1="38.7" y1="75.4" x2="33.7" y2="85.8" stroke="#fff" stroke-width="4.6" stroke-linecap="round"/><line x1="44.2" y1="53.3" x2="28.6" y2="56.9" stroke="#fff" stroke-width="3.2"/><line x1="24.7" y1="57.8" x2="13.4" y2="60.3" stroke="#fff" stroke-width="4.6" stroke-linecap="round"/><line x1="45.3" y1="48.3" x2="32.8" y2="38.3" stroke="#fff" stroke-width="3.2"/><line x1="29.7" y1="35.8" x2="20.7" y2="28.6" stroke="#fff" stroke-width="4.6" stroke-linecap="round"/><circle cx="50" cy="52" r="8" fill="#fff"/><circle cx="50" cy="52" r="3.2" fill="#4a55c8"/></svg>
<span style="top:1249.5px;font-size:27px;line-height:35px;left:2766.314px;letter-spacing:0.25px;color:#46536a;">app:</span>
<span style="top:1249.5px;font-size:27px;line-height:35px;left:2822.348px;letter-spacing:0.73px;color:#0a2a6b;">product-recommendation</span>
<div style="left:3156.384px;top:1246px;width:63px;height:42px;background:linear-gradient(90deg,#f3f3f5 75%,#f8f8fa 100%);border-radius:7px 0 0 7px;overflow:hidden;"><span style="left:48.5px;top:3.5px;font-size:27px;line-height:35px;color:#0a2a6b;letter-spacing:1px;">...</span></div>
<svg style="left:3164.384px;top:1253px;" width="27.5" height="27.5" viewBox="-2 0 104 104"><polygon points="50.00,8.00 84.40,24.57 92.90,61.79 69.09,91.64 30.91,91.64 7.10,61.79 15.60,24.57" fill="#326de6" stroke="#326de6" stroke-width="12" stroke-linejoin="round"/><circle cx="50" cy="52" r="23.5" fill="none" stroke="#fff" stroke-width="7"/><line x1="50.0" y1="46.0" x2="50.0" y2="30.0" stroke="#fff" stroke-width="3.2"/><line x1="50.0" y1="26.0" x2="50.0" y2="14.5" stroke="#fff" stroke-width="4.6" stroke-linecap="round"/><line x1="54.7" y1="48.3" x2="67.2" y2="38.3" stroke="#fff" stroke-width="3.2"/><line x1="70.3" y1="35.8" x2="79.3" y2="28.6" stroke="#fff" stroke-width="4.6" stroke-linecap="round"/><line x1="55.8" y1="53.3" x2="71.4" y2="56.9" stroke="#fff" stroke-width="3.2"/><line x1="75.3" y1="57.8" x2="86.6" y2="60.3" stroke="#fff" stroke-width="4.6" stroke-linecap="round"/><line x1="52.6" y1="57.4" x2="59.5" y2="71.8" stroke="#fff" stroke-width="3.2"/><line x1="61.3" y1="75.4" x2="66.3" y2="85.8" stroke="#fff" stroke-width="4.6" stroke-linecap="round"/><line x1="47.4" y1="57.4" x2="40.5" y2="71.8" stroke="#fff" stroke-width="3.2"/><line x1="38.7" y1="75.4" x2="33.7" y2="85.8" stroke="#fff" stroke-width="4.6" stroke-linecap="round"/><line x1="44.2" y1="53.3" x2="28.6" y2="56.9" stroke="#fff" stroke-width="3.2"/><line x1="24.7" y1="57.8" x2="13.4" y2="60.3" stroke="#fff" stroke-width="4.6" stroke-linecap="round"/><line x1="45.3" y1="48.3" x2="32.8" y2="38.3" stroke="#fff" stroke-width="3.2"/><line x1="29.7" y1="35.8" x2="20.7" y2="28.6" stroke="#fff" stroke-width="4.6" stroke-linecap="round"/><circle cx="50" cy="52" r="8" fill="#fff"/><circle cx="50" cy="52" r="3.2" fill="#4a55c8"/></svg>
<div style="left:3226px;top:1246px;width:47px;height:42px;border:2px solid #d8dade;border-radius:8px;background:#fff;"></div>
<span style="top:1249.5px;font-size:27px;line-height:35px;left:3235px;letter-spacing:-0.7px;">+5</span>
<div style="left:3310px;top:1252px;width:8px;height:8px;background:#8d9399;border-radius:4px;"></div>
<div style="left:3310px;top:1264px;width:8px;height:8px;background:#8d9399;border-radius:4px;"></div>
<div style="left:3310px;top:1276px;width:8px;height:8px;background:#8d9399;border-radius:4px;"></div>
<div style="left:666px;top:1302px;width:2676px;height:2px;background:#dfe0e3;"></div>
<span style="top:1320.3px;font-size:27px;line-height:35px;left:740px;letter-spacing:0.38px;">product-recommendation-599ddb977c-jvm99</span>
<div style="left:1328px;top:1318px;width:118.586px;height:36px;background:#fef5e7;border-radius:3px;"></div>
<span style="top:1324.0px;font-size:22.5px;line-height:29px;left:1336px;letter-spacing:0.01px;font-weight:700;color:#ad7a24;">PENDING</span>
<span style="top:1320.3px;font-size:27px;line-height:35px;right:1642.6px;letter-spacing:-0.07px;">0 / 0</span>
<span style="top:1320.3px;font-size:27px;line-height:35px;right:1514.5px;letter-spacing:-0.51px;">0</span>
<span style="top:1320.3px;font-size:27px;line-height:35px;left:1885px;letter-spacing:0.32px;">6 hours</span>
<div style="left:2134.5px;top:1318px;width:172.544px;height:42px;background:#f3f3f5;border-radius:7px;"></div>
<svg style="left:2142.0px;top:1325px;" width="27.5" height="27.5" viewBox="-2 0 104 104"><polygon points="50.00,8.00 84.40,24.57 92.90,61.79 69.09,91.64 30.91,91.64 7.10,61.79 15.60,24.57" fill="#326de6" stroke="#326de6" stroke-width="12" stroke-linejoin="round"/><circle cx="50" cy="52" r="23.5" fill="none" stroke="#fff" stroke-width="7"/><line x1="50.0" y1="46.0" x2="50.0" y2="30.0" stroke="#fff" stroke-width="3.2"/><line x1="50.0" y1="26.0" x2="50.0" y2="14.5" stroke="#fff" stroke-width="4.6" stroke-linecap="round"/><line x1="54.7" y1="48.3" x2="67.2" y2="38.3" stroke="#fff" stroke-width="3.2"/><line x1="70.3" y1="35.8" x2="79.3" y2="28.6" stroke="#fff" stroke-width="4.6" stroke-linecap="round"/><line x1="55.8" y1="53.3" x2="71.4" y2="56.9" stroke="#fff" stroke-width="3.2"/><line x1="75.3" y1="57.8" x2="86.6" y2="60.3" stroke="#fff" stroke-width="4.6" stroke-linecap="round"/><line x1="52.6" y1="57.4" x2="59.5" y2="71.8" stroke="#fff" stroke-width="3.2"/><line x1="61.3" y1="75.4" x2="66.3" y2="85.8" stroke="#fff" stroke-width="4.6" stroke-linecap="round"/><line x1="47.4" y1="57.4" x2="40.5" y2="71.8" stroke="#fff" stroke-width="3.2"/><line x1="38.7" y1="75.4" x2="33.7" y2="85.8" stroke="#fff" stroke-width="4.6" stroke-linecap="round"/><line x1="44.2" y1="53.3" x2="28.6" y2="56.9" stroke="#fff" stroke-width="3.2"/><line x1="24.7" y1="57.8" x2="13.4" y2="60.3" stroke="#fff" stroke-width="4.6" stroke-linecap="round"/><line x1="45.3" y1="48.3" x2="32.8" y2="38.3" stroke="#fff" stroke-width="3.2"/><line x1="29.7" y1="35.8" x2="20.7" y2="28.6" stroke="#fff" stroke-width="4.6" stroke-linecap="round"/><circle cx="50" cy="52" r="8" fill="#fff"/><circle cx="50" cy="52" r="3.2" fill="#4a55c8"/></svg>
<span style="top:1321.5px;font-size:27px;line-height:35px;left:2183.0px;letter-spacing:0.48px;color:#46536a;">team:</span>
<span style="top:1321.5px;font-size:27px;line-height:35px;left:2255.414px;letter-spacing:-0.17px;color:#0a2a6b;">ads</span>
<div style="left:2316.294px;top:1318px;width:392.27px;height:42px;background:#f3f3f5;border-radius:7px;"></div>
<svg style="left:2323.794px;top:1325px;" width="27.5" height="27.5" viewBox="-2 0 104 104"><polygon points="50.00,8.00 84.40,24.57 92.90,61.79 69.09,91.64 30.91,91.64 7.10,61.79 15.60,24.57" fill="#326de6" stroke="#326de6" stroke-width="12" stroke-linejoin="round"/><circle cx="50" cy="52" r="23.5" fill="none" stroke="#fff" stroke-width="7"/><line x1="50.0" y1="46.0" x2="50.0" y2="30.0" stroke="#fff" stroke-width="3.2"/><line x1="50.0" y1="26.0" x2="50.0" y2="14.5" stroke="#fff" stroke-width="4.6" stroke-linecap="round"/><line x1="54.7" y1="48.3" x2="67.2" y2="38.3" stroke="#fff" stroke-width="3.2"/><line x1="70.3" y1="35.8" x2="79.3" y2="28.6" stroke="#fff" stroke-width="4.6" stroke-linecap="round"/><line x1="55.8" y1="53.3" x2="71.4" y2="56.9" stroke="#fff" stroke-width="3.2"/><line x1="75.3" y1="57.8" x2="86.6" y2="60.3" stroke="#fff" stroke-width="4.6" stroke-linecap="round"/><line x1="52.6" y1="57.4" x2="59.5" y2="71.8" stroke="#fff" stroke-width="3.2"/><line x1="61.3" y1="75.4" x2="66.3" y2="85.8" stroke="#fff" stroke-width="4.6" stroke-linecap="round"/><line x1="47.4" y1="57.4" x2="40.5" y2="71.8" stroke="#fff" stroke-width="3.2"/><line x1="38.7" y1="75.4" x2="33.7" y2="85.8" stroke="#fff" stroke-width="4.6" stroke-linecap="round"/><line x1="44.2" y1="53.3" x2="28.6" y2="56.9" stroke="#fff" stroke-width="3.2"/><line x1="24.7" y1="57.8" x2="13.4" y2="60.3" stroke="#fff" stroke-width="4.6" stroke-linecap="round"/><line x1="45.3" y1="48.3" x2="32.8" y2="38.3" stroke="#fff" stroke-width="3.2"/><line x1="29.7" y1="35.8" x2="20.7" y2="28.6" stroke="#fff" stroke-width="4.6" stroke-linecap="round"/><circle cx="50" cy="52" r="8" fill="#fff"/><circle cx="50" cy="52" r="3.2" fill="#4a55c8"/></svg>
<span style="top:1321.5px;font-size:27px;line-height:35px;left:2364.794px;letter-spacing:0.12px;color:#46536a;">chart_name:</span>
<span style="top:1321.5px;font-size:27px;line-height:35px;left:2518.692px;letter-spacing:0.44px;color:#0a2a6b;">dd-trace-demo</span>
<div style="left:2717.814px;top:1318px;width:429.32px;height:42px;background:#f3f3f5;border-radius:7px;"></div>
<svg style="left:2725.314px;top:1325px;" width="27.5" height="27.5" viewBox="-2 0 104 104"><polygon points="50.00,8.00 84.40,24.57 92.90,61.79 69.09,91.64 30.91,91.64 7.10,61.79 15.60,24.57" fill="#326de6" stroke="#326de6" stroke-width="12" stroke-linejoin="round"/><circle cx="50" cy="52" r="23.5" fill="none" stroke="#fff" stroke-width="7"/><line x1="50.0" y1="46.0" x2="50.0" y2="30.0" stroke="#fff" stroke-width="3.2"/><line x1="50.0" y1="26.0" x2="50.0" y2="14.5" stroke="#fff" stroke-width="4.6" stroke-linecap="round"/><line x1="54.7" y1="48.3" x2="67.2" y2="38.3" stroke="#fff" stroke-width="3.2"/><line x1="70.3" y1="35.8" x2="79.3" y2="28.6" stroke="#fff" stroke-width="4.6" stroke-linecap="round"/><line x1="55.8" y1="53.3" x2="71.4" y2="56.9" stroke="#fff" stroke-width="3.2"/><line x1="75.3" y1="57.8" x2="86.6" y2="60.3" stroke="#fff" stroke-width="4.6" stroke-linecap="round"/><line x1="52.6" y1="57.4" x2="59.5" y2="71.8" stroke="#fff" stroke-width="3.2"/><line x1="61.3" y1="75.4" x2="66.3" y2="85.8" stroke="#fff" stroke-width="4.6" stroke-linecap="round"/><line x1="47.4" y1="57.4" x2="40.5" y2="71.8" stroke="#fff" stroke-width="3.2"/><line x1="38.7" y1="75.4" x2="33.7" y2="85.8" stroke="#fff" stroke-width="4.6" stroke-linecap="round"/><line x1="44.2" y1="53.3" x2="28.6" y2="56.9" stroke="#fff" stroke-width="3.2"/><line x1="24.7" y1="57.8" x2="13.4" y2="60.3" stroke="#fff" stroke-width="4.6" stroke-linecap="round"/><line x1="45.3" y1="48.3" x2="32.8" y2="38.3" stroke="#fff" stroke-width="3.2"/><line x1="29.7" y1="35.8" x2="20.7" y2="28.6" stroke="#fff" stroke-width="4.6" stroke-linecap="round"/><circle cx="50" cy="52" r="8" fill="#fff"/><circle cx="50" cy="52" r="3.2" fill="#4a55c8"/></svg>
<span style="top:1321.5px;font-size:27px;line-height:35px;left:2766.314px;letter-spacing:0.25px;color:#46536a;">app:</span>
<span style="top:1321.5px;font-size:27px;line-height:35px;left:2822.348px;letter-spacing:0.73px;color:#0a2a6b;">product-recommendation</span>
<div style="left:3156.384px;top:1318px;width:63px;height:42px;background:linear-gradient(90deg,#f3f3f5 75%,#f8f8fa 100%);border-radius:7px 0 0 7px;overflow:hidden;"><span style="left:48.5px;top:3.5px;font-size:27px;line-height:35px;color:#0a2a6b;letter-spacing:1px;">...</span></div>
<svg style="left:3164.384px;top:1325px;" width="27.5" height="27.5" viewBox="-2 0 104 104"><polygon points="50.00,8.00 84.40,24.57 92.90,61.79 69.09,91.64 30.91,91.64 7.10,61.79 15.60,24.57" fill="#326de6" stroke="#326de6" stroke-width="12" stroke-linejoin="round"/><circle cx="50" cy="52" r="23.5" fill="none" stroke="#fff" stroke-width="7"/><line x1="50.0" y1="46.0" x2="50.0" y2="30.0" stroke="#fff" stroke-width="3.2"/><line x1="50.0" y1="26.0" x2="50.0" y2="14.5" stroke="#fff" stroke-width="4.6" stroke-linecap="round"/><line x1="54.7" y1="48.3" x2="67.2" y2="38.3" stroke="#fff" stroke-width="3.2"/><line x1="70.3" y1="35.8" x2="79.3" y2="28.6" stroke="#fff" stroke-width="4.6" stroke-linecap="round"/><line x1="55.8" y1="53.3" x2="71.4" y2="56.9" stroke="#fff" stroke-width="3.2"/><line x1="75.3" y1="57.8" x2="86.6" y2="60.3" stroke="#fff" stroke-width="4.6" stroke-linecap="round"/><line x1="52.6" y1="57.4" x2="59.5" y2="71.8" stroke="#fff" stroke-width="3.2"/><line x1="61.3" y1="75.4" x2="66.3" y2="85.8" stroke="#fff" stroke-width="4.6" stroke-linecap="round"/><line x1="47.4" y1="57.4" x2="40.5" y2="71.8" stroke="#fff" stroke-width="3.2"/><line x1="38.7" y1="75.4" x2="33.7" y2="85.8" stroke="#fff" stroke-width="4.6" stroke-linecap="round"/><line x1="44.2" y1="53.3" x2="28.6" y2="56.9" stroke="#fff" stroke-width="3.2"/><line x1="24.7" y1="57.8" x2="13.4" y2="60.3" stroke="#fff" stroke-width="4.6" stroke-linecap="round"/><line x1="45.3" y1="48.3" x2="32.8" y2="38.3" stroke="#fff" stroke-width="3.2"/><line x1="29.7" y1="35.8" x2="20.7" y2="28.6" stroke="#fff" stroke-width="4.6" stroke-linecap="round"/><circle cx="50" cy="52" r="8" fill="#fff"/><circle cx="50" cy="52" r="3.2" fill="#4a55c8"/></svg>
<div style="left:3226px;top:1318px;width:47px;height:42px;border:2px solid #d8dade;border-radius:8px;background:#fff;"></div>
<span style="top:1321.5px;font-size:27px;line-height:35px;left:3235px;letter-spacing:-0.7px;">+5</span>
<div style="left:3310px;top:1324px;width:8px;height:8px;background:#8d9399;border-radius:4px;"></div>
<div style="left:3310px;top:1336px;width:8px;height:8px;background:#8d9399;border-radius:4px;"></div>
<div style="left:3310px;top:1348px;width:8px;height:8px;background:#8d9399;border-radius:4px;"></div>
<div style="left:666px;top:1374px;width:2676px;height:2px;background:#dfe0e3;"></div>
<span style="top:1392.3px;font-size:27px;line-height:35px;left:740px;letter-spacing:0.37px;">product-recommendation-599ddb977c-v4srq</span>
<div style="left:1328px;top:1390px;width:118.586px;height:36px;background:#fef5e7;border-radius:3px;"></div>
<span style="top:1396.0px;font-size:22.5px;line-height:29px;left:1336px;letter-spacing:0.01px;font-weight:700;color:#ad7a24;">PENDING</span>
<span style="top:1392.3px;font-size:27px;line-height:35px;right:1642.6px;letter-spacing:-0.07px;">0 / 0</span>
<span style="top:1392.3px;font-size:27px;line-height:35px;right:1514.5px;letter-spacing:-0.51px;">0</span>
<span style="top:1392.3px;font-size:27px;line-height:35px;left:1885px;letter-spacing:0.32px;">6 hours</span>
<div style="left:2134.5px;top:1390px;width:172.544px;height:42px;background:#f3f3f5;border-radius:7px;"></div>
<svg style="left:2142.0px;top:1397px;" width="27.5" height="27.5" viewBox="-2 0 104 104"><polygon points="50.00,8.00 84.40,24.57 92.90,61.79 69.09,91.64 30.91,91.64 7.10,61.79 15.60,24.57" fill="#326de6" stroke="#326de6" stroke-width="12" stroke-linejoin="round"/><circle cx="50" cy="52" r="23.5" fill="none" stroke="#fff" stroke-width="7"/><line x1="50.0" y1="46.0" x2="50.0" y2="30.0" stroke="#fff" stroke-width="3.2"/><line x1="50.0" y1="26.0" x2="50.0" y2="14.5" stroke="#fff" stroke-width="4.6" stroke-linecap="round"/><line x1="54.7" y1="48.3" x2="67.2" y2="38.3" stroke="#fff" stroke-width="3.2"/><line x1="70.3" y1="35.8" x2="79.3" y2="28.6" stroke="#fff" stroke-width="4.6" stroke-linecap="round"/><line x1="55.8" y1="53.3" x2="71.4" y2="56.9" stroke="#fff" stroke-width="3.2"/><line x1="75.3" y1="57.8" x2="86.6" y2="60.3" stroke="#fff" stroke-width="4.6" stroke-linecap="round"/><line x1="52.6" y1="57.4" x2="59.5" y2="71.8" stroke="#fff" stroke-width="3.2"/><line x1="61.3" y1="75.4" x2="66.3" y2="85.8" stroke="#fff" stroke-width="4.6" stroke-linecap="round"/><line x1="47.4" y1="57.4" x2="40.5" y2="71.8" stroke="#fff" stroke-width="3.2"/><line x1="38.7" y1="75.4" x2="33.7" y2="85.8" stroke="#fff" stroke-width="4.6" stroke-linecap="round"/><line x1="44.2" y1="53.3" x2="28.6" y2="56.9" stroke="#fff" stroke-width="3.2"/><line x1="24.7" y1="57.8" x2="13.4" y2="60.3" stroke="#fff" stroke-width="4.6" stroke-linecap="round"/><line x1="45.3" y1="48.3" x2="32.8" y2="38.3" stroke="#fff" stroke-width="3.2"/><line x1="29.7" y1="35.8" x2="20.7" y2="28.6" stroke="#fff" stroke-width="4.6" stroke-linecap="round"/><circle cx="50" cy="52" r="8" fill="#fff"/><circle cx="50" cy="52" r="3.2" fill="#4a55c8"/></svg>
<span style="top:1393.5px;font-size:27px;line-height:35px;left:2183.0px;letter-spacing:0.48px;color:#46536a;">team:</span>
<span style="top:1393.5px;font-size:27px;line-height:35px;left:2255.414px;letter-spacing:-0.17px;color:#0a2a6b;">ads</span>
<div style="left:2316.294px;top:1390px;width:392.27px;height:42px;background:#f3f3f5;border-radius:7px;"></div>
<svg style="left:2323.794px;top:1397px;" width="27.5" height="27.5" viewBox="-2 0 104 104"><polygon points="50.00,8.00 84.40,24.57 92.90,61.79 69.09,91.64 30.91,91.64 7.10,61.79 15.60,24.57" fill="#326de6" stroke="#326de6" stroke-width="12" stroke-linejoin="round"/><circle cx="50" cy="52" r="23.5" fill="none" stroke="#fff" stroke-width="7"/><line x1="50.0" y1="46.0" x2="50.0" y2="30.0" stroke="#fff" stroke-width="3.2"/><line x1="50.0" y1="26.0" x2="50.0" y2="14.5" stroke="#fff" stroke-width="4.6" stroke-linecap="round"/><line x1="54.7" y1="48.3" x2="67.2" y2="38.3" stroke="#fff" stroke-width="3.2"/><line x1="70.3" y1="35.8" x2="79.3" y2="28.6" stroke="#fff" stroke-width="4.6" stroke-linecap="round"/><line x1="55.8" y1="53.3" x2="71.4" y2="56.9" stroke="#fff" stroke-width="3.2"/><line x1="75.3" y1="57.8" x2="86.6" y2="60.3" stroke="#fff" stroke-width="4.6" stroke-linecap="round"/><line x1="52.6" y1="57.4" x2="59.5" y2="71.8" stroke="#fff" stroke-width="3.2"/><line x1="61.3" y1="75.4" x2="66.3" y2="85.8" stroke="#fff" stroke-width="4.6" stroke-linecap="round"/><line x1="47.4" y1="57.4" x2="40.5" y2="71.8" stroke="#fff" stroke-width="3.2"/><line x1="38.7" y1="75.4" x2="33.7" y2="85.8" stroke="#fff" stroke-width="4.6" stroke-linecap="round"/><line x1="44.2" y1="53.3" x2="28.6" y2="56.9" stroke="#fff" stroke-width="3.2"/><line x1="24.7" y1="57.8" x2="13.4" y2="60.3" stroke="#fff" stroke-width="4.6" stroke-linecap="round"/><line x1="45.3" y1="48.3" x2="32.8" y2="38.3" stroke="#fff" stroke-width="3.2"/><line x1="29.7" y1="35.8" x2="20.7" y2="28.6" stroke="#fff" stroke-width="4.6" stroke-linecap="round"/><circle cx="50" cy="52" r="8" fill="#fff"/><circle cx="50" cy="52" r="3.2" fill="#4a55c8"/></svg>
<span style="top:1393.5px;font-size:27px;line-height:35px;left:2364.794px;letter-spacing:0.12px;color:#46536a;">chart_name:</span>
<span style="top:1393.5px;font-size:27px;line-height:35px;left:2518.692px;letter-spacing:0.44px;color:#0a2a6b;">dd-trace-demo</span>
<div style="left:2717.814px;top:1390px;width:429.32px;height:42px;background:#f3f3f5;border-radius:7px;"></div>
<svg style="left:2725.314px;top:1397px;" width="27.5" height="27.5" viewBox="-2 0 104 104"><polygon points="50.00,8.00 84.40,24.57 92.90,61.79 69.09,91.64 30.91,91.64 7.10,61.79 15.60,24.57" fill="#326de6" stroke="#326de6" stroke-width="12" stroke-linejoin="round"/><circle cx="50" cy="52" r="23.5" fill="none" stroke="#fff" stroke-width="7"/><line x1="50.0" y1="46.0" x2="50.0" y2="30.0" stroke="#fff" stroke-width="3.2"/><line x1="50.0" y1="26.0" x2="50.0" y2="14.5" stroke="#fff" stroke-width="4.6" stroke-linecap="round"/><line x1="54.7" y1="48.3" x2="67.2" y2="38.3" stroke="#fff" stroke-width="3.2"/><line x1="70.3" y1="35.8" x2="79.3" y2="28.6" stroke="#fff" stroke-width="4.6" stroke-linecap="round"/><line x1="55.8" y1="53.3" x2="71.4" y2="56.9" stroke="#fff" stroke-width="3.2"/><line x1="75.3" y1="57.8" x2="86.6" y2="60.3" stroke="#fff" stroke-width="4.6" stroke-linecap="round"/><line x1="52.6" y1="57.4" x2="59.5" y2="71.8" stroke="#fff" stroke-width="3.2"/><line x1="61.3" y1="75.4" x2="66.3" y2="85.8" stroke="#fff" stroke-width="4.6" stroke-linecap="round"/><line x1="47.4" y1="57.4" x2="40.5" y2="71.8" stroke="#fff" stroke-width="3.2"/><line x1="38.7" y1="75.4" x2="33.7" y2="85.8" stroke="#fff" stroke-width="4.6" stroke-linecap="round"/><line x1="44.2" y1="53.3" x2="28.6" y2="56.9" stroke="#fff" stroke-width="3.2"/><line x1="24.7" y1="57.8" x2="13.4" y2="60.3" stroke="#fff" stroke-width="4.6" stroke-linecap="round"/><line x1="45.3" y1="48.3" x2="32.8" y2="38.3" stroke="#fff" stroke-width="3.2"/><line x1="29.7" y1="35.8" x2="20.7" y2="28.6" stroke="#fff" stroke-width="4.6" stroke-linecap="round"/><circle cx="50" cy="52" r="8" fill="#fff"/><circle cx="50" cy="52" r="3.2" fill="#4a55c8"/></svg>
<span style="top:1393.5px;font-size:27px;line-height:35px;left:2766.314px;letter-spacing:0.25px;color:#46536a;">app:</span>
<span style="top:1393.5px;font-size:27px;line-height:35px;left:2822.348px;letter-spacing:0.73px;color:#0a2a6b;">product-recommendation</span>
<div style="left:3156.384px;top:1390px;width:63px;height:42px;background:linear-gradient(90deg,#f3f3f5 75%,#f8f8fa 100%);border-radius:7px 0 0 7px;overflow:hidden;"><span style="left:48.5px;top:3.5px;font-size:27px;line-height:35px;color:#0a2a6b;letter-spacing:1px;">...</span></div>
<svg style="left:3164.384px;top:1397px;" width="27.5" height="27.5" viewBox="-2 0 104 104"><polygon points="50.00,8.00 84.40,24.57 92.90,61.79 69.09,91.64 30.91,91.64 7.10,61.79 15.60,24.57" fill="#326de6" stroke="#326de6" stroke-width="12" stroke-linejoin="round"/><circle cx="50" cy="52" r="23.5" fill="none" stroke="#fff" stroke-width="7"/><line x1="50.0" y1="46.0" x2="50.0" y2="30.0" stroke="#fff" stroke-width="3.2"/><line x1="50.0" y1="26.0" x2="50.0" y2="14.5" stroke="#fff" stroke-width="4.6" stroke-linecap="round"/><line x1="54.7" y1="48.3" x2="67.2" y2="38.3" stroke="#fff" stroke-width="3.2"/><line x1="70.3" y1="35.8" x2="79.3" y2="28.6" stroke="#fff" stroke-width="4.6" stroke-linecap="round"/><line x1="55.8" y1="53.3" x2="71.4" y2="56.9" stroke="#fff" stroke-width="3.2"/><line x1="75.3" y1="57.8" x2="86.6" y2="60.3" stroke="#fff" stroke-width="4.6" stroke-linecap="round"/><line x1="52.6" y1="57.4" x2="59.5" y2="71.8" stroke="#fff" stroke-width="3.2"/><line x1="61.3" y1="75.4" x2="66.3" y2="85.8" stroke="#fff" stroke-width="4.6" stroke-linecap="round"/><line x1="47.4" y1="57.4" x2="40.5" y2="71.8" stroke="#fff" stroke-width="3.2"/><line x1="38.7" y1="75.4" x2="33.7" y2="85.8" stroke="#fff" stroke-width="4.6" stroke-linecap="round"/><line x1="44.2" y1="53.3" x2="28.6" y2="56.9" stroke="#fff" stroke-width="3.2"/><line x1="24.7" y1="57.8" x2="13.4" y2="60.3" stroke="#fff" stroke-width="4.6" stroke-linecap="round"/><line x1="45.3" y1="48.3" x2="32.8" y2="38.3" stroke="#fff" stroke-width="3.2"/><line x1="29.7" y1="35.8" x2="20.7" y2="28.6" stroke="#fff" stroke-width="4.6" stroke-linecap="round"/><circle cx="50" cy="52" r="8" fill="#fff"/><circle cx="50" cy="52" r="3.2" fill="#4a55c8"/></svg>
<div style="left:3226px;top:1390px;width:47px;height:42px;border:2px solid #d8dade;border-radius:8px;background:#fff;"></div>
<span style="top:1393.5px;font-size:27px;line-height:35px;left:3235px;letter-spacing:-0.7px;">+5</span>
<div style="left:3310px;top:1396px;width:8px;height:8px;background:#8d9399;border-radius:4px;"></div>
<div style="left:3310px;top:1408px;width:8px;height:8px;background:#8d9399;border-radius:4px;"></div>
<div style="left:3310px;top:1420px;width:8px;height:8px;background:#8d9399;border-radius:4px;"></div>
<div style="left:666px;top:1446px;width:2676px;height:2px;background:#dfe0e3;"></div>
<span style="top:1464.3px;font-size:27px;line-height:35px;left:740px;letter-spacing:0.51px;">product-recommendation-5b4894dbf-2fvqd</span>
<div style="left:1328px;top:1462px;width:125.23px;height:36px;background:#e9f8ed;border-radius:3px;"></div>
<span style="top:1468.0px;font-size:22.5px;line-height:29px;left:1336px;letter-spacing:0.6px;font-weight:700;color:#2e9b4e;">RUNNING</span>
<span style="top:1464.3px;font-size:27px;line-height:35px;right:1642.6px;letter-spacing:-0.07px;">1 / 1</span>
<span style="top:1464.3px;font-size:27px;line-height:35px;right:1514.5px;letter-spacing:-0.51px;">0</span>
<span style="top:1464.3px;font-size:27px;line-height:35px;left:1885px;letter-spacing:0.32px;">6 hours</span>
<div style="left:2134.5px;top:1462px;width:172.544px;height:42px;background:#f3f3f5;border-radius:7px;"></div>
<svg style="left:2142.0px;top:1469px;" width="27.5" height="27.5" viewBox="-2 0 104 104"><polygon points="50.00,8.00 84.40,24.57 92.90,61.79 69.09,91.64 30.91,91.64 7.10,61.79 15.60,24.57" fill="#326de6" stroke="#326de6" stroke-width="12" stroke-linejoin="round"/><circle cx="50" cy="52" r="23.5" fill="none" stroke="#fff" stroke-width="7"/><line x1="50.0" y1="46.0" x2="50.0" y2="30.0" stroke="#fff" stroke-width="3.2"/><line x1="50.0" y1="26.0" x2="50.0" y2="14.5" stroke="#fff" stroke-width="4.6" stroke-linecap="round"/><line x1="54.7" y1="48.3" x2="67.2" y2="38.3" stroke="#fff" stroke-width="3.2"/><line x1="70.3" y1="35.8" x2="79.3" y2="28.6" stroke="#fff" stroke-width="4.6" stroke-linecap="round"/><line x1="55.8" y1="53.3" x2="71.4" y2="56.9" stroke="#fff" stroke-width="3.2"/><line x1="75.3" y1="57.8" x2="86.6" y2="60.3" stroke="#fff" stroke-width="4.6" stroke-linecap="round"/><line x1="52.6" y1="57.4" x2="59.5" y2="71.8" stroke="#fff" stroke-width="3.2"/><line x1="61.3" y1="75.4" x2="66.3" y2="85.8" stroke="#fff" stroke-width="4.6" stroke-linecap="round"/><line x1="47.4" y1="57.4" x2="40.5" y2="71.8" stroke="#fff" stroke-width="3.2"/><line x1="38.7" y1="75.4" x2="33.7" y2="85.8" stroke="#fff" stroke-width="4.6" stroke-linecap="round"/><line x1="44.2" y1="53.3" x2="28.6" y2="56.9" stroke="#fff" stroke-width="3.2"/><line x1="24.7" y1="57.8" x2="13.4" y2="60.3" stroke="#fff" stroke-width="4.6" stroke-linecap="round"/><line x1="45.3" y1="48.3" x2="32.8" y2="38.3" stroke="#fff" stroke-width="3.2"/><line x1="29.7" y1="35.8" x2="20.7" y2="28.6" stroke="#fff" stroke-width="4.6" stroke-linecap="round"/><circle cx="50" cy="52" r="8" fill="#fff"/><circle cx="50" cy="52" r="3.2" fill="#4a55c8"/></svg>
<span style="top:1465.5px;font-size:27px;line-height:35px;left:2183.0px;letter-spacing:0.48px;color:#46536a;">team:</span>
<span style="top:1465.5px;font-size:27px;line-height:35px;left:2255.414px;letter-spacing:-0.17px;color:#0a2a6b;">ads</span>
<div style="left:2316.294px;top:1462px;width:392.27px;height:42px;background:#f3f3f5;border-radius:7px;"></div>
<svg style="left:2323.794px;top:1469px;" width="27.5" height="27.5" viewBox="-2 0 104 104"><polygon points="50.00,8.00 84.40,24.57 92.90,61.79 69.09,91.64 30.91,91.64 7.10,61.79 15.60,24.57" fill="#326de6" stroke="#326de6" stroke-width="12" stroke-linejoin="round"/><circle cx="50" cy="52" r="23.5" fill="none" stroke="#fff" stroke-width="7"/><line x1="50.0" y1="46.0" x2="50.0" y2="30.0" stroke="#fff" stroke-width="3.2"/><line x1="50.0" y1="26.0" x2="50.0" y2="14.5" stroke="#fff" stroke-width="4.6" stroke-linecap="round"/><line x1="54.7" y1="48.3" x2="67.2" y2="38.3" stroke="#fff" stroke-width="3.2"/><line x1="70.3" y1="35.8" x2="79.3" y2="28.6" stroke="#fff" stroke-width="4.6" stroke-linecap="round"/><line x1="55.8" y1="53.3" x2="71.4" y2="56.9" stroke="#fff" stroke-width="3.2"/><line x1="75.3" y1="57.8" x2="86.6" y2="60.3" stroke="#fff" stroke-width="4.6" stroke-linecap="round"/><line x1="52.6" y1="57.4" x2="59.5" y2="71.8" stroke="#fff" stroke-width="3.2"/><line x1="61.3" y1="75.4" x2="66.3" y2="85.8" stroke="#fff" stroke-width="4.6" stroke-linecap="round"/><line x1="47.4" y1="57.4" x2="40.5" y2="71.8" stroke="#fff" stroke-width="3.2"/><line x1="38.7" y1="75.4" x2="33.7" y2="85.8" stroke="#fff" stroke-width="4.6" stroke-linecap="round"/><line x1="44.2" y1="53.3" x2="28.6" y2="56.9" stroke="#fff" stroke-width="3.2"/><line x1="24.7" y1="57.8" x2="13.4" y2="60.3" stroke="#fff" stroke-width="4.6" stroke-linecap="round"/><line x1="45.3" y1="48.3" x2="32.8" y2="38.3" stroke="#fff" stroke-width="3.2"/><line x1="29.7" y1="35.8" x2="20.7" y2="28.6" stroke="#fff" stroke-width="4.6" stroke-linecap="round"/><circle cx="50" cy="52" r="8" fill="#fff"/><circle cx="50" cy="52" r="3.2" fill="#4a55c8"/></svg>
<span style="top:1465.5px;font-size:27px;line-height:35px;left:2364.794px;letter-spacing:0.12px;color:#46536a;">chart_name:</span>
<span style="top:1465.5px;font-size:27px;line-height:35px;left:2518.692px;letter-spacing:0.44px;color:#0a2a6b;">dd-trace-demo</span>
<div style="left:2717.814px;top:1462px;width:429.32px;height:42px;background:#f3f3f5;border-radius:7px;"></div>
<svg style="left:2725.314px;top:1469px;" width="27.5" height="27.5" viewBox="-2 0 104 104"><polygon points="50.00,8.00 84.40,24.57 92.90,61.79 69.09,91.64 30.91,91.64 7.10,61.79 15.60,24.57" fill="#326de6" stroke="#326de6" stroke-width="12" stroke-linejoin="round"/><circle cx="50" cy="52" r="23.5" fill="none" stroke="#fff" stroke-width="7"/><line x1="50.0" y1="46.0" x2="50.0" y2="30.0" stroke="#fff" stroke-width="3.2"/><line x1="50.0" y1="26.0" x2="50.0" y2="14.5" stroke="#fff" stroke-width="4.6" stroke-linecap="round"/><line x1="54.7" y1="48.3" x2="67.2" y2="38.3" stroke="#fff" stroke-width="3.2"/><line x1="70.3" y1="35.8" x2="79.3" y2="28.6" stroke="#fff" stroke-width="4.6" stroke-linecap="round"/><line x1="55.8" y1="53.3" x2="71.4" y2="56.9" stroke="#fff" stroke-width="3.2"/><line x1="75.3" y1="57.8" x2="86.6" y2="60.3" stroke="#fff" stroke-width="4.6" stroke-linecap="round"/><line x1="52.6" y1="57.4" x2="59.5" y2="71.8" stroke="#fff" stroke-width="3.2"/><line x1="61.3" y1="75.4" x2="66.3" y2="85.8" stroke="#fff" stroke-width="4.6" stroke-linecap="round"/><line x1="47.4" y1="57.4" x2="40.5" y2="71.8" stroke="#fff" stroke-width="3.2"/><line x1="38.7" y1="75.4" x2="33.7" y2="85.8" stroke="#fff" stroke-width="4.6" stroke-linecap="round"/><line x1="44.2" y1="53.3" x2="28.6" y2="56.9" stroke="#fff" stroke-width="3.2"/><line x1="24.7" y1="57.8" x2="13.4" y2="60.3" stroke="#fff" stroke-width="4.6" stroke-linecap="round"/><line x1="45.3" y1="48.3" x2="32.8" y2="38.3" stroke="#fff" stroke-width="3.2"/><line x1="29.7" y1="35.8" x2="20.7" y2="28.6" stroke="#fff" stroke-width="4.6" stroke-linecap="round"/><circle cx="50" cy="52" r="8" fill="#fff"/><circle cx="50" cy="52" r="3.2" fill="#4a55c8"/></svg>
<span style="top:1465.5px;font-size:27px;line-height:35px;left:2766.314px;letter-spacing:0.25px;color:#46536a;">app:</span>
<span style="top:1465.5px;font-size:27px;line-height:35px;left:2822.348px;letter-spacing:0.73px;color:#0a2a6b;">product-recommendation</span>
<div style="left:3156.384px;top:1462px;width:63px;height:42px;background:linear-gradient(90deg,#f3f3f5 75%,#f8f8fa 100%);border-radius:7px 0 0 7px;overflow:hidden;"><span style="left:48.5px;top:3.5px;font-size:27px;line-height:35px;color:#0a2a6b;letter-spacing:1px;">...</span></div>
<svg style="left:3164.384px;top:1469px;" width="27.5" height="27.5" viewBox="-2 0 104 104"><polygon points="50.00,8.00 84.40,24.57 92.90,61.79 69.09,91.64 30.91,91.64 7.10,61.79 15.60,24.57" fill="#326de6" stroke="#326de6" stroke-width="12" stroke-linejoin="round"/><circle cx="50" cy="52" r="23.5" fill="none" stroke="#fff" stroke-width="7"/><line x1="50.0" y1="46.0" x2="50.0" y2="30.0" stroke="#fff" stroke-width="3.2"/><line x1="50.0" y1="26.0" x2="50.0" y2="14.5" stroke="#fff" stroke-width="4.6" stroke-linecap="round"/><line x1="54.7" y1="48.3" x2="67.2" y2="38.3" stroke="#fff" stroke-width="3.2"/><line x1="70.3" y1="35.8" x2="79.3" y2="28.6" stroke="#fff" stroke-width="4.6" stroke-linecap="round"/><line x1="55.8" y1="53.3" x2="71.4" y2="56.9" stroke="#fff" stroke-width="3.2"/><line x1="75.3" y1="57.8" x2="86.6" y2="60.3" stroke="#fff" stroke-width="4.6" stroke-linecap="round"/><line x1="52.6" y1="57.4" x2="59.5" y2="71.8" stroke="#fff" stroke-width="3.2"/><line x1="61.3" y1="75.4" x2="66.3" y2="85.8" stroke="#fff" stroke-width="4.6" stroke-linecap="round"/><line x1="47.4" y1="57.4" x2="40.5" y2="71.8" stroke="#fff" stroke-width="3.2"/><line x1="38.7" y1="75.4" x2="33.7" y2="85.8" stroke="#fff" stroke-width="4.6" stroke-linecap="round"/><line x1="44.2" y1="53.3" x2="28.6" y2="56.9" stroke="#fff" stroke-width="3.2"/><line x1="24.7" y1="57.8" x2="13.4" y2="60.3" stroke="#fff" stroke-width="4.6" stroke-linecap="round"/><line x1="45.3" y1="48.3" x2="32.8" y2="38.3" stroke="#fff" stroke-width="3.2"/><line x1="29.7" y1="35.8" x2="20.7" y2="28.6" stroke="#fff" stroke-width="4.6" stroke-linecap="round"/><circle cx="50" cy="52" r="8" fill="#fff"/><circle cx="50" cy="52" r="3.2" fill="#4a55c8"/></svg>
<div style="left:3226px;top:1462px;width:47px;height:42px;border:2px solid #d8dade;border-radius:8px;background:#fff;"></div>
<span style="top:1465.5px;font-size:27px;line-height:35px;left:3235px;letter-spacing:-0.7px;">+5</span>
<div style="left:3310px;top:1468px;width:8px;height:8px;background:#8d9399;border-radius:4px;"></div>
<div style="left:3310px;top:1480px;width:8px;height:8px;background:#8d9399;border-radius:4px;"></div>
<div style="left:3310px;top:1492px;width:8px;height:8px;background:#8d9399;border-radius:4px;"></div>
<div style="left:666px;top:1518px;width:2676px;height:2px;background:#dfe0e3;"></div>
<span style="top:1536.3px;font-size:27px;line-height:35px;left:740px;letter-spacing:0.42px;">product-recommendation-5b4894dbf-6wsk7</span>
<div style="left:1328px;top:1534px;width:125.23px;height:36px;background:#e9f8ed;border-radius:3px;"></div>
<span style="top:1540.0px;font-size:22.5px;line-height:29px;left:1336px;letter-spacing:0.6px;font-weight:700;color:#2e9b4e;">RUNNING</span>
<span style="top:1536.3px;font-size:27px;line-height:35px;right:1642.6px;letter-spacing:-0.07px;">1 / 1</span>
<span style="top:1536.3px;font-size:27px;line-height:35px;right:1514.5px;letter-spacing:-0.51px;">0</span>
<span style="top:1536.3px;font-size:27px;line-height:35px;left:1885px;letter-spacing:0.32px;">6 hours</span>
<div style="left:2134.5px;top:1534px;width:172.544px;height:42px;background:#f3f3f5;border-radius:7px;"></div>
<svg style="left:2142.0px;top:1541px;" width="27.5" height="27.5" viewBox="-2 0 104 104"><polygon points="50.00,8.00 84.40,24.57 92.90,61.79 69.09,91.64 30.91,91.64 7.10,61.79 15.60,24.57" fill="#326de6" stroke="#326de6" stroke-width="12" stroke-linejoin="round"/><circle cx="50" cy="52" r="23.5" fill="none" stroke="#fff" stroke-width="7"/><line x1="50.0" y1="46.0" x2="50.0" y2="30.0" stroke="#fff" stroke-width="3.2"/><line x1="50.0" y1="26.0" x2="50.0" y2="14.5" stroke="#fff" stroke-width="4.6" stroke-linecap="round"/><line x1="54.7" y1="48.3" x2="67.2" y2="38.3" stroke="#fff" stroke-width="3.2"/><line x1="70.3" y1="35.8" x2="79.3" y2="28.6" stroke="#fff" stroke-width="4.6" stroke-linecap="round"/><line x1="55.8" y1="53.3" x2="71.4" y2="56.9" stroke="#fff" stroke-width="3.2"/><line x1="75.3" y1="57.8" x2="86.6" y2="60.3" stroke="#fff" stroke-width="4.6" stroke-linecap="round"/><line x1="52.6" y1="57.4" x2="59.5" y2="71.8" stroke="#fff" stroke-width="3.2"/><line x1="61.3" y1="75.4" x2="66.3" y2="85.8" stroke="#fff" stroke-width="4.6" stroke-linecap="round"/><line x1="47.4" y1="57.4" x2="40.5" y2="71.8" stroke="#fff" stroke-width="3.2"/><line x1="38.7" y1="75.4" x2="33.7" y2="85.8" stroke="#fff" stroke-width="4.6" stroke-linecap="round"/><line x1="44.2" y1="53.3" x2="28.6" y2="56.9" stroke="#fff" stroke-width="3.2"/><line x1="24.7" y1="57.8" x2="13.4" y2="60.3" stroke="#fff" stroke-width="4.6" stroke-linecap="round"/><line x1="45.3" y1="48.3" x2="32.8" y2="38.3" stroke="#fff" stroke-width="3.2"/><line x1="29.7" y1="35.8" x2="20.7" y2="28.6" stroke="#fff" stroke-width="4.6" stroke-linecap="round"/><circle cx="50" cy="52" r="8" fill="#fff"/><circle cx="50" cy="52" r="3.2" fill="#4a55c8"/></svg>
<span style="top:1537.5px;font-size:27px;line-height:35px;left:2183.0px;letter-spacing:0.48px;color:#46536a;">team:</span>
<span style="top:1537.5px;font-size:27px;line-height:35px;left:2255.414px;letter-spacing:-0.17px;color:#0a2a6b;">ads</span>
<div style="left:2316.294px;top:1534px;width:392.27px;height:42px;background:#f3f3f5;border-radius:7px;"></div>
<svg style="left:2323.794px;top:1541px;" width="27.5" height="27.5" viewBox="-2 0 104 104"><polygon points="50.00,8.00 84.40,24.57 92.90,61.79 69.09,91.64 30.91,91.64 7.10,61.79 15.60,24.57" fill="#326de6" stroke="#326de6" stroke-width="12" stroke-linejoin="round"/><circle cx="50" cy="52" r="23.5" fill="none" stroke="#fff" stroke-width="7"/><line x1="50.0" y1="46.0" x2="50.0" y2="30.0" stroke="#fff" stroke-width="3.2"/><line x1="50.0" y1="26.0" x2="50.0" y2="14.5" stroke="#fff" stroke-width="4.6" stroke-linecap="round"/><line x1="54.7" y1="48.3" x2="67.2" y2="38.3" stroke="#fff" stroke-width="3.2"/><line x1="70.3" y1="35.8" x2="79.3" y2="28.6" stroke="#fff" stroke-width="4.6" stroke-linecap="round"/><line x1="55.8" y1="53.3" x2="71.4" y2="56.9" stroke="#fff" stroke-width="3.2"/><line x1="75.3" y1="57.8" x2="86.6" y2="60.3" stroke="#fff" stroke-width="4.6" stroke-linecap="round"/><line x1="52.6" y1="57.4" x2="59.5" y2="71.8" stroke="#fff" stroke-width="3.2"/><line x1="61.3" y1="75.4" x2="66.3" y2="85.8" stroke="#fff" stroke-width="4.6" stroke-linecap="round"/><line x1="47.4" y1="57.4" x2="40.5" y2="71.8" stroke="#fff" stroke-width="3.2"/><line x1="38.7" y1="75.4" x2="33.7" y2="85.8" stroke="#fff" stroke-width="4.6" stroke-linecap="round"/><line x1="44.2" y1="53.3" x2="28.6" y2="56.9" stroke="#fff" stroke-width="3.2"/><line x1="24.7" y1="57.8" x2="13.4" y2="60.3" stroke="#fff" stroke-width="4.6" stroke-linecap="round"/><line x1="45.3" y1="48.3" x2="32.8" y2="38.3" stroke="#fff" stroke-width="3.2"/><line x1="29.7" y1="35.8" x2="20.7" y2="28.6" stroke="#fff" stroke-width="4.6" stroke-linecap="round"/><circle cx="50" cy="52" r="8" fill="#fff"/><circle cx="50" cy="52" r="3.2" fill="#4a55c8"/></svg>
<span style="top:1537.5px;font-size:27px;line-height:35px;left:2364.794px;letter-spacing:0.12px;color:#46536a;">chart_name:</span>
<span style="top:1537.5px;font-size:27px;line-height:35px;left:2518.692px;letter-spacing:0.44px;color:#0a2a6b;">dd-trace-demo</span>
<div style="left:2717.814px;top:1534px;width:429.32px;height:42px;background:#f3f3f5;border-radius:7px;"></div>
<svg style="left:2725.314px;top:1541px;" width="27.5" height="27.5" viewBox="-2 0 104 104"><polygon points="50.00,8.00 84.40,24.57 92.90,61.79 69.09,91.64 30.91,91.64 7.10,61.79 15.60,24.57" fill="#326de6" stroke="#326de6" stroke-width="12" stroke-linejoin="round"/><circle cx="50" cy="52" r="23.5" fill="none" stroke="#fff" stroke-width="7"/><line x1="50.0" y1="46.0" x2="50.0" y2="30.0" stroke="#fff" stroke-width="3.2"/><line x1="50.0" y1="26.0" x2="50.0" y2="14.5" stroke="#fff" stroke-width="4.6" stroke-linecap="round"/><line x1="54.7" y1="48.3" x2="67.2" y2="38.3" stroke="#fff" stroke-width="3.2"/><line x1="70.3" y1="35.8" x2="79.3" y2="28.6" stroke="#fff" stroke-width="4.6" stroke-linecap="round"/><line x1="55.8" y1="53.3" x2="71.4" y2="56.9" stroke="#fff" stroke-width="3.2"/><line x1="75.3" y1="57.8" x2="86.6" y2="60.3" stroke="#fff" stroke-width="4.6" stroke-linecap="round"/><line x1="52.6" y1="57.4" x2="59.5" y2="71.8" stroke="#fff" stroke-width="3.2"/><line x1="61.3" y1="75.4" x2="66.3" y2="85.8" stroke="#fff" stroke-width="4.6" stroke-linecap="round"/><line x1="47.4" y1="57.4" x2="40.5" y2="71.8" stroke="#fff" stroke-width="3.2"/><line x1="38.7" y1="75.4" x2="33.7" y2="85.8" stroke="#fff" stroke-width="4.6" stroke-linecap="round"/><line x1="44.2" y1="53.3" x2="28.6" y2="56.9" stroke="#fff" stroke-width="3.2"/><line x1="24.7" y1="57.8" x2="13.4" y2="60.3" stroke="#fff" stroke-width="4.6" stroke-linecap="round"/><line x1="45.3" y1="48.3" x2="32.8" y2="38.3" stroke="#fff" stroke-width="3.2"/><line x1="29.7" y1="35.8" x2="20.7" y2="28.6" stroke="#fff" stroke-width="4.6" stroke-linecap="round"/><circle cx="50" cy="52" r="8" fill="#fff"/><circle cx="50" cy="52" r="3.2" fill="#4a55c8"/></svg>
<span style="top:1537.5px;font-size:27px;line-height:35px;left:2766.314px;letter-spacing:0.25px;color:#46536a;">app:</span>
<span style="top:1537.5px;font-size:27px;line-height:35px;left:2822.348px;letter-spacing:0.73px;color:#0a2a6b;">product-recommendation</span>
<div style="left:3156.384px;top:1534px;width:63px;height:42px;background:linear-gradient(90deg,#f3f3f5 75%,#f8f8fa 100%);border-radius:7px 0 0 7px;overflow:hidden;"><span style="left:48.5px;top:3.5px;font-size:27px;line-height:35px;color:#0a2a6b;letter-spacing:1px;">...</span></div>
<svg style="left:3164.384px;top:1541px;" width="27.5" height="27.5" viewBox="-2 0 104 104"><polygon points="50.00,8.00 84.40,24.57 92.90,61.79 69.09,91.64 30.91,91.64 7.10,61.79 15.60,24.57" fill="#326de6" stroke="#326de6" stroke-width="12" stroke-linejoin="round"/><circle cx="50" cy="52" r="23.5" fill="none" stroke="#fff" stroke-width="7"/><line x1="50.0" y1="46.0" x2="50.0" y2="30.0" stroke="#fff" stroke-width="3.2"/><line x1="50.0" y1="26.0" x2="50.0" y2="14.5" stroke="#fff" stroke-width="4.6" stroke-linecap="round"/><line x1="54.7" y1="48.3" x2="67.2" y2="38.3" stroke="#fff" stroke-width="3.2"/><line x1="70.3" y1="35.8" x2="79.3" y2="28.6" stroke="#fff" stroke-width="4.6" stroke-linecap="round"/><line x1="55.8" y1="53.3" x2="71.4" y2="56.9" stroke="#fff" stroke-width="3.2"/><line x1="75.3" y1="57.8" x2="86.6" y2="60.3" stroke="#fff" stroke-width="4.6" stroke-linecap="round"/><line x1="52.6" y1="57.4" x2="59.5" y2="71.8" stroke="#fff" stroke-width="3.2"/><line x1="61.3" y1="75.4" x2="66.3" y2="85.8" stroke="#fff" stroke-width="4.6" stroke-linecap="round"/><line x1="47.4" y1="57.4" x2="40.5" y2="71.8" stroke="#fff" stroke-width="3.2"/><line x1="38.7" y1="75.4" x2="33.7" y2="85.8" stroke="#fff" stroke-width="4.6" stroke-linecap="round"/><line x1="44.2" y1="53.3" x2="28.6" y2="56.9" stroke="#fff" stroke-width="3.2"/><line x1="24.7" y1="57.8" x2="13.4" y2="60.3" stroke="#fff" stroke-width="4.6" stroke-linecap="round"/><line x1="45.3" y1="48.3" x2="32.8" y2="38.3" stroke="#fff" stroke-width="3.2"/><line x1="29.7" y1="35.8" x2="20.7" y2="28.6" stroke="#fff" stroke-width="4.6" stroke-linecap="round"/><circle cx="50" cy="52" r="8" fill="#fff"/><circle cx="50" cy="52" r="3.2" fill="#4a55c8"/></svg>
<div style="left:3226px;top:1534px;width:47px;height:42px;border:2px solid #d8dade;border-radius:8px;background:#fff;"></div>
<span style="top:1537.5px;font-size:27px;line-height:35px;left:3235px;letter-spacing:-0.7px;">+5</span>
<div style="left:3310px;top:1540px;width:8px;height:8px;background:#8d9399;border-radius:4px;"></div>
<div style="left:3310px;top:1552px;width:8px;height:8px;background:#8d9399;border-radius:4px;"></div>
<div style="left:3310px;top:1564px;width:8px;height:8px;background:#8d9399;border-radius:4px;"></div>
<div style="left:666px;top:1590px;width:2676px;height:2px;background:#dfe0e3;"></div>
<span style="top:1608.3px;font-size:27px;line-height:35px;left:740px;letter-spacing:0.46px;">product-recommendation-5b4894dbf-9x2fx</span>
<div style="left:1328px;top:1606px;width:125.23px;height:36px;background:#e9f8ed;border-radius:3px;"></div>
<span style="top:1612.0px;font-size:22.5px;line-height:29px;left:1336px;letter-spacing:0.6px;font-weight:700;color:#2e9b4e;">RUNNING</span>
<span style="top:1608.3px;font-size:27px;line-height:35px;right:1642.6px;letter-spacing:-0.07px;">1 / 1</span>
<span style="top:1608.3px;font-size:27px;line-height:35px;right:1514.5px;letter-spacing:-0.51px;">0</span>
<span style="top:1608.3px;font-size:27px;line-height:35px;left:1885px;letter-spacing:0.32px;">6 hours</span>
<div style="left:2134.5px;top:1606px;width:172.544px;height:42px;background:#f3f3f5;border-radius:7px;"></div>
<svg style="left:2142.0px;top:1613px;" width="27.5" height="27.5" viewBox="-2 0 104 104"><polygon points="50.00,8.00 84.40,24.57 92.90,61.79 69.09,91.64 30.91,91.64 7.10,61.79 15.60,24.57" fill="#326de6" stroke="#326de6" stroke-width="12" stroke-linejoin="round"/><circle cx="50" cy="52" r="23.5" fill="none" stroke="#fff" stroke-width="7"/><line x1="50.0" y1="46.0" x2="50.0" y2="30.0" stroke="#fff" stroke-width="3.2"/><line x1="50.0" y1="26.0" x2="50.0" y2="14.5" stroke="#fff" stroke-width="4.6" stroke-linecap="round"/><line x1="54.7" y1="48.3" x2="67.2" y2="38.3" stroke="#fff" stroke-width="3.2"/><line x1="70.3" y1="35.8" x2="79.3" y2="28.6" stroke="#fff" stroke-width="4.6" stroke-linecap="round"/><line x1="55.8" y1="53.3" x2="71.4" y2="56.9" stroke="#fff" stroke-width="3.2"/><line x1="75.3" y1="57.8" x2="86.6" y2="60.3" stroke="#fff" stroke-width="4.6" stroke-linecap="round"/><line x1="52.6" y1="57.4" x2="59.5" y2="71.8" stroke="#fff" stroke-width="3.2"/><line x1="61.3" y1="75.4" x2="66.3" y2="85.8" stroke="#fff" stroke-width="4.6" stroke-linecap="round"/><line x1="47.4" y1="57.4" x2="40.5" y2="71.8" stroke="#fff" stroke-width="3.2"/><line x1="38.7" y1="75.4" x2="33.7" y2="85.8" stroke="#fff" stroke-width="4.6" stroke-linecap="round"/><line x1="44.2" y1="53.3" x2="28.6" y2="56.9" stroke="#fff" stroke-width="3.2"/><line x1="24.7" y1="57.8" x2="13.4" y2="60.3" stroke="#fff" stroke-width="4.6" stroke-linecap="round"/><line x1="45.3" y1="48.3" x2="32.8" y2="38.3" stroke="#fff" stroke-width="3.2"/><line x1="29.7" y1="35.8" x2="20.7" y2="28.6" stroke="#fff" stroke-width="4.6" stroke-linecap="round"/><circle cx="50" cy="52" r="8" fill="#fff"/><circle cx="50" cy="52" r="3.2" fill="#4a55c8"/></svg>
<span style="top:1609.5px;font-size:27px;line-height:35px;left:2183.0px;letter-spacing:0.48px;color:#46536a;">team:</span>
<span style="top:1609.5px;font-size:27px;line-height:35px;left:2255.414px;letter-spacing:-0.17px;color:#0a2a6b;">ads</span>
<div style="left:2316.294px;top:1606px;width:392.27px;height:42px;background:#f3f3f5;border-radius:7px;"></div>
<svg style="left:2323.794px;top:1613px;" width="27.5" height="27.5" viewBox="-2 0 104 104"><polygon points="50.00,8.00 84.40,24.57 92.90,61.79 69.09,91.64 30.91,91.64 7.10,61.79 15.60,24.57" fill="#326de6" stroke="#326de6" stroke-width="12" stroke-linejoin="round"/><circle cx="50" cy="52" r="23.5" fill="none" stroke="#fff" stroke-width="7"/><line x1="50.0" y1="46.0" x2="50.0" y2="30.0" stroke="#fff" stroke-width="3.2"/><line x1="50.0" y1="26.0" x2="50.0" y2="14.5" stroke="#fff" stroke-width="4.6" stroke-linecap="round"/><line x1="54.7" y1="48.3" x2="67.2" y2="38.3" stroke="#fff" stroke-width="3.2"/><line x1="70.3" y1="35.8" x2="79.3" y2="28.6" stroke="#fff" stroke-width="4.6" stroke-linecap="round"/><line x1="55.8" y1="53.3" x2="71.4" y2="56.9" stroke="#fff" stroke-width="3.2"/><line x1="75.3" y1="57.8" x2="86.6" y2="60.3" stroke="#fff" stroke-width="4.6" stroke-linecap="round"/><line x1="52.6" y1="57.4" x2="59.5" y2="71.8" stroke="#fff" stroke-width="3.2"/><line x1="61.3" y1="75.4" x2="66.3" y2="85.8" stroke="#fff" stroke-width="4.6" stroke-linecap="round"/><line x1="47.4" y1="57.4" x2="40.5" y2="71.8" stroke="#fff" stroke-width="3.2"/><line x1="38.7" y1="75.4" x2="33.7" y2="85.8" stroke="#fff" stroke-width="4.6" stroke-linecap="round"/><line x1="44.2" y1="53.3" x2="28.6" y2="56.9" stroke="#fff" stroke-width="3.2"/><line x1="24.7" y1="57.8" x2="13.4" y2="60.3" stroke="#fff" stroke-width="4.6" stroke-linecap="round"/><line x1="45.3" y1="48.3" x2="32.8" y2="38.3" stroke="#fff" stroke-width="3.2"/><line x1="29.7" y1="35.8" x2="20.7" y2="28.6" stroke="#fff" stroke-width="4.6" stroke-linecap="round"/><circle cx="50" cy="52" r="8" fill="#fff"/><circle cx="50" cy="52" r="3.2" fill="#4a55c8"/></svg>
<span style="top:1609.5px;font-size:27px;line-height:35px;left:2364.794px;letter-spacing:0.12px;color:#46536a;">chart_name:</span>
<span style="top:1609.5px;font-size:27px;line-height:35px;left:2518.692px;letter-spacing:0.44px;color:#0a2a6b;">dd-trace-demo</span>
<div style="left:2717.814px;top:1606px;width:429.32px;height:42px;background:#f3f3f5;border-radius:7px;"></div>
<svg style="left:2725.314px;top:1613px;" width="27.5" height="27.5" viewBox="-2 0 104 104"><polygon points="50.00,8.00 84.40,24.57 92.90,61.79 69.09,91.64 30.91,91.64 7.10,61.79 15.60,24.57" fill="#326de6" stroke="#326de6" stroke-width="12" stroke-linejoin="round"/><circle cx="50" cy="52" r="23.5" fill="none" stroke="#fff" stroke-width="7"/><line x1="50.0" y1="46.0" x2="50.0" y2="30.0" stroke="#fff" stroke-width="3.2"/><line x1="50.0" y1="26.0" x2="50.0" y2="14.5" stroke="#fff" stroke-width="4.6" stroke-linecap="round"/><line x1="54.7" y1="48.3" x2="67.2" y2="38.3" stroke="#fff" stroke-width="3.2"/><line x1="70.3" y1="35.8" x2="79.3" y2="28.6" stroke="#fff" stroke-width="4.6" stroke-linecap="round"/><line x1="55.8" y1="53.3" x2="71.4" y2="56.9" stroke="#fff" stroke-width="3.2"/><line x1="75.3" y1="57.8" x2="86.6" y2="60.3" stroke="#fff" stroke-width="4.6" stroke-linecap="round"/><line x1="52.6" y1="57.4" x2="59.5" y2="71.8" stroke="#fff" stroke-width="3.2"/><line x1="61.3" y1="75.4" x2="66.3" y2="85.8" stroke="#fff" stroke-width="4.6" stroke-linecap="round"/><line x1="47.4" y1="57.4" x2="40.5" y2="71.8" stroke="#fff" stroke-width="3.2"/><line x1="38.7" y1="75.4" x2="33.7" y2="85.8" stroke="#fff" stroke-width="4.6" stroke-linecap="round"/><line x1="44.2" y1="53.3" x2="28.6" y2="56.9" stroke="#fff" stroke-width="3.2"/><line x1="24.7" y1="57.8" x2="13.4" y2="60.3" stroke="#fff" stroke-width="4.6" stroke-linecap="round"/><line x1="45.3" y1="48.3" x2="32.8" y2="38.3" stroke="#fff" stroke-width="3.2"/><line x1="29.7" y1="35.8" x2="20.7" y2="28.6" stroke="#fff" stroke-width="4.6" stroke-linecap="round"/><circle cx="50" cy="52" r="8" fill="#fff"/><circle cx="50" cy="52" r="3.2" fill="#4a55c8"/></svg>
<span style="top:1609.5px;font-size:27px;line-height:35px;left:2766.314px;letter-spacing:0.25px;color:#46536a;">app:</span>
<span style="top:1609.5px;font-size:27px;line-height:35px;left:2822.348px;letter-spacing:0.73px;color:#0a2a6b;">product-recommendation</span>
<div style="left:3156.384px;top:1606px;width:63px;height:42px;background:linear-gradient(90deg,#f3f3f5 75%,#f8f8fa 100%);border-radius:7px 0 0 7px;overflow:hidden;"><span style="left:48.5px;top:3.5px;font-size:27px;line-height:35px;color:#0a2a6b;letter-spacing:1px;">...</span></div>
<svg style="left:3164.384px;top:1613px;" width="27.5" height="27.5" viewBox="-2 0 104 104"><polygon points="50.00,8.00 84.40,24.57 92.90,61.79 69.09,91.64 30.91,91.64 7.10,61.79 15.60,24.57" fill="#326de6" stroke="#326de6" stroke-width="12" stroke-linejoin="round"/><circle cx="50" cy="52" r="23.5" fill="none" stroke="#fff" stroke-width="7"/><line x1="50.0" y1="46.0" x2="50.0" y2="30.0" stroke="#fff" stroke-width="3.2"/><line x1="50.0" y1="26.0" x2="50.0" y2="14.5" stroke="#fff" stroke-width="4.6" stroke-linecap="round"/><line x1="54.7" y1="48.3" x2="67.2" y2="38.3" stroke="#fff" stroke-width="3.2"/><line x1="70.3" y1="35.8" x2="79.3" y2="28.6" stroke="#fff" stroke-width="4.6" stroke-linecap="round"/><line x1="55.8" y1="53.3" x2="71.4" y2="56.9" stroke="#fff" stroke-width="3.2"/><line x1="75.3" y1="57.8" x2="86.6" y2="60.3" stroke="#fff" stroke-width="4.6" stroke-linecap="round"/><line x1="52.6" y1="57.4" x2="59.5" y2="71.8" stroke="#fff" stroke-width="3.2"/><line x1="61.3" y1="75.4" x2="66.3" y2="85.8" stroke="#fff" stroke-width="4.6" stroke-linecap="round"/><line x1="47.4" y1="57.4" x2="40.5" y2="71.8" stroke="#fff" stroke-width="3.2"/><line x1="38.7" y1="75.4" x2="33.7" y2="85.8" stroke="#fff" stroke-width="4.6" stroke-linecap="round"/><line x1="44.2" y1="53.3" x2="28.6" y2="56.9" stroke="#fff" stroke-width="3.2"/><line x1="24.7" y1="57.8" x2="13.4" y2="60.3" stroke="#fff" stroke-width="4.6" stroke-linecap="round"/><line x1="45.3" y1="48.3" x2="32.8" y2="38.3" stroke="#fff" stroke-width="3.2"/><line x1="29.7" y1="35.8" x2="20.7" y2="28.6" stroke="#fff" stroke-width="4.6" stroke-linecap="round"/><circle cx="50" cy="52" r="8" fill="#fff"/><circle cx="50" cy="52" r="3.2" fill="#4a55c8"/></svg>
<div style="left:3226px;top:1606px;width:47px;height:42px;border:2px solid #d8dade;border-radius:8px;background:#fff;"></div>
<span style="top:1609.5px;font-size:27px;line-height:35px;left:3235px;letter-spacing:-0.7px;">+5</span>
<div style="left:3310px;top:1612px;width:8px;height:8px;background:#8d9399;border-radius:4px;"></div>
<div style="left:3310px;top:1624px;width:8px;height:8px;background:#8d9399;border-radius:4px;"></div>
<div style="left:3310px;top:1636px;width:8px;height:8px;background:#8d9399;border-radius:4px;"></div>
<div style="left:666px;top:1664px;width:2676px;height:2px;background:#dfe0e3;"></div>
<span style="top:1684.1px;font-size:27px;line-height:35px;left:1947.5px;letter-spacing:-0.18px;color:#0b6cbf;">View all...</span>
<div style="left:666px;top:1732px;width:2676px;height:2px;background:#dfe0e3;"></div>
<svg style="left:690.375px;top:1757.75px;" width="12.25" height="20.5" viewBox="0 0 12.25 20.5"><path d="M1.5 1.5L10.25 10.25L1.5 19.0" fill="none" stroke="#1c2b34" stroke-width="2.5" stroke-linecap="round" stroke-linejoin="round"/></svg>
<span style="top:1750.3px;font-size:27px;line-height:35px;left:740px;letter-spacing:0.62px;">app:product-recommendation-lite</span>
<div style="left:1188.058px;top:1748.0px;width:4px;height:36px;background:#dedfe3;border-radius:2px;"></div>
<div style="left:1225.058px;top:1749.0px;width:39.168px;height:34.5px;background:#f2f3f4;border-radius:4px;"></div>
<span style="top:1751.2px;font-size:22px;line-height:29px;left:1232.058px;letter-spacing:0.35px;font-weight:700;color:#5f666f;">33</span>
<div style="left:1328px;top:1748.0px;width:10px;height:40px;background:#3fbf5f;border-radius:5px;"></div>
<span style="top:1751.5px;font-size:27px;line-height:35px;left:1346px;letter-spacing:-0.51px;">33</span>
<div style="left:1422px;top:1748.0px;width:10px;height:40px;background:#fef2e0;border-radius:5px;"></div>
<span style="top:1751.5px;font-size:27px;line-height:35px;left:1440px;letter-spacing:-0.51px;color:#9ba0a8;">0</span>
<div style="left:1516px;top:1748.0px;width:10px;height:40px;background:#fde6e9;border-radius:5px;"></div>
<span style="top:1751.5px;font-size:27px;line-height:35px;left:1534px;letter-spacing:-0.51px;color:#9ba0a8;">0</span>
<span style="top:1749.8px;font-size:27px;line-height:35px;right:1642.2px;letter-spacing:-0.19px;">33 / 33</span>
<span style="top:1749.8px;font-size:27px;line-height:35px;right:1514.5px;letter-spacing:-0.51px;">1</span>
<span style="top:1750.3px;font-size:27px;line-height:35px;left:1885px;letter-spacing:-0.11px;">7 days - 6 hours</span>
<span style="top:1750.3px;font-size:27px;line-height:35px;left:2135px;letter-spacing:-0.62px;color:#9aa0a8;">-</span>
<div style="left:666px;top:1802px;width:2676px;height:2px;background:#dfe0e3;"></div>
<svg style="left:690.375px;top:1827.75px;" width="12.25" height="20.5" viewBox="0 0 12.25 20.5"><path d="M1.5 1.5L10.25 10.25L1.5 19.0" fill="none" stroke="#1c2b34" stroke-width="2.5" stroke-linecap="round" stroke-linejoin="round"/></svg>
<span style="top:1820.3px;font-size:27px;line-height:35px;left:740px;letter-spacing:0.23px;">app:ad-auction-2</span>
<div style="left:978.888px;top:1818.0px;width:4px;height:36px;background:#dedfe3;border-radius:2px;"></div>
<div style="left:1015.888px;top:1819.0px;width:39.168px;height:34.5px;background:#f2f3f4;border-radius:4px;"></div>
<span style="top:1821.2px;font-size:22px;line-height:29px;left:1022.888px;letter-spacing:0.35px;font-weight:700;color:#5f666f;">20</span>
<div style="left:1328px;top:1818.0px;width:10px;height:40px;background:#3fbf5f;border-radius:5px;"></div>
<span style="top:1821.5px;font-size:27px;line-height:35px;left:1346px;letter-spacing:-0.51px;">20</span>
<div style="left:1422px;top:1818.0px;width:10px;height:40px;background:#fef2e0;border-radius:5px;"></div>
<span style="top:1821.5px;font-size:27px;line-height:35px;left:1440px;letter-spacing:-0.51px;color:#9ba0a8;">0</span>
<div style="left:1516px;top:1818.0px;width:10px;height:40px;background:#fde6e9;border-radius:5px;"></div>
<span style="top:1821.5px;font-size:27px;line-height:35px;left:1534px;letter-spacing:-0.51px;color:#9ba0a8;">0</span>
<span style="top:1819.8px;font-size:27px;line-height:35px;right:1642.2px;letter-spacing:-0.19px;">20 / 20</span>
<span style="top:1819.8px;font-size:27px;line-height:35px;right:1514.5px;letter-spacing:-0.51px;">0</span>
<span style="top:1820.3px;font-size:27px;line-height:35px;left:1885px;letter-spacing:-0.11px;">7 days - 6 hours</span>
<span style="top:1820.3px;font-size:27px;line-height:35px;left:2135px;letter-spacing:-0.62px;color:#9aa0a8;">-</span>
<div style="left:666px;top:1872px;width:2676px;height:2px;background:#dfe0e3;"></div>
<svg style="left:690.375px;top:1897.75px;" width="12.25" height="20.5" viewBox="0 0 12.25 20.5"><path d="M1.5 1.5L10.25 10.25L1.5 19.0" fill="none" stroke="#1c2b34" stroke-width="2.5" stroke-linecap="round" stroke-linejoin="round"/></svg>
<span style="top:1890.3px;font-size:27px;line-height:35px;left:740px;letter-spacing:0.35px;">app:ad-auction</span>
<div style="left:956.008px;top:1888.0px;width:4px;height:36px;background:#dedfe3;border-radius:2px;"></div>
<div style="left:993.008px;top:1889.0px;width:26.584px;height:34.5px;background:#f2f3f4;border-radius:4px;"></div>
<span style="top:1891.2px;font-size:22px;line-height:29px;left:1000.008px;letter-spacing:0.35px;font-weight:700;color:#5f666f;">7</span>
<div style="left:1328px;top:1888.0px;width:10px;height:40px;background:#3fbf5f;border-radius:5px;"></div>
<span style="top:1891.5px;font-size:27px;line-height:35px;left:1346px;letter-spacing:-0.51px;">7</span>
<div style="left:1422px;top:1888.0px;width:10px;height:40px;background:#fef2e0;border-radius:5px;"></div>
<span style="top:1891.5px;font-size:27px;line-height:35px;left:1440px;letter-spacing:-0.51px;color:#9ba0a8;">0</span>
<div style="left:1516px;top:1888.0px;width:10px;height:40px;background:#fde6e9;border-radius:5px;"></div>
<span style="top:1891.5px;font-size:27px;line-height:35px;left:1534px;letter-spacing:-0.51px;color:#9ba0a8;">0</span>
<span style="top:1889.8px;font-size:27px;line-height:35px;right:1642.1px;letter-spacing:-0.07px;">7 / 7</span>
<span style="top:1889.8px;font-size:27px;line-height:35px;right:1514.5px;letter-spacing:-0.51px;">0</span>
<span style="top:1890.3px;font-size:27px;line-height:35px;left:1885px;letter-spacing:-0.11px;">7 days - 6 hours</span>
<span style="top:1890.3px;font-size:27px;line-height:35px;left:2135px;letter-spacing:-0.62px;color:#9aa0a8;">-</span>
</div></body></html>
